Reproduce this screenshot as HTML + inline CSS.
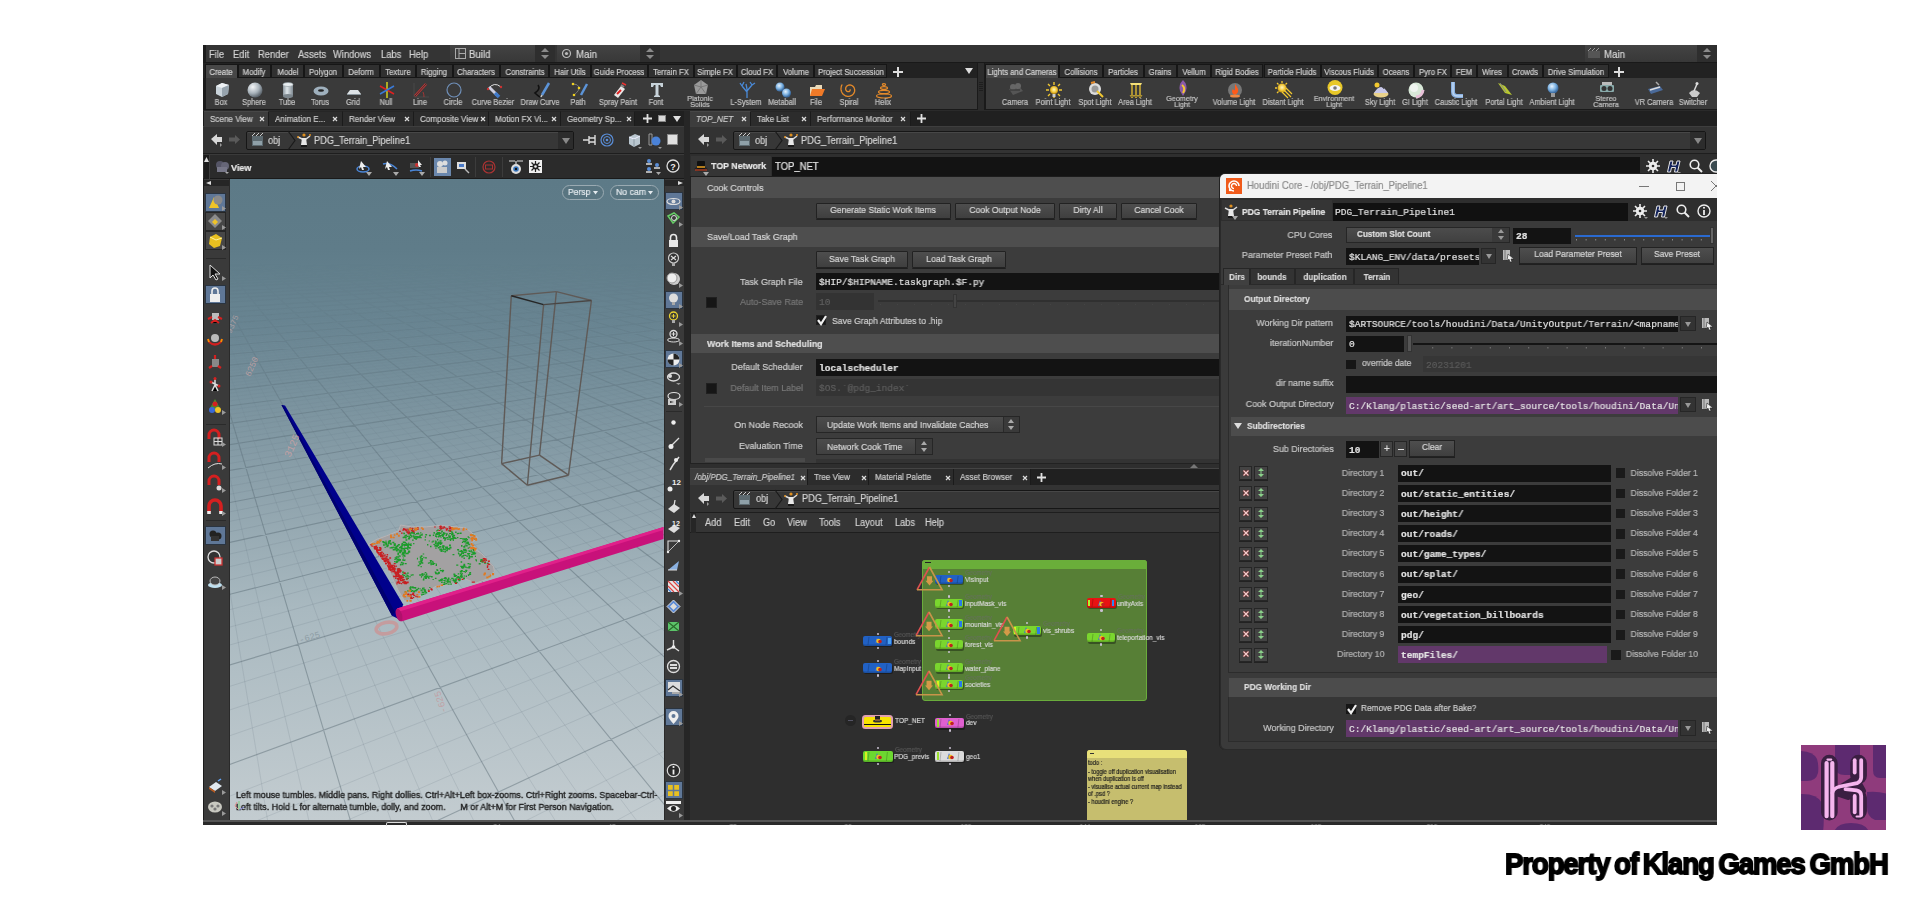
<!DOCTYPE html>
<html><head><meta charset="utf-8">
<style>
*{margin:0;padding:0;box-sizing:border-box}
html,body{width:1920px;height:911px;overflow:hidden;background:#fff;font-family:"Liberation Sans",sans-serif;color:#c8c8c8}
.a{position:absolute}
.t{position:absolute;white-space:nowrap;line-height:1;-webkit-text-stroke:0.2px currentColor;will-change:transform}
.m{font-family:"Liberation Mono",monospace}
svg{position:absolute;overflow:visible}









</style></head><body>
<div class="a" style="left:203px;top:45px;width:1514px;height:780px;background:#2a2a2a"></div><div class="a" style="left:203px;top:45px;width:1514px;height:18px;background:#343434;border-bottom:1px solid #191919;border-left:3px solid #1c1c1c"></div><div class="t" style="left:209px;transform-origin:0 50%;transform:scaleX(0.92);top:49.9px;font-size:10.2px;color:#d2d2d2;">File</div><div class="t" style="left:233px;transform-origin:0 50%;transform:scaleX(0.92);top:49.9px;font-size:10.2px;color:#d2d2d2;">Edit</div><div class="t" style="left:258px;transform-origin:0 50%;transform:scaleX(0.92);top:49.9px;font-size:10.2px;color:#d2d2d2;">Render</div><div class="t" style="left:297.5px;transform-origin:0 50%;transform:scaleX(0.92);top:49.9px;font-size:10.2px;color:#d2d2d2;">Assets</div><div class="t" style="left:333px;transform-origin:0 50%;transform:scaleX(0.92);top:49.9px;font-size:10.2px;color:#d2d2d2;">Windows</div><div class="t" style="left:381px;transform-origin:0 50%;transform:scaleX(0.92);top:49.9px;font-size:10.2px;color:#d2d2d2;">Labs</div><div class="t" style="left:409px;transform-origin:0 50%;transform:scaleX(0.92);top:49.9px;font-size:10.2px;color:#d2d2d2;">Help</div><div class="a" style="left:450px;top:45px;width:105px;height:17px;background:linear-gradient(#434343,#383838);border-right:1px solid #252525"></div><div class="a" style="left:535px;top:45px;width:20px;height:17px;background:#2e2e2e"></div><div class="t" style="left:469px;transform-origin:0 50%;transform:scaleX(0.92);top:48.75px;font-size:10.5px;color:#d8d8d8;">Build</div><svg style="left:541px;top:48px;" width="8" height="11" viewBox="0 0 8 11"><path d="M4 0L8 4H0Z M4 11L8 7H0Z" fill="#8a8a8a"/></svg><svg style="left:455px;top:48px;" width="11" height="11" viewBox="0 0 11 11"><rect x="0.5" y="0.5" width="10" height="10" fill="none" stroke="#aaa"/><path d="M4 1V10 M4 5.5H10" stroke="#aaa"/></svg><div class="a" style="left:557px;top:45px;width:103px;height:17px;background:linear-gradient(#434343,#383838);border-right:1px solid #252525"></div><div class="a" style="left:640px;top:45px;width:20px;height:17px;background:#2e2e2e"></div><div class="t" style="left:576px;transform-origin:0 50%;transform:scaleX(0.92);top:48.75px;font-size:10.5px;color:#d8d8d8;">Main</div><svg style="left:646px;top:48px;" width="8" height="11" viewBox="0 0 8 11"><path d="M4 0L8 4H0Z M4 11L8 7H0Z" fill="#8a8a8a"/></svg><svg style="left:561px;top:48px;" width="11" height="11" viewBox="0 0 11 11"><circle cx="5.5" cy="5.5" r="4" fill="none" stroke="#bbb" stroke-width="1.2"/><circle cx="5.5" cy="5.5" r="1.6" fill="#bbb"/></svg><div class="a" style="left:1585px;top:45px;width:132px;height:17px;background:linear-gradient(#434343,#383838);border-right:1px solid #252525"></div><div class="a" style="left:1697px;top:45px;width:20px;height:17px;background:#2e2e2e"></div><div class="t" style="left:1604px;transform-origin:0 50%;transform:scaleX(0.92);top:48.75px;font-size:10.5px;color:#d8d8d8;">Main</div><svg style="left:1703px;top:48px;" width="8" height="11" viewBox="0 0 8 11"><path d="M4 0L8 4H0Z M4 11L8 7H0Z" fill="#8a8a8a"/></svg><svg style="left:1588px;top:48px;" width="12" height="10" viewBox="0 0 12 10"><rect x="0" y="3" width="12" height="7" fill="#555"/><path d="M0 3L3 0M4 3L7 0M8 3L11 0" stroke="#999"/></svg><div class="a" style="left:203px;top:63px;width:1514px;height:15px;background:#222"></div><div class="a" style="left:205px;top:64px;width:32.5px;height:15px;background:#474747;border:1px solid #161616;border-bottom:none"></div><div class="t" style="left:221.25px;transform:translateX(-50%) scaleX(0.9);top:67.9px;font-size:8.6px;color:#d5d5d5;">Create</div><div class="a" style="left:237.5px;top:64px;width:33.5px;height:14px;background:#303030;border:1px solid #161616;border-bottom:1px solid #161616"></div><div class="t" style="left:254.25px;transform:translateX(-50%) scaleX(0.9);top:67.9px;font-size:8.6px;color:#cfcfcf;">Modify</div><div class="a" style="left:271px;top:64px;width:33px;height:14px;background:#303030;border:1px solid #161616;border-bottom:1px solid #161616"></div><div class="t" style="left:287.5px;transform:translateX(-50%) scaleX(0.9);top:67.9px;font-size:8.6px;color:#cfcfcf;">Model</div><div class="a" style="left:304px;top:64px;width:38.5px;height:14px;background:#303030;border:1px solid #161616;border-bottom:1px solid #161616"></div><div class="t" style="left:323.25px;transform:translateX(-50%) scaleX(0.9);top:67.9px;font-size:8.6px;color:#cfcfcf;">Polygon</div><div class="a" style="left:342.5px;top:64px;width:37.5px;height:14px;background:#303030;border:1px solid #161616;border-bottom:1px solid #161616"></div><div class="t" style="left:361.25px;transform:translateX(-50%) scaleX(0.9);top:67.9px;font-size:8.6px;color:#cfcfcf;">Deform</div><div class="a" style="left:380px;top:64px;width:36px;height:14px;background:#303030;border:1px solid #161616;border-bottom:1px solid #161616"></div><div class="t" style="left:398.0px;transform:translateX(-50%) scaleX(0.9);top:67.9px;font-size:8.6px;color:#cfcfcf;">Texture</div><div class="a" style="left:416px;top:64px;width:36.5px;height:14px;background:#303030;border:1px solid #161616;border-bottom:1px solid #161616"></div><div class="t" style="left:434.25px;transform:translateX(-50%) scaleX(0.9);top:67.9px;font-size:8.6px;color:#cfcfcf;">Rigging</div><div class="a" style="left:452.5px;top:64px;width:47.5px;height:14px;background:#303030;border:1px solid #161616;border-bottom:1px solid #161616"></div><div class="t" style="left:476.25px;transform:translateX(-50%) scaleX(0.9);top:67.9px;font-size:8.6px;color:#cfcfcf;">Characters</div><div class="a" style="left:500px;top:64px;width:49px;height:14px;background:#303030;border:1px solid #161616;border-bottom:1px solid #161616"></div><div class="t" style="left:524.5px;transform:translateX(-50%) scaleX(0.9);top:67.9px;font-size:8.6px;color:#cfcfcf;">Constraints</div><div class="a" style="left:549px;top:64px;width:42px;height:14px;background:#303030;border:1px solid #161616;border-bottom:1px solid #161616"></div><div class="t" style="left:570.0px;transform:translateX(-50%) scaleX(0.9);top:67.9px;font-size:8.6px;color:#cfcfcf;">Hair Utils</div><div class="a" style="left:591px;top:64px;width:56.5px;height:14px;background:#303030;border:1px solid #161616;border-bottom:1px solid #161616"></div><div class="t" style="left:619.25px;transform:translateX(-50%) scaleX(0.9);top:67.9px;font-size:8.6px;color:#cfcfcf;">Guide Process</div><div class="a" style="left:647.5px;top:64px;width:46.0px;height:14px;background:#303030;border:1px solid #161616;border-bottom:1px solid #161616"></div><div class="t" style="left:670.5px;transform:translateX(-50%) scaleX(0.9);top:67.9px;font-size:8.6px;color:#cfcfcf;">Terrain FX</div><div class="a" style="left:693.5px;top:64px;width:43.5px;height:14px;background:#303030;border:1px solid #161616;border-bottom:1px solid #161616"></div><div class="t" style="left:715.25px;transform:translateX(-50%) scaleX(0.9);top:67.9px;font-size:8.6px;color:#cfcfcf;">Simple FX</div><div class="a" style="left:737px;top:64px;width:40px;height:14px;background:#303030;border:1px solid #161616;border-bottom:1px solid #161616"></div><div class="t" style="left:757.0px;transform:translateX(-50%) scaleX(0.9);top:67.9px;font-size:8.6px;color:#cfcfcf;">Cloud FX</div><div class="a" style="left:777px;top:64px;width:37px;height:14px;background:#303030;border:1px solid #161616;border-bottom:1px solid #161616"></div><div class="t" style="left:795.5px;transform:translateX(-50%) scaleX(0.9);top:67.9px;font-size:8.6px;color:#cfcfcf;">Volume</div><div class="a" style="left:814px;top:64px;width:73px;height:14px;background:#303030;border:1px solid #161616;border-bottom:1px solid #161616"></div><div class="t" style="left:850.5px;transform:translateX(-50%) scaleX(0.9);top:67.9px;font-size:8.6px;color:#cfcfcf;">Project Succession</div><svg style="left:893px;top:67px;" width="10" height="10" viewBox="0 0 10 10"><path d="M5 0V10M0 5H10" stroke="#ddd" stroke-width="2"/></svg><svg style="left:965px;top:68px;" width="8" height="6" viewBox="0 0 8 6"><path d="M0 0H8L4 6Z" fill="#ddd"/></svg><div class="a" style="left:985px;top:64px;width:74px;height:15px;background:#474747;border:1px solid #161616;border-bottom:none"></div><div class="t" style="left:1022.0px;transform:translateX(-50%) scaleX(0.9);top:67.9px;font-size:8.6px;color:#d5d5d5;">Lights and Cameras</div><div class="a" style="left:1059px;top:64px;width:44px;height:14px;background:#303030;border:1px solid #161616;border-bottom:1px solid #161616"></div><div class="t" style="left:1081.0px;transform:translateX(-50%) scaleX(0.9);top:67.9px;font-size:8.6px;color:#cfcfcf;">Collisions</div><div class="a" style="left:1103px;top:64px;width:40.5px;height:14px;background:#303030;border:1px solid #161616;border-bottom:1px solid #161616"></div><div class="t" style="left:1123.25px;transform:translateX(-50%) scaleX(0.9);top:67.9px;font-size:8.6px;color:#cfcfcf;">Particles</div><div class="a" style="left:1143.5px;top:64px;width:33.0px;height:14px;background:#303030;border:1px solid #161616;border-bottom:1px solid #161616"></div><div class="t" style="left:1160.0px;transform:translateX(-50%) scaleX(0.9);top:67.9px;font-size:8.6px;color:#cfcfcf;">Grains</div><div class="a" style="left:1176.5px;top:64px;width:34.200000000000045px;height:14px;background:#303030;border:1px solid #161616;border-bottom:1px solid #161616"></div><div class="t" style="left:1193.6px;transform:translateX(-50%) scaleX(0.9);top:67.9px;font-size:8.6px;color:#cfcfcf;">Vellum</div><div class="a" style="left:1210.7px;top:64px;width:52.799999999999955px;height:14px;background:#303030;border:1px solid #161616;border-bottom:1px solid #161616"></div><div class="t" style="left:1237.1px;transform:translateX(-50%) scaleX(0.9);top:67.9px;font-size:8.6px;color:#cfcfcf;">Rigid Bodies</div><div class="a" style="left:1263.5px;top:64px;width:57.09999999999991px;height:14px;background:#303030;border:1px solid #161616;border-bottom:1px solid #161616"></div><div class="t" style="left:1292.05px;transform:translateX(-50%) scaleX(0.9);top:67.9px;font-size:8.6px;color:#cfcfcf;">Particle Fluids</div><div class="a" style="left:1320.6px;top:64px;width:57.0px;height:14px;background:#303030;border:1px solid #161616;border-bottom:1px solid #161616"></div><div class="t" style="left:1349.1px;transform:translateX(-50%) scaleX(0.9);top:67.9px;font-size:8.6px;color:#cfcfcf;">Viscous Fluids</div><div class="a" style="left:1377.6px;top:64px;width:36.40000000000009px;height:14px;background:#303030;border:1px solid #161616;border-bottom:1px solid #161616"></div><div class="t" style="left:1395.8px;transform:translateX(-50%) scaleX(0.9);top:67.9px;font-size:8.6px;color:#cfcfcf;">Oceans</div><div class="a" style="left:1414px;top:64px;width:37px;height:14px;background:#303030;border:1px solid #161616;border-bottom:1px solid #161616"></div><div class="t" style="left:1432.5px;transform:translateX(-50%) scaleX(0.9);top:67.9px;font-size:8.6px;color:#cfcfcf;">Pyro FX</div><div class="a" style="left:1451px;top:64px;width:26px;height:14px;background:#303030;border:1px solid #161616;border-bottom:1px solid #161616"></div><div class="t" style="left:1464.0px;transform:translateX(-50%) scaleX(0.9);top:67.9px;font-size:8.6px;color:#cfcfcf;">FEM</div><div class="a" style="left:1477px;top:64px;width:30.5px;height:14px;background:#303030;border:1px solid #161616;border-bottom:1px solid #161616"></div><div class="t" style="left:1492.25px;transform:translateX(-50%) scaleX(0.9);top:67.9px;font-size:8.6px;color:#cfcfcf;">Wires</div><div class="a" style="left:1507.5px;top:64px;width:35.5px;height:14px;background:#303030;border:1px solid #161616;border-bottom:1px solid #161616"></div><div class="t" style="left:1525.25px;transform:translateX(-50%) scaleX(0.9);top:67.9px;font-size:8.6px;color:#cfcfcf;">Crowds</div><div class="a" style="left:1543px;top:64px;width:66px;height:14px;background:#303030;border:1px solid #161616;border-bottom:1px solid #161616"></div><div class="t" style="left:1576.0px;transform:translateX(-50%) scaleX(0.9);top:67.9px;font-size:8.6px;color:#cfcfcf;">Drive Simulation</div><svg style="left:1614px;top:67px;" width="10" height="10" viewBox="0 0 10 10"><path d="M5 0V10M0 5H10" stroke="#ddd" stroke-width="2"/></svg><div class="a" style="left:203px;top:78px;width:774px;height:32px;background:#3a3a3a;border-left:3px solid #1c1c1c;border-bottom:1px solid #1a1a1a"></div><div class="a" style="left:977px;top:63px;width:8px;height:47px;background:#2c2c2c;border-left:1px solid #1a1a1a;border-right:1px solid #1a1a1a"></div><svg style="left:980px;top:82px;" width="3" height="10" viewBox="0 0 3 10"><path d="M0 0V10M2 0V10" stroke="#111" stroke-dasharray="1 1"/></svg><div class="a" style="left:985px;top:78px;width:732px;height:32px;background:#3a3a3a;border-bottom:1px solid #1a1a1a;border-left:1px solid #1a1a1a"></div>
<svg width="0" height="0" style="position:absolute"><defs>
<radialGradient id="gsph" cx="35%" cy="30%" r="70%"><stop offset="0" stop-color="#f4f6f8"/><stop offset="0.6" stop-color="#a9b3bb"/><stop offset="1" stop-color="#5d666e"/></radialGradient>
<linearGradient id="gcyl" x1="0" x2="1"><stop offset="0" stop-color="#8c979f"/><stop offset="0.4" stop-color="#dfe6ea"/><stop offset="1" stop-color="#7f8a92"/></linearGradient>
<radialGradient id="gyel" cx="50%" cy="45%" r="55%"><stop offset="0" stop-color="#fff7c0"/><stop offset="0.6" stop-color="#f3c83a"/><stop offset="1" stop-color="#b88a10"/></radialGradient>
<radialGradient id="gorg" cx="50%" cy="50%" r="55%"><stop offset="0" stop-color="#ffdd66"/><stop offset="0.7" stop-color="#ee5522"/><stop offset="1" stop-color="#aa2200"/></radialGradient>
<radialGradient id="gblu" cx="40%" cy="35%" r="60%"><stop offset="0" stop-color="#e8f4ff"/><stop offset="0.6" stop-color="#7ab0e0"/><stop offset="1" stop-color="#3a6aa0"/></radialGradient>
</defs></svg><svg style="left:213.0px;top:81.0px;" width="16" height="16" viewBox="0 0 16 16"><path d="M3 5L9 2L16 4L15 13L9 16L3 13Z" fill="#c9d3da"/><path d="M3 5L9 7L16 4L9 2Z" fill="#eef2f5"/><path d="M9 7L16 4L15 13L9 16Z" fill="#96a3ad"/></svg><div class="t" style="left:221px;transform:translateX(-50%) scaleX(0.9);top:99.2px;font-size:8.2px;color:#c4c4c4;">Box</div><svg style="left:246.0px;top:81.0px;" width="16" height="16" viewBox="0 0 16 16"><circle cx="9" cy="9" r="7.5" fill="url(#gsph)"/></svg><div class="t" style="left:254px;transform:translateX(-50%) scaleX(0.9);top:99.2px;font-size:8.2px;color:#c4c4c4;">Sphere</div><svg style="left:279.0px;top:81.0px;" width="16" height="16" viewBox="0 0 16 16"><rect x="4" y="3" width="10" height="12" rx="1" fill="url(#gcyl)"/><ellipse cx="9" cy="3.5" rx="5" ry="2" fill="#e9eef1" stroke="#8a959c" stroke-width=".6"/><ellipse cx="9" cy="15" rx="5" ry="2" fill="#7d878e"/></svg><div class="t" style="left:287px;transform:translateX(-50%) scaleX(0.9);top:99.2px;font-size:8.2px;color:#c4c4c4;">Tube</div><svg style="left:312.0px;top:81.0px;" width="16" height="16" viewBox="0 0 16 16"><ellipse cx="9" cy="10" rx="7.5" ry="4.5" fill="#9fb0bd"/><ellipse cx="9" cy="9.5" rx="3" ry="1.3" fill="#222"/></svg><div class="t" style="left:320px;transform:translateX(-50%) scaleX(0.9);top:99.2px;font-size:8.2px;color:#c4c4c4;">Torus</div><svg style="left:345.0px;top:81.0px;" width="16" height="16" viewBox="0 0 16 16"><path d="M2 13L5 9H13L16 13Z" fill="#dde3e7"/><path d="M2 13H16V14H2Z" fill="#8a959c"/></svg><div class="t" style="left:353px;transform:translateX(-50%) scaleX(0.9);top:99.2px;font-size:8.2px;color:#c4c4c4;">Grid</div><svg style="left:378.0px;top:81.0px;" width="16" height="16" viewBox="0 0 16 16"><path d="M9 1V17" stroke="#d6d11e" stroke-width="1.5"/><path d="M2 5L16 13" stroke="#e02020" stroke-width="1.5"/><path d="M2 13L16 5" stroke="#3a7ad8" stroke-width="1.5"/></svg><div class="t" style="left:386px;transform:translateX(-50%) scaleX(0.9);top:99.2px;font-size:8.2px;color:#c4c4c4;">Null</div><svg style="left:411.5px;top:81.0px;" width="16" height="16" viewBox="0 0 16 16"><path d="M2 16V2M2 16H17" stroke="#555" stroke-width=".6"/><path d="M3 15L14 3" stroke="#cc3333" stroke-width="2.5"/><path d="M3 15L14 3" stroke="#333" stroke-width="1"/><path d="M11 11Q12 13 12 16" stroke="#c33" fill="none" stroke-width=".7"/></svg><div class="t" style="left:419.5px;transform:translateX(-50%) scaleX(0.9);top:99.2px;font-size:8.2px;color:#c4c4c4;">Line</div><svg style="left:444.5px;top:81.0px;" width="16" height="16" viewBox="0 0 16 16"><circle cx="9" cy="9" r="7" fill="none" stroke="#6f8fb8" stroke-width="1.2"/></svg><div class="t" style="left:452.5px;transform:translateX(-50%) scaleX(0.9);top:99.2px;font-size:8.2px;color:#c4c4c4;">Circle</div><svg style="left:485.0px;top:81.0px;" width="16" height="16" viewBox="0 0 16 16"><path d="M3 8Q9 0 16 6" stroke="#ddd" fill="none" stroke-width="1"/><path d="M4 6L12 14" stroke="#ccd" stroke-width="3"/><path d="M10 12L14 16" stroke="#3f79c8" stroke-width="3.5"/><circle cx="3" cy="8" r="1.2" fill="#c33"/><circle cx="16" cy="6" r="1.2" fill="#c33"/></svg><div class="t" style="left:493px;transform:translateX(-50%) scaleX(0.9);top:99.2px;font-size:8.2px;color:#c4c4c4;">Curve Bezier</div><svg style="left:531.5px;top:81.0px;" width="16" height="16" viewBox="0 0 16 16"><path d="M6 4Q9 8 3 12Q6 15 8 16" stroke="#111" fill="none" stroke-width="1.6"/><path d="M17 2L10 14" stroke="#5c94d8" stroke-width="2.5"/><path d="M10 14L9 16" stroke="#ccc" stroke-width="1.5"/></svg><div class="t" style="left:539.5px;transform:translateX(-50%) scaleX(0.9);top:99.2px;font-size:8.2px;color:#c4c4c4;">Draw Curve</div><svg style="left:570.0px;top:81.0px;" width="16" height="16" viewBox="0 0 16 16"><path d="M3 3Q8 3 9 6T4 14" stroke="#888" fill="none" stroke-width=".8"/><circle cx="3" cy="3" r="1.3" fill="#f0d020"/><circle cx="9" cy="7" r="1.3" fill="#f0d020"/><circle cx="4" cy="14" r="1.3" fill="#f0d020"/><path d="M17 3L11 14" stroke="#5c94d8" stroke-width="2.5"/></svg><div class="t" style="left:578px;transform:translateX(-50%) scaleX(0.9);top:99.2px;font-size:8.2px;color:#c4c4c4;">Path</div><svg style="left:609.5px;top:81.0px;" width="16" height="16" viewBox="0 0 16 16"><path d="M4 14L11 5L15 8L8 17Z" fill="#e8e8e8"/><path d="M7 13L11 9" stroke="#d22" stroke-width="2"/><path d="M12 2L16 4" stroke="#e33" stroke-width="1.5"/><path d="M11 4L14 6" stroke="#888" stroke-width="2"/></svg><div class="t" style="left:617.5px;transform:translateX(-50%) scaleX(0.9);top:99.2px;font-size:8.2px;color:#c4c4c4;">Spray Paint</div><svg style="left:647.5px;top:81.0px;" width="16" height="16" viewBox="0 0 16 16"><path d="M3 2H15V6H13L12 4H10.5V14L12 15V16H6V15L7.5 14V4H6L5 6H3Z" fill="#c7d2d9"/></svg><div class="t" style="left:655.5px;transform:translateX(-50%) scaleX(0.9);top:99.2px;font-size:8.2px;color:#c4c4c4;">Font</div><svg style="left:692.0px;top:79.0px;" width="16" height="16" viewBox="0 0 16 16"><path d="M9 1L16 6L14 15L4 15L2 6Z" fill="#9a9a9a"/><path d="M9 1L9 8L16 6M9 8L4 15M9 8L14 15M9 8L2 6" stroke="#6a6a6a" stroke-width=".7" fill="none"/></svg><div class="t" style="left:700px;transform:translateX(-50%) scaleX(0.9);top:94.5px;font-size:8px;color:#c4c4c4;">Platonic</div><div class="t" style="left:700px;transform:translateX(-50%) scaleX(0.9);top:101.0px;font-size:8px;color:#c4c4c4;">Solids</div><svg style="left:737.5px;top:81.0px;" width="16" height="16" viewBox="0 0 16 16"><path d="M9 17V8M9 11L4 5M9 10L14 4M4 5L2 2M4 5L6 1M14 4L12 1M14 4L17 2M9 8L8 3" stroke="#4a8ad8" stroke-width="1.3" fill="none"/></svg><div class="t" style="left:745.5px;transform:translateX(-50%) scaleX(0.9);top:99.2px;font-size:8.2px;color:#c4c4c4;">L-System</div><svg style="left:774.0px;top:81.0px;" width="16" height="16" viewBox="0 0 16 16"><circle cx="6" cy="6" r="4.5" fill="url(#gblu)"/><circle cx="12.5" cy="12" r="4.5" fill="url(#gblu)"/></svg><div class="t" style="left:782px;transform:translateX(-50%) scaleX(0.9);top:99.2px;font-size:8.2px;color:#c4c4c4;">Metaball</div><svg style="left:808.0px;top:81.0px;" width="16" height="16" viewBox="0 0 16 16"><path d="M2 6H7L8 4H14V15H2Z" fill="#e9d9b8"/><path d="M4 8H17L14 15H2Z" fill="#f07a28"/></svg><div class="t" style="left:816px;transform:translateX(-50%) scaleX(0.9);top:99.2px;font-size:8.2px;color:#c4c4c4;">File</div><svg style="left:841.0px;top:81.0px;" width="16" height="16" viewBox="0 0 16 16"><path d="M8.9 8.5 L9.0 8.6 L9.0 8.7 L9.1 8.8 L9.1 8.9 L9.1 9.0 L9.1 9.1 L9.1 9.2 L9.1 9.4 L9.1 9.5 L9.0 9.6 L9.0 9.8 L8.9 9.9 L8.8 10.0 L8.7 10.2 L8.6 10.3 L8.4 10.4 L8.3 10.5 L8.1 10.5 L7.9 10.6 L7.7 10.7 L7.5 10.7 L7.3 10.7 L7.1 10.7 L6.9 10.7 L6.7 10.6 L6.5 10.6 L6.3 10.5 L6.1 10.4 L5.9 10.2 L5.7 10.1 L5.5 9.9 L5.3 9.7 L5.2 9.5 L5.1 9.3 L4.9 9.1 L4.8 8.8 L4.8 8.6 L4.7 8.3 L4.7 8.0 L4.7 7.7 L4.7 7.4 L4.7 7.1 L4.8 6.8 L4.9 6.5 L5.0 6.2 L5.2 5.9 L5.4 5.6 L5.6 5.4 L5.8 5.1 L6.1 4.9 L6.4 4.7 L6.7 4.5 L7.0 4.4 L7.4 4.2 L7.7 4.1 L8.1 4.1 L8.5 4.0 L8.9 4.0 L9.2 4.0 L9.6 4.1 L10.0 4.2 L10.4 4.3 L10.8 4.5 L11.2 4.7 L11.5 4.9 L11.9 5.2 L12.2 5.5 L12.5 5.8 L12.7 6.2 L13.0 6.6 L13.2 7.0 L13.4 7.4 L13.5 7.9 L13.6 8.3 L13.6 8.8 L13.7 9.3 L13.6 9.8 L13.6 10.3 L13.5 10.7 L13.3 11.2 L13.1 11.7 L12.9 12.2 L12.6 12.6 L12.3 13.0 L11.9 13.4 L11.5 13.8 L11.1 14.1 L10.6 14.4 L10.2 14.7 L9.6 14.9 L9.1 15.1 L8.6 15.2 L8.0 15.3 L7.4 15.3 L6.8 15.3 L6.2 15.3 L5.6 15.1 L5.1 15.0 L4.5 14.8 L4.0 14.5 L3.4 14.2 L2.9 13.8 L2.4 13.4 L2.0 13.0 L1.6 12.5 L1.2 11.9 L0.9 11.4 L0.6 10.8 L0.4 10.2 L0.2 9.5 L0.1 8.9 L0.0 8.2 L-0.0 7.5 L0.0 6.8 L0.2 6.2 L0.3 5.5 L0.5 4.8 L0.8 4.2 L1.2 3.5" stroke="#e58a2a" stroke-width="1.3" fill="none"/></svg><div class="t" style="left:849px;transform:translateX(-50%) scaleX(0.9);top:99.2px;font-size:8.2px;color:#c4c4c4;">Spiral</div><svg style="left:875.0px;top:81.0px;" width="16" height="16" viewBox="0 0 16 16"><ellipse cx="9" cy="15" rx="7.5" ry="2" stroke="#e58a2a" stroke-width="1.2" fill="none"/><ellipse cx="9" cy="11" rx="5.5" ry="1.7" stroke="#e58a2a" stroke-width="1.2" fill="none"/><ellipse cx="9" cy="7" rx="3.5" ry="1.4" stroke="#e58a2a" stroke-width="1.2" fill="none"/><ellipse cx="9" cy="3.5" rx="1.6" ry="1" stroke="#e58a2a" stroke-width="1.2" fill="none"/></svg><div class="t" style="left:883px;transform:translateX(-50%) scaleX(0.9);top:99.2px;font-size:8.2px;color:#c4c4c4;">Helix</div><svg style="left:1006.7px;top:81.0px;" width="16" height="16" viewBox="0 0 16 16"><path d="M2 8L12 5L16 10L6 14Z" fill="#555"/><circle cx="6" cy="6" r="3" fill="#666"/><circle cx="11" cy="5" r="3" fill="#666"/><path d="M3 9H13" stroke="#333"/></svg><div class="t" style="left:1014.7px;transform:translateX(-50%) scaleX(0.9);top:99.2px;font-size:8.2px;color:#c4c4c4;">Camera</div><svg style="left:1045.0px;top:81.0px;" width="16" height="16" viewBox="0 0 16 16"><circle cx="9" cy="9" r="4" fill="url(#gyel)"/><path d="M9 1V4M9 14V17M1 9H4M14 9H17M3 3L5 5M13 13L15 15M3 15L5 13M13 5L15 3" stroke="#f2c830" stroke-width="1.4"/><rect x="7.5" y="13" width="3" height="3" fill="#ccc"/></svg><div class="t" style="left:1053px;transform:translateX(-50%) scaleX(0.9);top:99.2px;font-size:8.2px;color:#c4c4c4;">Point Light</div><svg style="left:1087.0px;top:81.0px;" width="16" height="16" viewBox="0 0 16 16"><circle cx="8" cy="8" r="6" fill="#ddd"/><circle cx="8" cy="8" r="3.5" fill="#999"/><path d="M10 10L16 16" stroke="#f2c830" stroke-width="2"/><path d="M4 2L8 1" stroke="#e58a2a" stroke-width="2"/></svg><div class="t" style="left:1095px;transform:translateX(-50%) scaleX(0.9);top:99.2px;font-size:8.2px;color:#c4c4c4;">Spot Light</div><svg style="left:1127.0px;top:81.0px;" width="16" height="16" viewBox="0 0 16 16"><path d="M3 2H15L14 4H4Z" fill="#f4e07a"/><path d="M5 4V15M9 4V15M13 4V15" stroke="#e8c030" stroke-width="1.3"/><path d="M3 14L5 17L7 14M7 14L9 17L11 14M11 14L13 17L15 14" fill="none" stroke="#e8c030" stroke-width=".8"/></svg><div class="t" style="left:1135px;transform:translateX(-50%) scaleX(0.9);top:99.2px;font-size:8.2px;color:#c4c4c4;">Area Light</div><svg style="left:1174.0px;top:79.0px;" width="16" height="16" viewBox="0 0 16 16"><path d="M9 1Q14 6 12 12L9 17L6 12Q4 6 9 1Z" fill="#8a5aa8"/><path d="M8 6Q12 9 9 14" stroke="#f2c830" stroke-width="2" fill="none"/></svg><div class="t" style="left:1182px;transform:translateX(-50%) scaleX(0.9);top:94.5px;font-size:8px;color:#c4c4c4;">Geometry</div><div class="t" style="left:1182px;transform:translateX(-50%) scaleX(0.9);top:101.0px;font-size:8px;color:#c4c4c4;">Light</div><svg style="left:1226.0px;top:81.0px;" width="16" height="16" viewBox="0 0 16 16"><circle cx="9" cy="9" r="7" fill="#777"/><path d="M9 3Q13 8 12 11Q10 15 7 13Q5 10 7 8Q8 10 9 9Q9 6 9 3Z" fill="#ff5a1a"/><ellipse cx="9" cy="15" rx="5" ry="1.5" fill="#e84"/></svg><div class="t" style="left:1234px;transform:translateX(-50%) scaleX(0.9);top:99.2px;font-size:8.2px;color:#c4c4c4;">Volume Light</div><svg style="left:1275.0px;top:81.0px;" width="16" height="16" viewBox="0 0 16 16"><circle cx="7" cy="7" r="4.5" fill="url(#gyel)"/><path d="M7 0V2M0 7H2M2 2L3.5 3.5M12 2L10.5 3.5M2 12L3.5 10.5" stroke="#f2c830" stroke-width="1.3"/><path d="M9 9L16 16M11 7L17 13M7 11L13 17" stroke="#f2c830" stroke-width="1.2"/></svg><div class="t" style="left:1283px;transform:translateX(-50%) scaleX(0.9);top:99.2px;font-size:8.2px;color:#c4c4c4;">Distant Light</div><svg style="left:1326.0px;top:79.0px;" width="16" height="16" viewBox="0 0 16 16"><circle cx="9" cy="8.5" r="7.5" fill="#e8c828"/><ellipse cx="9" cy="9" rx="5.5" ry="3" fill="#f4f4f4"/><circle cx="9" cy="9" r="1.8" fill="#777"/></svg><div class="t" style="left:1334px;transform:translateX(-50%) scaleX(0.9);top:94.5px;font-size:8px;color:#c4c4c4;">Environment</div><div class="t" style="left:1334px;transform:translateX(-50%) scaleX(0.9);top:101.0px;font-size:8px;color:#c4c4c4;">Light</div><svg style="left:1371.6px;top:81.0px;" width="16" height="16" viewBox="0 0 16 16"><ellipse cx="9" cy="13" rx="7.5" ry="3.5" fill="#e9d28a"/><path d="M2 12Q9 0 16 12Z" fill="#c8c8e8"/><circle cx="5" cy="4" r="2.5" fill="#f2c830"/><path d="M9 4L12 8" stroke="#333" stroke-width=".8"/></svg><div class="t" style="left:1379.6px;transform:translateX(-50%) scaleX(0.9);top:99.2px;font-size:8.2px;color:#c4c4c4;">Sky Light</div><svg style="left:1406.8px;top:81.0px;" width="16" height="16" viewBox="0 0 16 16"><circle cx="9" cy="9" r="7.5" fill="#d8e8d8"/><circle cx="7" cy="7" r="4" fill="#f0f4f0"/><path d="M9 16A7.5 7.5 0 0 0 16 9" stroke="#e8c0d8" stroke-width="3" fill="none"/></svg><div class="t" style="left:1414.8px;transform:translateX(-50%) scaleX(0.9);top:99.2px;font-size:8.2px;color:#c4c4c4;">GI Light</div><svg style="left:1447.9px;top:81.0px;" width="16" height="16" viewBox="0 0 16 16"><path d="M5 1V11Q5 15 10 15H15" stroke="#8ab0e0" stroke-width="4" fill="none"/><path d="M5 1V11Q5 15 10 15H15" stroke="#bcd4f0" stroke-width="1.5" fill="none"/></svg><div class="t" style="left:1455.9px;transform:translateX(-50%) scaleX(0.9);top:99.2px;font-size:8.2px;color:#c4c4c4;">Caustic Light</div><svg style="left:1495.6px;top:81.0px;" width="16" height="16" viewBox="0 0 16 16"><path d="M2 2L9 5L16 14L9 12Z" fill="#b8c830"/><path d="M4 2L10 11" stroke="#888" stroke-width="1"/></svg><div class="t" style="left:1503.6px;transform:translateX(-50%) scaleX(0.9);top:99.2px;font-size:8.2px;color:#c4c4c4;">Portal Light</div><svg style="left:1544.4px;top:81.0px;" width="16" height="16" viewBox="0 0 16 16"><circle cx="9" cy="7" r="5.5" fill="url(#gblu)"/><rect x="7" y="12" width="4" height="4" fill="#999"/></svg><div class="t" style="left:1552.4px;transform:translateX(-50%) scaleX(0.9);top:99.2px;font-size:8.2px;color:#c4c4c4;">Ambient Light</div><svg style="left:1598.0px;top:79.0px;" width="16" height="16" viewBox="0 0 16 16"><rect x="2" y="6" width="14" height="7" rx="1" fill="#8aa"/><circle cx="6" cy="9.5" r="2.5" fill="#333"/><circle cx="12" cy="9.5" r="2.5" fill="#333"/><rect x="4" y="3" width="10" height="3" fill="#bbb"/></svg><div class="t" style="left:1606px;transform:translateX(-50%) scaleX(0.9);top:94.5px;font-size:8px;color:#c4c4c4;">Stereo</div><div class="t" style="left:1606px;transform:translateX(-50%) scaleX(0.9);top:101.0px;font-size:8px;color:#c4c4c4;">Camera</div><svg style="left:1646.0px;top:81.0px;" width="16" height="16" viewBox="0 0 16 16"><path d="M2 8L14 5L17 9L5 13Z" fill="#4a6a9a"/><path d="M4 9L14 6" stroke="#ddd" stroke-width="1.5"/><path d="M10 1L13 4" stroke="#aaa" stroke-width="1.5"/></svg><div class="t" style="left:1654px;transform:translateX(-50%) scaleX(0.9);top:99.2px;font-size:8.2px;color:#c4c4c4;">VR Camera</div><svg style="left:1685.0px;top:81.0px;" width="16" height="16" viewBox="0 0 16 16"><path d="M4 12Q9 6 15 12L12 16H7Z" fill="#ccc"/><path d="M9 10L12 3" stroke="#ddd" stroke-width="1.5"/><circle cx="12" cy="2.5" r="1.5" fill="#ddd"/></svg><div class="t" style="left:1693px;transform:translateX(-50%) scaleX(0.9);top:99.2px;font-size:8.2px;color:#c4c4c4;">Switcher</div>
<div class="a" style="left:684px;top:111px;width:6px;height:714px;background:#262626"></div><div class="a" style="left:203px;top:111px;width:481px;height:15px;background:#202020;border-left:3px solid #1c1c1c"></div><div class="a" style="left:690px;top:111px;width:1027px;height:15px;background:#202020"></div><div class="a" style="left:204px;top:111px;width:65px;height:15px;background:#3d3d3d;border-right:1px solid #1b1b1b;border-top:1px solid #474747"></div><div class="t" style="left:210px;transform-origin:0 50%;transform:scaleX(0.92);top:114.7px;font-size:8.8px;color:#cdcdcd;">Scene View</div><svg style="left:260px;top:117.0px;" width="4" height="4" viewBox="0 0 4 4"><path d="M0 0L4 4M4 0L0 4" stroke="#ddd" stroke-width="1.2"/></svg><div class="a" style="left:269px;top:111px;width:73.5px;height:15px;background:#2c2c2c;border-right:1px solid #1b1b1b;border-top:1px solid #262626"></div><div class="t" style="left:275px;transform-origin:0 50%;transform:scaleX(0.92);top:114.7px;font-size:8.8px;color:#cdcdcd;">Animation E...</div><svg style="left:333px;top:117.0px;" width="4" height="4" viewBox="0 0 4 4"><path d="M0 0L4 4M4 0L0 4" stroke="#ddd" stroke-width="1.2"/></svg><div class="a" style="left:342.5px;top:111px;width:71.5px;height:15px;background:#2c2c2c;border-right:1px solid #1b1b1b;border-top:1px solid #262626"></div><div class="t" style="left:348.5px;transform-origin:0 50%;transform:scaleX(0.92);top:114.7px;font-size:8.8px;color:#cdcdcd;">Render View</div><svg style="left:405px;top:117.0px;" width="4" height="4" viewBox="0 0 4 4"><path d="M0 0L4 4M4 0L0 4" stroke="#ddd" stroke-width="1.2"/></svg><div class="a" style="left:414px;top:111px;width:75px;height:15px;background:#2c2c2c;border-right:1px solid #1b1b1b;border-top:1px solid #262626"></div><div class="t" style="left:420px;transform-origin:0 50%;transform:scaleX(0.92);top:114.7px;font-size:8.8px;color:#cdcdcd;">Composite View</div><svg style="left:480.5px;top:117.0px;" width="4" height="4" viewBox="0 0 4 4"><path d="M0 0L4 4M4 0L0 4" stroke="#ddd" stroke-width="1.2"/></svg><div class="a" style="left:489px;top:111px;width:72px;height:15px;background:#2c2c2c;border-right:1px solid #1b1b1b;border-top:1px solid #262626"></div><div class="t" style="left:495px;transform-origin:0 50%;transform:scaleX(0.92);top:114.7px;font-size:8.8px;color:#cdcdcd;">Motion FX Vi...</div><svg style="left:552px;top:117.0px;" width="4" height="4" viewBox="0 0 4 4"><path d="M0 0L4 4M4 0L0 4" stroke="#ddd" stroke-width="1.2"/></svg><div class="a" style="left:561px;top:111px;width:74px;height:15px;background:#2c2c2c;border-right:1px solid #1b1b1b;border-top:1px solid #262626"></div><div class="t" style="left:567px;transform-origin:0 50%;transform:scaleX(0.92);top:114.7px;font-size:8.8px;color:#cdcdcd;">Geometry Sp...</div><svg style="left:627px;top:117.0px;" width="4" height="4" viewBox="0 0 4 4"><path d="M0 0L4 4M4 0L0 4" stroke="#ddd" stroke-width="1.2"/></svg><svg style="left:643px;top:114px;" width="9" height="9" viewBox="0 0 9 9"><path d="M4.5 0V9M0 4.5H9" stroke="#e0e0e0" stroke-width="1.8"/></svg><div class="a" style="left:658px;top:115px;width:8px;height:7px;background:#d8d8d8;border:1px solid #888"></div><svg style="left:673px;top:116px;" width="8" height="6" viewBox="0 0 8 6"><path d="M0 0H8L4 6Z" fill="#e0e0e0"/></svg><div class="a" style="left:690px;top:111px;width:61px;height:15px;background:#3d3d3d;border-right:1px solid #1b1b1b;border-top:1px solid #474747"></div><div class="t" style="left:696px;transform-origin:0 50%;transform:scaleX(0.92);top:114.7px;font-size:8.8px;color:#cdcdcd;font-style:italic">TOP_NET</div><svg style="left:741.7px;top:117.0px;" width="4" height="4" viewBox="0 0 4 4"><path d="M0 0L4 4M4 0L0 4" stroke="#ddd" stroke-width="1.2"/></svg><div class="a" style="left:751px;top:111px;width:60px;height:15px;background:#2c2c2c;border-right:1px solid #1b1b1b;border-top:1px solid #262626"></div><div class="t" style="left:757px;transform-origin:0 50%;transform:scaleX(0.92);top:114.7px;font-size:8.8px;color:#cdcdcd;">Take List</div><svg style="left:802px;top:117.0px;" width="4" height="4" viewBox="0 0 4 4"><path d="M0 0L4 4M4 0L0 4" stroke="#ddd" stroke-width="1.2"/></svg><div class="a" style="left:811px;top:111px;width:100px;height:15px;background:#2c2c2c;border-right:1px solid #1b1b1b;border-top:1px solid #262626"></div><div class="t" style="left:817px;transform-origin:0 50%;transform:scaleX(0.92);top:114.7px;font-size:8.8px;color:#cdcdcd;">Performance Monitor</div><svg style="left:901px;top:117.0px;" width="4" height="4" viewBox="0 0 4 4"><path d="M0 0L4 4M4 0L0 4" stroke="#ddd" stroke-width="1.2"/></svg><svg style="left:917px;top:114px;" width="9" height="9" viewBox="0 0 9 9"><path d="M4.5 0V9M0 4.5H9" stroke="#e0e0e0" stroke-width="1.8"/></svg><div class="a" style="left:203px;top:126px;width:481px;height:28px;background:#333;border-top:1px solid #3e3e3e;border-bottom:1px solid #1e1e1e"></div><svg style="left:211px;top:134px;" width="12" height="11" viewBox="0 0 12 11"><path d="M0 5L6 0V3H11V8H6V11Z" fill="#d8d8d8"/><path d="M9 9L11 11L9 13" fill="#999"/></svg><svg style="left:229px;top:135px;" width="11" height="9" viewBox="0 0 11 9"><path d="M11 4.5L6 0V2.5H0V6.5H6V9Z" fill="#5a5a5a"/></svg><div class="a" style="left:246px;top:131px;width:328px;height:19px;background:#373737;border:1px solid #161616;border-radius:2px;box-shadow:inset 0 1px 0 #474747"></div><svg style="left:251px;top:133px;" width="13" height="14" viewBox="0 0 13 14"><rect x="1" y="3" width="11" height="10" fill="#5d6a70"/><rect x="2" y="8" width="9" height="4" fill="#8fa0a8"/><path d="M1 3L4 0M5 3L8 0M9 3L12 0" stroke="#ccc" stroke-width="1"/></svg><div class="t" style="left:268px;transform-origin:0 50%;transform:scaleX(0.92);top:135.8px;font-size:10px;color:#d5d5d5;">obj</div><svg style="left:288px;top:131px;" width="8" height="19" viewBox="0 0 8 19"><path d="M0 0L7 9.5L0 19" stroke="#1a1a1a" fill="none" stroke-width="1.2"/></svg><svg style="left:297px;top:132px;" width="14" height="15" viewBox="0 0 14 15"><circle cx="7" cy="3" r="1.6" fill="#e09020"/><path d="M1 5L5 7H9L13 4" stroke="#ddd" stroke-width="1.5" fill="none"/><path d="M5 6H9L10 13H4Z" fill="#e8e8e8"/><path d="M4 14H10" stroke="#111" stroke-width="1.5"/><circle cx="1" cy="5" r="1" fill="#e09020"/><circle cx="13" cy="3" r="1" fill="#e09020"/></svg><div class="t" style="left:314px;transform-origin:0 50%;transform:scaleX(0.92);top:135.8px;font-size:10px;color:#d5d5d5;">PDG_Terrain_Pipeline1</div><div class="a" style="left:558px;top:132px;width:15px;height:17px;background:#2c2c2c"></div><svg style="left:562px;top:138px;" width="8" height="6" viewBox="0 0 8 6"><path d="M0 0H8L4 6Z" fill="#888"/></svg><div class="a" style="left:690px;top:126px;width:1027px;height:28px;background:#333;border-top:1px solid #3e3e3e;border-bottom:1px solid #1e1e1e"></div><svg style="left:698px;top:134px;" width="12" height="11" viewBox="0 0 12 11"><path d="M0 5L6 0V3H11V8H6V11Z" fill="#d8d8d8"/><path d="M9 9L11 11L9 13" fill="#999"/></svg><svg style="left:716px;top:135px;" width="11" height="9" viewBox="0 0 11 9"><path d="M11 4.5L6 0V2.5H0V6.5H6V9Z" fill="#5a5a5a"/></svg><div class="a" style="left:733px;top:131px;width:973px;height:19px;background:#373737;border:1px solid #161616;border-radius:2px;box-shadow:inset 0 1px 0 #474747"></div><svg style="left:738px;top:133px;" width="13" height="14" viewBox="0 0 13 14"><rect x="1" y="3" width="11" height="10" fill="#5d6a70"/><rect x="2" y="8" width="9" height="4" fill="#8fa0a8"/><path d="M1 3L4 0M5 3L8 0M9 3L12 0" stroke="#ccc" stroke-width="1"/></svg><div class="t" style="left:755px;transform-origin:0 50%;transform:scaleX(0.92);top:135.8px;font-size:10px;color:#d5d5d5;">obj</div><svg style="left:775px;top:131px;" width="8" height="19" viewBox="0 0 8 19"><path d="M0 0L7 9.5L0 19" stroke="#1a1a1a" fill="none" stroke-width="1.2"/></svg><svg style="left:784px;top:132px;" width="14" height="15" viewBox="0 0 14 15"><circle cx="7" cy="3" r="1.6" fill="#e09020"/><path d="M1 5L5 7H9L13 4" stroke="#ddd" stroke-width="1.5" fill="none"/><path d="M5 6H9L10 13H4Z" fill="#e8e8e8"/><path d="M4 14H10" stroke="#111" stroke-width="1.5"/><circle cx="1" cy="5" r="1" fill="#e09020"/><circle cx="13" cy="3" r="1" fill="#e09020"/></svg><div class="t" style="left:801px;transform-origin:0 50%;transform:scaleX(0.92);top:135.8px;font-size:10px;color:#d5d5d5;">PDG_Terrain_Pipeline1</div><div class="a" style="left:1690px;top:132px;width:15px;height:17px;background:#2c2c2c"></div><svg style="left:1694px;top:138px;" width="8" height="6" viewBox="0 0 8 6"><path d="M0 0H8L4 6Z" fill="#888"/></svg><svg style="left:583px;top:135px;" width="14" height="10" viewBox="0 0 14 10"><path d="M0 5H6M6 1V9M6 3H12V7H6M12 0V10" stroke="#ddd" stroke-width="1.4" fill="none"/></svg><svg style="left:600px;top:133px;" width="14" height="14" viewBox="0 0 14 14"><circle cx="7" cy="7" r="6" fill="none" stroke="#5a8ed8" stroke-width="1.2"/><circle cx="7" cy="7" r="3.5" fill="none" stroke="#5a8ed8" stroke-width="1"/><circle cx="7" cy="7" r="1.3" fill="#5a8ed8"/></svg><svg style="left:627px;top:133px;" width="15" height="15" viewBox="0 0 15 15"><path d="M2 4L8 1L13 3V11L7 14L2 11Z" fill="#b9c6cf"/><path d="M2 4L7 6L13 3" stroke="#eef" fill="none"/><path d="M7 6V14" stroke="#8a98a2"/><path d="M11 14H15L13 16Z" fill="#999"/></svg><svg style="left:647px;top:133px;" width="15" height="15" viewBox="0 0 15 15"><path d="M2 1H5V12H2Z" fill="none" stroke="#999"/><circle cx="9" cy="8" r="4.5" fill="#4a82d8"/><path d="M11 14H15L13 16Z" fill="#999"/></svg><div class="a" style="left:667px;top:134px;width:11px;height:11px;background:#e0e0e0;border:1px solid #888"></div><div class="a" style="left:203px;top:154px;width:481px;height:25px;background:#2b2b2b;border-top:1px solid #3a3a3a;border-bottom:1px solid #1a1a1a"></div><div class="a" style="left:204px;top:155px;width:5px;height:24px;background:#1c1c1c"></div><svg style="left:204px;top:157px;" width="5" height="5" viewBox="0 0 5 5"><path d="M2.5 0L5 5H0Z" fill="#ddd"/></svg><div class="a" style="left:209px;top:155px;width:1px;height:24px;background:#3d3d3d"></div><svg style="left:214px;top:160px;" width="17" height="15" viewBox="0 0 17 15"><circle cx="6" cy="5" r="4" fill="#556"/><circle cx="11" cy="6" r="4" fill="#667"/><rect x="3" y="7" width="10" height="5" fill="#778"/><path d="M11 12H15L13 14Z" fill="#aaa"/></svg><div class="t" style="left:231px;transform-origin:0 50%;transform:scaleX(0.95);top:162.65px;font-size:9.5px;color:#e8e8e8;font-weight:bold">View</div><svg style="left:354.8px;top:159px;" width="16" height="16" viewBox="0 0 16 16"><ellipse cx="8" cy="10" rx="6" ry="3" fill="none" stroke="#4a86d8" stroke-width="1.5"/><path d="M6 2L11 8H8L9 11L7 11L6 8L4 10Z" fill="#eee"/></svg><svg style="left:365.8px;top:172px;" width="6" height="4" viewBox="0 0 6 4"><path d="M0 0H6L3 4Z" fill="#aaa"/></svg><svg style="left:382.0px;top:159px;" width="16" height="16" viewBox="0 0 16 16"><path d="M1 5Q8 3 15 10" stroke="#4a86d8" stroke-width="1.5" fill="none"/><path d="M5 2L10 8H7L8 11L6 11L5 8L3 10Z" fill="#eee"/></svg><svg style="left:393px;top:172px;" width="6" height="4" viewBox="0 0 6 4"><path d="M0 0H6L3 4Z" fill="#aaa"/></svg><svg style="left:408.0px;top:159px;" width="16" height="16" viewBox="0 0 16 16"><rect x="2" y="4" width="9" height="5" fill="#555"/><circle cx="9" cy="6" r="2" fill="#c33"/><path d="M2 12Q8 10 14 12" stroke="#4a86d8" stroke-width="1.5" fill="none"/><path d="M10 1L14 6H12L13 8H11L10 6Z" fill="#eee"/></svg><svg style="left:419px;top:172px;" width="6" height="4" viewBox="0 0 6 4"><path d="M0 0H6L3 4Z" fill="#aaa"/></svg><div class="a" style="left:430px;top:157px;width:1px;height:20px;background:#3c3c3c"></div><div class="a" style="left:434px;top:158px;width:17px;height:18px;background:#6a87ad"></div><svg style="left:435px;top:159px;" width="15" height="16" viewBox="0 0 15 16"><circle cx="5" cy="5" r="3" fill="#ddd"/><circle cx="10" cy="4" r="2.5" fill="#ddd"/><rect x="2" y="8" width="10" height="6" fill="#ccc"/></svg><svg style="left:456px;top:160px;" width="14" height="14" viewBox="0 0 14 14"><rect x="1" y="2" width="9" height="7" fill="#ddd"/><rect x="3" y="4" width="5" height="3" fill="#4a7ac8"/><path d="M9 9L13 13" stroke="#bbb" stroke-width="1.4"/></svg><div class="a" style="left:475px;top:157px;width:1px;height:20px;background:#3c3c3c"></div><svg style="left:482px;top:160px;" width="14" height="14" viewBox="0 0 14 14"><circle cx="7" cy="7" r="6" fill="none" stroke="#a33" stroke-width="1.2"/><rect x="3.5" y="5" width="7" height="4" fill="none" stroke="#a33"/></svg><div class="a" style="left:502px;top:157px;width:1px;height:20px;background:#3c3c3c"></div><svg style="left:508px;top:159px;" width="16" height="16" viewBox="0 0 16 16"><path d="M1 2H7M9 2H15M8 2V5" stroke="#ddd" stroke-width="1.2"/><circle cx="8" cy="10" r="5" fill="#ddd"/><circle cx="8" cy="10" r="2.8" fill="#3a78c0"/><circle cx="8" cy="10" r="1.2" fill="#111"/></svg><div class="a" style="left:529px;top:160px;width:13px;height:13px;background:#f0f0f0"></div><svg style="left:530px;top:161px;" width="11" height="11" viewBox="0 0 11 11"><circle cx="5.5" cy="5.5" r="3" fill="#222"/><path d="M5.5 0V11M0 5.5H11M1.5 1.5L9.5 9.5M9.5 1.5L1.5 9.5" stroke="#222" stroke-width="1.2"/><circle cx="5.5" cy="5.5" r="1.3" fill="#f0f0f0"/></svg><svg style="left:646px;top:158px;" width="16" height="17" viewBox="0 0 16 17"><circle cx="3" cy="3" r="2" fill="#5a8ed8"/><circle cx="11" cy="7" r="2" fill="#5a8ed8"/><circle cx="3" cy="11" r="2" fill="#5a8ed8"/><path d="M0 6H6M8 10H14M0 14H6" stroke="#ddd" stroke-width="1.3"/><path d="M10 14H15L12.5 17Z" fill="#aaa"/></svg><svg style="left:666px;top:159px;" width="14" height="14" viewBox="0 0 14 14"><circle cx="7" cy="7" r="6" fill="#222" stroke="#ddd" stroke-width="1.3"/><text x="7" y="10.5" font-size="9" font-weight="bold" text-anchor="middle" fill="#eee" font-family="Liberation Sans">?</text></svg><div class="a" style="left:690px;top:154px;width:1027px;height:23px;background:#2e2e2e;border-bottom:1px solid #1c1c1c"></div><div class="a" style="left:691px;top:156px;width:80px;height:20px;background:#353535"></div><svg style="left:694px;top:159px;" width="14" height="13" viewBox="0 0 14 13"><ellipse cx="7" cy="10" rx="6.5" ry="2.5" fill="#222"/><rect x="3" y="2" width="8" height="8" rx="1" fill="#111"/><path d="M3 8H11" stroke="#e8a020" stroke-width="1.5"/><path d="M1 11H13" stroke="#d42" stroke-width="1"/></svg><svg style="left:703px;top:172px;" width="6" height="4" viewBox="0 0 6 4"><path d="M0 0H6L3 4Z" fill="#aaa"/></svg><div class="t" style="left:711px;transform-origin:0 50%;transform:scaleX(0.93);top:161.25px;font-size:9.5px;color:#e8e8e8;font-weight:bold">TOP Network</div><div class="a" style="left:771.5px;top:157px;width:868px;height:19px;background:#131313"></div><div class="t" style="left:775px;transform-origin:0 50%;transform:scaleX(0.95);top:161.5px;font-size:10px;color:#e6e6e6;">TOP_NET</div><svg style="left:1646px;top:159px;" width="15" height="15" viewBox="0 0 15 15"><circle cx="7" cy="7" r="3.2" fill="none" stroke="#eee" stroke-width="2"/><path d="M7 0V14M0 7H14M2 2L12 12M12 2L2 12" stroke="#eee" stroke-width="1.6"/><circle cx="7" cy="7" r="1.3" fill="#2e2e2e"/></svg><svg style="left:1667px;top:159.5px;" width="14" height="13" viewBox="0 0 14 13"><path d="M3 1H6L5 5H9L10 1H13L10.5 12H7.5L8.5 7.5H4.5L3.5 12H0.5Z" fill="#12225a" stroke="#e8e8e8" stroke-width="1"/><path d="M10 12H14L12 14Z" fill="#999"/></svg><svg style="left:1689px;top:159px;" width="14" height="14" viewBox="0 0 14 14"><circle cx="5.5" cy="5.5" r="4.3" fill="none" stroke="#eee" stroke-width="1.6"/><path d="M8.5 8.5L13 13" stroke="#eee" stroke-width="2"/></svg><div class="a" style="left:1700px;top:155px;width:17px;height:22px;overflow:hidden"><svg style="left:9px;top:4px;" width="14" height="14" viewBox="0 0 14 14"><circle cx="7" cy="7" r="6" fill="#3a4a50" stroke="#eee" stroke-width="1.4"/></svg></div>
<div class="a" style="left:230px;top:179px;width:433.5px;height:641px;background:linear-gradient(#5d7a87 0px,#5f7c89 70px,#6a8693 150px,#8ba0aa 300px,#a9b9c0 430px,#c3ccd0 641px)"></div><svg style="left:230px;top:179px;overflow:hidden" width="433.5" height="641" viewBox="0 0 433.5 641"><defs><linearGradient id="fogg" x1="0" y1="0" x2="0" y2="641" gradientUnits="userSpaceOnUse"><stop offset="0.13" stop-color="#000"/><stop offset="0.19" stop-color="#2a2a2a"/><stop offset="0.27" stop-color="#7a7a7a"/><stop offset="0.4" stop-color="#c8c8c8"/><stop offset="0.6" stop-color="#fff"/></linearGradient><mask id="fogm" maskUnits="userSpaceOnUse" x="0" y="0" width="434" height="641"><rect width="434" height="641" fill="url(#fogg)"/></mask><linearGradient id="fogg2" x1="0" y1="0" x2="0" y2="641" gradientUnits="userSpaceOnUse"><stop offset="0.2" stop-color="#000"/><stop offset="0.33" stop-color="#555"/><stop offset="0.5" stop-color="#ddd"/><stop offset="0.62" stop-color="#fff"/></linearGradient><mask id="fogm2" maskUnits="userSpaceOnUse" x="0" y="0" width="434" height="641"><rect width="434" height="641" fill="url(#fogg2)"/></mask></defs><g mask="url(#fogm2)"><path d="M-821 166L-5524 1116M-805 165L-5496 1127M-790 164L-5467 1138M-759 162L-5251 1128M-744 161L-5219 1139M-729 161L-5039 1117M-701 159L-4973 1140M-686 158L-4798 1118M-672 157L-4763 1129M-645 156L-4558 1119M-632 155L-4521 1130M-618 154L-4483 1141M-592 153L-4280 1130M-579 152L-4240 1141M-567 151L-4200 1153M-542 150L-3998 1142M-530 149L-3955 1153M-518 149L-3801 1131M-494 147L-3712 1154M-482 147L-3562 1132M-471 146L-3516 1143M-448 145L-3422 1166M-437 144L-3277 1144M-426 143L-3228 1155M-404 142L-3039 1144M-394 141L-2988 1156M-383 141L-2936 1167M-362 140L-2749 1156M-352 139L-2695 1168M-342 139L-2565 1145M-322 137L-2454 1168M-313 137L-2397 1180M-303 136L-2273 1157M-284 135L-2156 1180M-275 135L-2037 1158M-266 134L-1976 1169M-247 133L-1801 1158M-238 133L-1739 1170M-229 132L-1676 1181M-212 131L-1503 1170M-203 131L-1437 1182M-195 130L-1333 1159M-178 129L-1200 1182M-170 129L-1131 1194M-162 128L-1033 1171M-146 127L-893 1195M-138 127L-799 1172M-130 126L-728 1183M-114 126L-567 1172M-107 125L-494 1184M-99 125L-419 1196M-84 124L-260 1184M-77 123L-184 1196M-69 123L-106 1208M-55 122L51 1197M-48 122L131 1208M-41 121L204 1185M-27 121L366 1209M-20 120L435 1186M-13 120L517 1197M0 119L664 1186M7 119L749 1198M13 118L834 1210M26 118L979 1198M33 117L1067 1210M39 117L1156 1222M52 116L1298 1211M58 116L1390 1223M64 115L1438 1199M76 115L1622 1223M82 114L1665 1200M88 114L1759 1212M100 113L1892 1200M105 113L1987 1212M111 113L2084 1224M122 112L2215 1212M128 112L2314 1224M134 111L2414 1236M144 111L2542 1225M150 110L2645 1237M155 110L2668 1213M166 110L2874 1237M171 109L2893 1214M176 109L2997 1226M187 108L2863 1119M192 108L2805 1072M197 108L2752 1029M207 107L2657 954M212 107L2615 920M217 107L2576 888M226 106L2505 832M231 106L2474 806M236 106L2444 783M245 105L2389 739M250 105L2364 719M254 105L2341 700M264 104L2297 665M268 104L2277 649M272 104L2258 634M281 103L2223 605M286 103L2206 592M290 103L2190 579M299 102L2161 556M303 102L2147 545M307 102L2134 534M-12722 854L1231 49M-13955 936L1234 49M-12004 831L1236 49M-14481 1001L1240 49M-12352 883L1243 49M-13581 970L1245 49M-12744 940L1249 50M-10950 836L1252 50M-11964 913L1254 50M-11236 888L1259 50M-12341 974L1261 50M-10554 864L1263 50M-12769 1043L1268 50M-10824 918L1271 50M-11917 1010L1273 50M-11126 979L1278 50M-9498 869L1280 50M-10390 949L1282 50M-9704 922L1287 51M-10674 1014L1290 51M-9062 897L1292 51M-8460 873L1297 51M-9247 954L1300 51M-10196 1051L1302 51M-9455 1018L1307 51M-8003 902L1310 51M-8766 987L1312 51M-8124 958L1317 51M-8949 1055L1320 52M-7525 931L1322 52M-6963 906L1327 52M-7620 991L1330 52M-8415 1094L1333 52M-7727 1059L1338 52M-6464 936L1341 52M-7089 1026L1343 52M-6495 995L1348 52M-7165 1098L1351 52M-5941 967L1354 52M-5422 940L1359 53M-5940 1030L1362 53M-4936 915L1365 53M-5940 1101L1370 53M-4878 971L1373 53M-5356 1066L1376 53M-4813 1034L1381 53M-5317 1142L1384 53M-4307 1003L1387 53M-3835 975L1392 54M-4205 1070L1395 54M-3392 949L1398 54M-4090 1145L1404 54M-3244 1007L1407 54M-3565 1108L1410 54M-3077 1073L1415 54M-2403 953L1418 54M-2623 1041L1421 54M-2199 1011L1427 54M-2412 1111L1430 55M-1803 983L1433 55M-1431 957L1439 55M-1558 1045L1442 55M-1712 1151L1445 55M-1283 1114L1451 55M-813 987L1454 55M-885 1080L1457 55M-513 1048L1464 55M-559 1154L1467 56M-166 1019L1470 56M159 991L1476 56M181 1083L1479 56M206 1195L1483 56M571 1156L1489 56M824 1022L1492 56M910 1120L1495 56M1226 1087L1502 57M1359 1198L1505 57M1521 1055L1508 57M1796 1026L1515 57M1975 1123L1518 57M2055 998L1522 57M2489 1200L1529 57M2510 1059L1532 57M2764 1162L1535 57" stroke="#4a5c66" stroke-opacity="0.17" stroke-width="0.8" fill="none"/></g><g mask="url(#fogm)"><path d="M-34962 566L-39715 642M-29746 490L-40003 655M-25836 433L-40301 668M-22795 388L-40607 682M-20363 353L-38166 651M-18373 324L-38429 664M-16716 300L-38700 678M-15313 279L-38979 692M-14111 261L-39267 706M-13069 246L-36885 673M-12158 233L-37130 687M-11353 221L-37383 701M-10639 211L-37643 715M-9999 201L-37912 730M-9423 193L-35589 695M-8903 185L-35817 709M-8429 178L-36051 724M-7997 172L-36292 739M-7601 166L-34077 704M-7236 161L-34280 718M-6900 156L-34489 732M-6588 151L-34704 747M-6299 147L-34926 763M-6030 143L-32771 726M-5779 140L-32956 741M-5544 136L-33146 756M-5323 133L-33342 771M-5116 130L-31291 735M-4921 127L-31452 749M-4737 124L-31618 764M-4564 122L-31788 779M-4400 119L-31965 795M-4244 117L-29975 757M-4097 115L-30118 772M-3957 113L-30264 788M-3823 111L-30416 803M-3696 109L-30571 819M-3575 107L-28646 780M-3460 106L-28769 795M-3349 104L-28896 811M-3244 103L-29027 827M-3143 101L-27201 788M-3046 100L-27302 803M-2953 98L-27406 819M-2863 97L-27513 835M-2778 96L-27623 852M-2695 95L-25862 811M-2616 93L-25944 827M-2540 92L-26028 843M-2466 91L-26114 859M-2395 90L-26203 876M-2327 89L-24508 834M-2260 88L-24570 850M-2197 87L-24634 867M-2135 86L-24699 884M-2075 85L-23100 842M-2017 85L-23140 858M-1961 84L-23182 874M-1907 83L-23225 891M-1855 82L-23269 909M-1804 82L-21737 865M-1754 81L-21757 881M-1706 80L-21778 898M-1660 79L-21799 916M-1614 79L-21822 934M-1570 78L-20359 888M-1528 77L-20359 905M-1486 77L-20358 923M-1445 76L-20358 940M-1406 76L-18986 895M-1368 75L-18966 912M-1330 75L-18945 929M-1294 74L-18923 947M-1259 74L-18901 966M-1224 73L-17599 919M-1190 73L-17558 936M-1157 72L-17515 954M-1125 72L-17472 972M-1094 71L-16257 925M-1063 71L-16197 942M-1033 70L-16134 960M-1004 70L-16070 978M-976 69L-16004 997M-948 69L-14861 949M-920 69L-14779 966M-894 68L-14695 985M-868 68L-14609 1003M-842 67L-14519 1023M-817 67L-13449 973M-793 67L-13346 991M-769 66L-13240 1009M-745 66L-13131 1029M-722 66L-12144 979M-700 65L-12023 997M-677 65L-11898 1015M-656 65L-11769 1035M-635 64L-11636 1054M-614 64L-10724 1003M-593 64L-10580 1021M-573 64L-10433 1040M-554 63L-10281 1060M-534 63L-10124 1080M-516 63L-9288 1027M-497 62L-9122 1046M-479 62L-8952 1065M-461 62L-8776 1086M-443 62L-8019 1032M-426 61L-7836 1051M-409 61L-7648 1071M-392 61L-7454 1091M-376 61L-7254 1111M-360 60L-6574 1057M-344 60L-6369 1076M-328 60L-6158 1096M-313 60L-5940 1117M-298 60L-5715 1138M-283 59L-5114 1081M-269 59L-4886 1101M-254 59L-4651 1121M-240 59L-4408 1143M-226 58L-3882 1086M-213 58L-3637 1106M-199 58L-3386 1126M-186 58L-3127 1147M-173 58L-2859 1169M-160 57L-2412 1111M-148 57L-2145 1131M-135 57L-1870 1152M-123 57L-1586 1173M-111 57L-1210 1116M-99 57L-927 1136M-87 56L-636 1156M-76 56L-336 1178M-64 56L-27 1200M-53 56L268 1140M-42 56L574 1161M-31 56L889 1182M-20 55L1214 1204M-10 55L1549 1226M1 55L1761 1165M11 55L2091 1186M21 55L2431 1208M31 55L2782 1230M41 55L2927 1170M51 54L2703 990M61 54L2540 859M70 54L2416 760M80 54L2318 682M89 54L2240 619M98 54L2175 567M107 54L2121 524M116 53L2075 487M125 53L2036 456M134 53L2001 428M142 53L1971 404M151 53L1944 382M159 53L1920 363M167 53L1899 346M176 53L1880 331M184 52L1862 317M192 52L1847 304M199 52L1832 293M207 52L1819 282M215 52L1806 272M223 52L1795 263M230 52L1785 255M237 52L1775 247M245 52L1766 239M252 51L1757 233M259 51L1749 226M266 51L1742 220M273 51L1735 215M280 51L1728 209M287 51L1722 204M294 51L1716 200M301 51L1711 195M307 51L1705 191M314 51L1700 187M320 50L1695 183M327 50L1691 180M333 50L1687 176M339 50L1683 173M346 50L1679 170M352 50L1675 167M358 50L1671 164M364 50L1668 161M370 50L1664 158M376 50L1661 156M382 50L1658 153M387 49L1655 151M393 49L1653 149M399 49L1650 147M404 49L1647 144M410 49L1645 142M415 49L1642 141M421 49L1640 139M426 49L1638 137M432 49L1636 135M437 49L1633 133M442 49L1631 132M447 49L1629 130M452 49L1627 129M457 48L1626 127M462 48L1624 126M467 48L1622 124M472 48L1620 123M477 48L1619 122M482 48L1617 120M487 48L1616 119M492 48L1614 118M496 48L1613 117M501 48L1611 116M506 48L1610 115M510 48L1608 113M515 48L1607 112M519 48L1606 111M524 47L1605 110M528 47L1603 109M532 47L1602 108M537 47L1601 107M541 47L1600 107M545 47L1599 106M550 47L1598 105M554 47L1597 104M558 47L1596 103M562 47L1595 102M566 47L1594 102M570 47L1593 101M574 47L1592 100M578 47L1591 99M582 47L1590 99M586 47L1589 98M590 47L1588 97M594 46L1587 97M598 46L1587 96M601 46L1586 95M605 46L1585 95M609 46L1584 94M612 46L1583 93M616 46L1583 93M620 46L1582 92M623 46L1581 92M627 46L1581 91M630 46L1580 91M634 46L1579 90M637 46L1579 89M641 46L1578 89M644 46L1577 88M648 46L1577 88M651 46L1576 87M654 46L1575 87M658 46L1575 86M661 45L1574 86M664 45L1574 86M668 45L1573 85M671 45L1573 85M674 45L1572 84M677 45L1571 84M680 45L1571 83M683 45L1570 83M687 45L1570 83M690 45L1569 82M693 45L1569 82M696 45L1568 81M699 45L1568 81M702 45L1568 81M705 45L1567 80M708 45L1567 80M711 45L1566 80M713 45L1566 79M716 45L1565 79M719 45L1565 78M722 45L1564 78M725 45L1564 78M728 45L1564 77M730 44L1563 77M733 44L1563 77M736 44L1562 77M739 44L1562 76M741 44L1562 76M744 44L1561 76M747 44L1561 75M749 44L1561 75M752 44L1560 75M755 44L1560 74M757 44L1559 74M760 44L1559 74M762 44L1559 74M765 44L1558 73M767 44L1558 73M770 44L1558 73M772 44L1557 73M775 44L1557 72M777 44L1557 72M780 44L1557 72M782 44L1556 72M784 44L1556 71M787 44L1556 71M789 44L1555 71M792 44L1555 71M794 44L1555 70M796 44L1554 70M799 43L1554 70M801 43L1554 70M803 43L1554 69M805 43L1553 69M808 43L1553 69M810 43L1553 69M812 43L1553 69M814 43L1552 68M817 43L1552 68M819 43L1552 68M821 43L1552 68M823 43L1551 68M825 43L1551 67M827 43L1551 67M829 43L1551 67M832 43L1550 67M834 43L1550 67M836 43L1550 66M838 43L1550 66M840 43L1549 66M842 43L1549 66M844 43L1549 66M846 43L1549 66M848 43L1549 65M850 43L1548 65M852 43L1548 65M854 43L1548 65M856 43L1548 65M858 43L1547 65M860 43L1547 64M862 43L1547 64M863 43L1547 64M865 42L1547 64M867 42L1546 64M869 42L1546 64M871 42L1546 63M873 42L1546 63M875 42L1546 63M877 42L1546 63M878 42L1545 63M880 42L1545 63M882 42L1545 63M884 42L1545 62M886 42L1545 62M887 42L1544 62M889 42L1544 62M891 42L1544 62M893 42L1544 62M894 42L1544 62M896 42L1544 61M898 42L1543 61M899 42L1543 61M901 42L1543 61M903 42L1543 61M904 42L1543 61M906 42L1543 61M908 42L1542 61M909 42L1542 60M911 42L1542 60M913 42L1542 60M914 42L1542 60M916 42L1542 60M917 42L1542 60M919 42L1541 60M921 42L1541 60M922 42L1541 59M924 42L1541 59M925 42L1541 59M927 42L1541 59M928 42L1541 59M930 42L1540 59M932 42L1540 59M933 42L1540 59M935 41L1540 59M936 41L1540 58M938 41L1540 58M939 41L1540 58M941 41L1539 58M942 41L1539 58M943 41L1539 58M945 41L1539 58M946 41L1539 58M948 41L1539 58M949 41L1539 58M-34962 566L949 41M-40448 664L955 41M-36900 627L960 42M-33818 596L966 42M-39204 700L972 42M-35688 660L977 42M-32639 626L983 42M-29972 596L989 42M-34435 694L995 43M-31425 657L1001 43M-28795 624L1007 43M-33140 729L1013 43M-30172 689L1020 43M-27584 654L1026 43M-31801 766L1032 44M-28879 722L1039 44M-26337 684L1045 44M-30416 803L1052 44M-27544 756L1059 44M-25052 716L1065 44M-28981 842L1072 45M-26165 792L1079 45M-23728 748L1086 45M-21598 710L1093 45M-24741 828L1100 45M-22363 781L1108 46M-20289 740L1115 46M-23268 866L1123 46M-20954 816L1130 46M-18941 772L1138 46M-21744 905L1146 47M-19501 851L1153 47M-17553 805L1161 47M-20166 945L1169 47M-17999 888L1178 48M-16122 838L1186 48M-14480 794L1194 48M-16448 926L1203 48M-14647 873L1211 49M-13075 826L1220 49M-14845 965L1229 49M-13126 908L1238 49M-11629 859L1247 50M-13186 1005L1256 50M-11556 945L1266 50M-10139 892L1275 50M-11469 1047L1285 51M-9935 983L1295 51M-8604 927L1305 51M-7440 878L1315 51M-8260 1022L1325 52M-7022 963L1335 52M-5941 911L1346 52M-6530 1063L1357 53M-5391 999L1367 53M-4398 944L1378 53M-4740 1104L1390 53M-3708 1037L1401 54M-2810 979L1412 54M-2888 1148L1424 54M-1970 1077L1436 55M-1173 1015L1448 55M-971 1193L1461 55M-176 1117L1473 56M513 1052L1486 56M1115 995L1499 56M1679 1159L1512 57M2252 1090L1525 57M2752 1029L1539 58" stroke="#4a5c66" stroke-opacity="0.4" stroke-width="1.1" fill="none"/></g><line x1="271.6" y1="284.6" x2="309.5" y2="276.1" stroke="#5f5a57" stroke-width="1.4"/><line x1="309.5" y1="276.1" x2="338.5" y2="296.2" stroke="#5f5a57" stroke-width="1.4"/><line x1="338.5" y1="296.2" x2="297.4" y2="306.3" stroke="#5f5a57" stroke-width="1.4"/><line x1="297.4" y1="306.3" x2="271.6" y2="284.6" stroke="#5f5a57" stroke-width="1.4"/><line x1="281.3" y1="116.69999999999999" x2="271.6" y2="284.6" stroke="#5f5a57" stroke-width="1.4"/><line x1="326.4" y1="112.60000000000002" x2="309.5" y2="276.1" stroke="#5f5a57" stroke-width="1.4"/><line x1="361.4" y1="121.5" x2="338.5" y2="296.2" stroke="#5f5a57" stroke-width="1.4"/><line x1="313.6" y1="125.60000000000002" x2="297.4" y2="306.3" stroke="#5f5a57" stroke-width="1.4"/><line x1="281.3" y1="116.69999999999999" x2="326.4" y2="112.60000000000002" stroke="#5f5a57" stroke-width="1.4"/><line x1="326.4" y1="112.60000000000002" x2="361.4" y2="121.5" stroke="#5f5a57" stroke-width="1.4"/><line x1="281.3" y1="116.69999999999999" x2="313.6" y2="125.60000000000002" stroke="#262626" stroke-width="1.5"/><line x1="313.6" y1="125.60000000000002" x2="361.4" y2="121.5" stroke="#4a4644" stroke-width="1.4"/><polygon points="51.5,226.0 55.0,226.5 173.0,425.3 170.5,441.0 162.0,436.7" fill="#00008c"/><polygon points="51.5,226.0 53.0,226.2 165.0,433.0 162.0,436.7" fill="#000070"/><polygon points="138.0,365.7 146.9,360.3 156.7,356.8 168.6,351.9 170.6,346.0 181.4,347.9 196.3,347.9 210.1,346.4 235.8,348.9 247.6,358.8 241.7,363.7 245.7,370.6 251.6,374.6 263.5,387.4 264.4,392.4 256.5,400.3 245.7,404.2 233.8,399.3 222.0,405.2 206.1,407.2 196.3,413.1 184.4,420.0 174.5,422.0 167.6,410.2 156.7,386.5 142.9,367.7" fill="#a3a1a2" stroke="#b8b4b6" stroke-width="1"/><path d="M176.3 356.7h2.1v1.4h-2.1zM175.8 355.6h1.2v1.4h-1.2zM176.3 352.6h1.1v1.2h-1.1zM190.1 358.3h1.8v1.0h-1.8zM195.3 355.1h1.8v1.5h-1.8zM182.9 356.2h1.6v1.0h-1.6zM183.8 357.5h1.0v1.4h-1.0zM173.5 357.6h1.6v1.5h-1.6zM175.0 355.8h1.5v1.2h-1.5zM198.9 355.7h2.0v1.5h-2.0zM181.0 357.5h1.3v1.1h-1.3zM182.9 353.3h2.0v1.3h-2.0zM191.8 354.5h1.0v1.2h-1.0zM187.2 354.3h2.2v1.3h-2.2zM188.7 357.4h1.9v1.2h-1.9zM186.2 357.0h2.2v1.6h-2.2zM185.2 357.1h1.1v1.0h-1.1zM183.3 354.3h1.7v1.3h-1.7zM185.4 359.6h1.2v1.5h-1.2zM186.3 357.5h1.3v1.2h-1.3zM191.3 355.0h1.4v1.7h-1.4zM183.6 358.2h2.0v1.5h-2.0zM194.6 360.2h1.3v1.2h-1.3zM183.0 353.6h1.4v1.1h-1.4zM188.0 357.6h1.3v1.5h-1.3zM178.6 357.8h2.2v1.4h-2.2zM173.4 353.5h1.2v1.1h-1.2zM190.1 353.3h1.3v1.1h-1.3zM181.6 349.9h1.2v1.7h-1.2zM187.4 353.5h1.5v1.1h-1.5zM194.8 357.3h1.3v1.5h-1.3zM182.0 360.5h1.7v1.2h-1.7zM186.0 359.4h1.1v1.2h-1.1zM173.3 354.0h1.7v1.2h-1.7zM185.3 355.0h1.0v1.2h-1.0zM180.7 356.1h1.2v1.3h-1.2zM180.0 355.2h1.4v1.7h-1.4zM189.7 355.4h1.8v1.4h-1.8zM183.2 356.3h1.0v1.7h-1.0zM178.5 349.7h1.0v1.5h-1.0zM174.4 356.3h1.4v1.8h-1.4zM188.0 357.2h1.9v1.7h-1.9zM181.8 351.9h2.0v1.7h-2.0zM177.9 358.8h2.1v1.7h-2.1zM174.7 358.0h2.0v1.4h-2.0zM178.9 354.1h1.7v1.5h-1.7zM188.7 357.5h2.2v1.7h-2.2zM181.7 353.3h1.9v1.4h-1.9zM173.5 357.5h1.1v1.6h-1.1zM189.1 356.4h1.6v1.2h-1.6zM180.5 353.0h1.7v1.7h-1.7zM182.4 356.2h1.4v1.5h-1.4zM183.3 357.3h2.1v1.5h-2.1zM172.6 357.7h1.4v1.5h-1.4zM184.1 358.3h2.0v1.7h-2.0zM186.0 354.1h1.7v1.2h-1.7zM186.2 358.0h2.0v1.6h-2.0zM179.4 349.9h1.3v1.1h-1.3zM178.6 356.4h1.3v1.3h-1.3zM178.3 353.7h1.4v1.6h-1.4zM179.8 365.3h1.1v1.0h-1.1zM177.1 365.1h1.9v1.4h-1.9zM174.6 370.7h1.0v1.1h-1.0zM175.9 365.9h2.0v1.2h-2.0zM177.1 366.4h1.8v1.3h-1.8zM173.5 362.5h2.0v1.7h-2.0zM175.7 363.9h1.6v1.1h-1.6zM179.9 365.9h1.9v1.1h-1.9zM176.1 368.4h1.8v1.4h-1.8zM172.7 362.4h1.5v1.6h-1.5zM177.6 365.0h2.1v1.5h-2.1zM178.8 368.1h1.8v1.7h-1.8zM173.7 368.4h2.1v1.6h-2.1zM179.6 364.6h1.8v1.2h-1.8zM175.5 360.2h1.8v1.5h-1.8zM178.0 372.0h2.2v1.7h-2.2zM171.3 364.5h1.4v1.7h-1.4zM178.2 363.5h1.1v1.3h-1.1zM171.6 364.1h1.6v1.0h-1.6zM176.9 364.7h2.0v1.1h-2.0zM173.8 370.2h1.2v1.1h-1.2zM171.7 365.2h2.0v1.5h-2.0zM179.8 364.5h2.1v1.1h-2.1zM177.2 369.3h1.3v1.6h-1.3zM174.2 362.9h2.0v1.4h-2.0zM175.4 368.4h2.0v1.7h-2.0zM178.0 371.4h2.2v1.4h-2.2zM174.7 364.8h1.6v1.4h-1.6zM175.9 365.3h2.2v1.4h-2.2zM172.1 368.9h1.7v1.4h-1.7zM176.1 364.7h1.6v1.3h-1.6zM183.1 363.9h1.3v1.4h-1.3zM178.7 368.0h2.0v1.7h-2.0zM173.9 366.1h1.2v1.5h-1.2zM177.9 365.0h1.9v1.0h-1.9zM177.2 367.7h1.8v1.2h-1.8zM173.9 369.0h1.1v1.6h-1.1zM179.1 368.2h1.3v1.2h-1.3zM173.3 365.1h1.5v1.3h-1.5zM174.8 365.4h1.2v1.5h-1.2zM170.1 370.8h2.0v1.5h-2.0zM173.9 371.9h1.9v1.6h-1.9zM174.6 372.1h1.4v1.7h-1.4zM174.6 384.1h2.1v1.1h-2.1zM172.8 378.4h1.3v1.1h-1.3zM174.0 370.9h1.9v1.1h-1.9zM168.8 376.2h1.0v1.2h-1.0zM169.8 367.6h2.2v1.1h-2.2zM167.4 373.4h1.6v1.5h-1.6zM172.9 374.7h1.1v1.0h-1.1zM169.1 372.4h1.7v1.1h-1.7zM173.3 375.5h2.0v1.8h-2.0zM173.7 373.0h1.1v1.7h-1.1zM167.5 374.8h1.4v1.4h-1.4zM169.3 373.3h1.7v1.0h-1.7zM170.7 368.1h1.2v1.3h-1.2zM172.3 370.5h1.2v1.1h-1.2zM172.0 373.6h2.1v1.6h-2.1zM170.8 367.9h1.8v1.3h-1.8zM169.6 371.5h2.2v1.6h-2.2zM172.2 380.2h1.9v1.6h-1.9zM173.7 370.8h2.1v1.7h-2.1zM170.8 368.8h1.9v1.3h-1.9zM172.3 372.5h1.4v1.4h-1.4zM175.3 373.8h1.8v1.5h-1.8zM173.3 380.8h1.8v1.3h-1.8zM170.4 370.3h1.6v1.3h-1.6zM176.8 373.6h1.8v1.6h-1.8zM173.1 373.5h1.7v1.6h-1.7zM172.4 376.6h1.1v1.1h-1.1zM171.5 374.6h1.3v1.7h-1.3zM169.1 372.5h2.2v1.4h-2.2zM176.8 373.5h2.0v1.1h-2.0zM168.4 370.7h1.1v1.7h-1.1zM174.3 376.5h1.2v1.4h-1.2zM166.9 379.8h2.1v1.3h-2.1zM164.3 379.8h1.4v1.2h-1.4zM165.8 377.3h1.3v1.5h-1.3zM167.5 381.0h1.3v1.0h-1.3zM169.9 384.7h1.5v1.7h-1.5zM167.6 379.5h2.2v1.7h-2.2zM172.5 383.4h1.5v1.4h-1.5zM169.4 380.1h1.6v1.7h-1.6zM167.1 377.2h2.2v1.6h-2.2zM166.6 379.6h1.7v1.3h-1.7zM167.8 381.4h1.6v1.1h-1.6zM164.1 382.1h1.5v1.2h-1.5zM165.3 379.0h1.9v1.4h-1.9zM173.8 380.4h1.9v1.2h-1.9zM171.6 384.7h1.9v1.5h-1.9zM166.3 382.3h1.8v1.4h-1.8zM164.6 378.2h1.9v1.1h-1.9zM167.6 388.9h2.1v1.7h-2.1zM168.5 380.8h1.3v1.3h-1.3zM166.8 379.5h1.6v1.1h-1.6zM170.8 382.8h1.7v1.5h-1.7zM165.6 382.9h1.3v1.3h-1.3zM167.4 374.8h1.1v1.1h-1.1zM168.9 376.6h1.9v1.2h-1.9zM165.9 381.6h2.0v1.3h-2.0zM159.5 363.8h1.4v1.4h-1.4zM164.4 364.2h1.5v1.3h-1.5zM169.6 371.0h1.1v1.1h-1.1zM161.4 367.8h1.8v1.2h-1.8zM164.8 367.9h1.3v1.5h-1.3zM166.8 369.5h1.9v1.5h-1.9zM164.3 369.8h1.4v1.6h-1.4zM163.6 369.4h1.9v1.4h-1.9zM170.8 366.4h2.1v1.3h-2.1zM165.4 367.1h1.4v1.3h-1.4zM170.4 367.0h1.3v1.3h-1.3zM162.7 370.1h1.5v1.3h-1.5zM165.9 371.1h2.0v1.4h-2.0zM166.6 366.5h1.2v1.6h-1.2zM166.4 367.6h1.0v1.4h-1.0zM160.9 368.0h2.2v1.5h-2.2zM165.0 368.0h1.7v1.6h-1.7zM165.7 369.1h1.9v1.7h-1.9zM168.3 370.1h1.2v1.6h-1.2zM163.3 367.5h1.3v1.6h-1.3zM159.5 368.2h1.5v1.3h-1.5zM169.0 368.1h1.6v1.4h-1.6zM163.7 365.6h2.1v1.3h-2.1zM166.6 366.1h2.0v1.6h-2.0zM167.8 365.1h2.1v1.5h-2.1zM152.0 362.2h2.0v1.3h-2.0zM155.2 363.2h1.9v1.8h-1.9zM155.4 363.6h1.2v1.3h-1.2zM154.6 367.8h1.1v1.2h-1.1zM160.0 364.6h1.9v1.1h-1.9zM159.8 363.5h1.7v1.7h-1.7zM158.1 362.9h1.2v1.2h-1.2zM157.1 365.9h1.7v1.2h-1.7zM157.7 364.2h1.2v1.6h-1.2zM155.3 365.0h2.0v1.4h-2.0zM156.3 366.9h2.1v1.3h-2.1zM149.5 361.2h1.6v1.2h-1.6zM163.6 364.2h2.0v1.3h-2.0zM153.1 362.3h1.3v1.8h-1.3zM155.5 361.5h1.0v1.4h-1.0zM153.0 365.3h1.9v1.5h-1.9zM157.7 363.7h1.4v1.2h-1.4zM159.2 360.9h1.8v1.8h-1.8zM156.3 365.2h1.2v1.6h-1.2zM162.3 362.7h2.0v1.6h-2.0zM158.8 363.5h1.9v1.1h-1.9zM153.4 363.0h2.1v1.4h-2.1zM158.3 361.4h1.9v1.3h-1.9zM157.8 362.3h2.0v1.2h-2.0zM153.2 362.0h1.2v1.6h-1.2zM207.7 356.8h1.1v1.2h-1.1zM202.8 355.6h1.4v1.5h-1.4zM212.2 356.3h1.6v1.7h-1.6zM211.8 351.6h1.0v1.3h-1.0zM208.3 353.0h1.7v1.3h-1.7zM221.3 355.3h2.0v1.2h-2.0zM206.5 353.4h1.5v1.4h-1.5zM207.9 357.0h1.5v1.5h-1.5zM208.9 356.5h1.9v1.3h-1.9zM213.8 353.7h1.9v1.3h-1.9zM209.8 353.8h1.2v1.1h-1.2zM206.2 351.3h1.2v1.3h-1.2zM211.8 351.9h1.1v1.2h-1.1zM210.1 355.9h1.5v1.1h-1.5zM212.7 353.5h1.6v1.5h-1.6zM209.8 350.2h1.5v1.3h-1.5zM208.4 355.0h1.5v1.5h-1.5zM216.0 354.3h1.8v1.5h-1.8zM212.6 355.1h1.4v1.5h-1.4zM212.1 356.3h1.6v1.6h-1.6zM211.5 351.7h1.2v1.6h-1.2zM213.1 353.0h1.4v1.4h-1.4zM213.0 357.9h2.2v1.4h-2.2zM207.4 350.2h1.2v1.7h-1.2zM207.1 353.6h1.1v1.2h-1.1zM203.5 353.0h1.4v1.7h-1.4zM206.1 356.9h1.1v1.7h-1.1zM214.7 358.9h1.7v1.4h-1.7zM206.1 354.1h2.1v1.8h-2.1zM211.2 351.7h1.1v1.6h-1.1zM207.0 360.0h1.3v1.4h-1.3zM210.2 353.4h1.7v1.1h-1.7zM211.5 355.1h2.2v1.7h-2.2zM207.1 353.0h1.8v1.6h-1.8zM205.1 357.1h2.0v1.0h-2.0zM210.4 357.5h1.2v1.3h-1.2zM206.8 354.1h1.6v1.2h-1.6zM205.7 353.9h1.8v1.0h-1.8zM207.9 353.6h2.2v1.5h-2.2zM205.0 355.3h1.7v1.5h-1.7zM221.3 352.6h1.6v1.8h-1.6zM225.1 352.6h1.5v1.3h-1.5zM213.1 354.6h1.6v1.4h-1.6zM213.1 359.0h1.4v1.0h-1.4zM219.7 351.5h1.9v1.5h-1.9zM221.0 354.7h1.7v1.1h-1.7zM224.1 358.7h1.6v1.3h-1.6zM226.8 358.0h1.6v1.2h-1.6zM219.6 359.2h1.3v1.1h-1.3zM229.8 353.4h1.8v1.7h-1.8zM214.6 358.9h1.3v1.6h-1.3zM213.1 354.6h1.1v1.6h-1.1zM224.5 359.0h2.1v1.0h-2.1zM221.1 358.9h1.4v1.0h-1.4zM226.8 354.0h1.5v1.3h-1.5zM219.9 356.4h1.0v1.7h-1.0zM219.3 359.5h2.1v1.7h-2.1zM218.3 357.1h1.4v1.7h-1.4zM223.1 355.8h2.0v1.3h-2.0zM218.6 357.1h2.1v1.8h-2.1zM222.7 360.2h1.2v1.7h-1.2zM222.8 357.2h1.9v1.2h-1.9zM227.5 353.8h1.9v1.1h-1.9zM217.9 351.2h1.5v1.1h-1.5zM221.6 358.9h1.9v1.1h-1.9zM222.2 358.5h1.8v1.6h-1.8zM216.9 359.4h2.1v1.4h-2.1zM221.4 358.9h2.1v1.5h-2.1zM220.0 360.3h1.1v1.7h-1.1zM216.4 357.9h1.6v1.0h-1.6zM218.3 355.6h1.3v1.6h-1.3zM223.8 357.9h1.9v1.2h-1.9zM220.1 359.9h1.2v1.7h-1.2zM222.0 356.7h1.6v1.6h-1.6zM214.1 360.6h1.6v1.1h-1.6zM215.6 355.6h1.4v1.5h-1.4zM222.0 353.8h1.6v1.6h-1.6zM219.1 354.0h2.1v1.1h-2.1zM221.4 355.3h1.7v1.2h-1.7zM214.6 358.4h1.9v1.6h-1.9zM206.4 366.6h1.3v1.4h-1.3zM204.9 363.7h1.7v1.5h-1.7zM198.7 361.5h1.2v1.1h-1.2zM210.7 364.0h1.5v1.3h-1.5zM205.4 368.2h1.1v1.7h-1.1zM201.5 362.4h1.9v1.2h-1.9zM208.1 365.4h1.1v1.2h-1.1zM202.5 361.6h1.3v1.4h-1.3zM212.3 366.1h1.2v1.2h-1.2zM209.3 366.9h2.0v1.6h-2.0zM209.8 364.7h1.4v1.2h-1.4zM207.2 363.6h1.6v1.6h-1.6zM208.2 363.6h1.5v1.6h-1.5zM208.9 364.2h2.1v1.1h-2.1zM203.4 365.0h1.5v1.1h-1.5zM219.0 365.5h1.9v1.6h-1.9zM206.4 365.6h1.7v1.2h-1.7zM197.0 365.1h1.4v1.3h-1.4zM211.5 363.3h1.0v1.3h-1.0zM205.2 363.0h1.4v1.5h-1.4zM209.5 361.2h2.1v1.4h-2.1zM200.0 366.7h1.5v1.6h-1.5zM206.8 366.0h1.2v1.4h-1.2zM207.4 365.1h1.3v1.4h-1.3zM204.4 366.2h2.2v1.5h-2.2zM207.8 362.4h1.5v1.1h-1.5zM204.6 361.5h1.3v1.0h-1.3zM207.3 365.5h1.5v1.7h-1.5zM205.3 361.8h1.4v1.1h-1.4zM209.5 362.8h1.9v1.5h-1.9zM206.7 363.4h1.4v1.3h-1.4zM213.2 366.3h1.4v1.6h-1.4zM204.7 363.6h1.5v1.2h-1.5zM208.2 364.1h1.7v1.0h-1.7zM204.4 366.1h1.7v1.1h-1.7zM212.2 367.2h1.9v1.5h-1.9zM214.6 369.8h1.3v1.5h-1.3zM209.7 369.8h2.0v1.2h-2.0zM212.0 370.5h1.3v1.0h-1.3zM218.6 369.1h1.7v1.6h-1.7zM216.3 368.4h1.8v1.7h-1.8zM214.3 371.7h1.8v1.7h-1.8zM215.0 367.6h1.8v1.1h-1.8zM209.4 369.6h1.1v1.3h-1.1zM210.8 370.8h1.3v1.1h-1.3zM209.3 370.0h1.2v1.5h-1.2zM213.1 369.6h1.4v1.3h-1.4zM216.1 370.8h1.8v1.4h-1.8zM212.7 368.3h1.5v1.3h-1.5zM216.8 369.5h1.1v1.4h-1.1zM209.1 367.5h1.4v1.2h-1.4zM216.7 369.0h2.1v1.4h-2.1zM212.6 371.7h1.2v1.4h-1.2zM205.5 365.4h1.4v1.4h-1.4zM219.4 367.5h1.8v1.5h-1.8zM209.5 369.8h1.3v1.6h-1.3zM215.9 367.4h2.1v1.0h-2.1zM216.1 370.5h1.4v1.3h-1.4zM215.3 368.5h1.2v1.2h-1.2zM211.8 367.4h1.0v1.4h-1.0zM210.7 369.6h1.6v1.5h-1.6zM207.7 367.9h1.7v1.6h-1.7zM216.5 368.3h1.4v1.7h-1.4zM210.5 371.6h1.8v1.5h-1.8zM220.3 367.9h1.2v1.5h-1.2zM231.9 362.9h1.4v1.2h-1.4zM235.8 359.0h1.3v1.2h-1.3zM234.9 364.4h1.6v1.1h-1.6zM236.8 363.1h1.1v1.5h-1.1zM238.3 364.8h1.9v1.4h-1.9zM238.9 367.8h2.0v1.0h-2.0zM235.7 366.3h2.0v1.3h-2.0zM235.3 360.5h1.9v1.2h-1.9zM233.3 367.1h2.0v1.6h-2.0zM232.9 361.4h1.8v1.5h-1.8zM238.4 358.0h1.2v1.3h-1.2zM234.7 360.8h1.2v1.0h-1.2zM229.7 359.0h2.2v1.1h-2.2zM234.6 359.8h1.8v1.3h-1.8zM244.0 359.0h1.1v1.5h-1.1zM236.4 363.3h1.3v1.6h-1.3zM237.3 362.6h1.4v1.0h-1.4zM232.5 361.8h1.4v1.2h-1.4zM237.6 357.3h1.3v1.3h-1.3zM232.0 359.3h2.2v1.3h-2.2zM234.5 359.2h2.0v1.1h-2.0zM236.4 364.0h2.1v1.2h-2.1zM234.3 362.8h1.4v1.0h-1.4zM234.3 362.0h1.8v1.2h-1.8zM236.3 366.1h1.4v1.2h-1.4zM236.8 363.0h2.1v1.2h-2.1zM237.5 363.6h1.6v1.8h-1.6zM237.6 368.5h1.6v1.3h-1.6zM236.9 359.9h1.1v1.4h-1.1zM233.5 359.2h1.3v1.7h-1.3zM242.2 355.5h1.5v1.6h-1.5zM235.5 360.9h1.0v1.1h-1.0zM236.7 363.5h1.4v1.6h-1.4zM234.5 366.1h1.0v1.2h-1.0zM236.2 362.6h1.6v1.6h-1.6zM233.1 369.7h1.5v1.6h-1.5zM234.2 369.8h2.2v1.1h-2.2zM234.7 372.8h1.8v1.2h-1.8zM232.4 373.3h1.7v1.2h-1.7zM229.6 375.1h1.8v1.6h-1.8zM229.0 376.3h1.4v1.2h-1.4zM234.0 372.4h1.1v1.3h-1.1zM231.7 371.9h1.9v1.4h-1.9zM231.0 372.2h1.1v1.1h-1.1zM229.9 375.7h1.0v1.4h-1.0zM229.6 374.9h1.6v1.7h-1.6zM233.5 378.5h1.4v1.6h-1.4zM238.7 378.3h1.5v1.7h-1.5zM232.4 376.1h1.8v1.1h-1.8zM231.1 377.3h2.1v1.2h-2.1zM232.9 375.7h2.2v1.1h-2.2zM229.9 371.8h1.8v1.2h-1.8zM227.1 370.1h2.0v1.5h-2.0zM227.9 373.5h1.1v1.6h-1.1zM230.6 371.0h1.8v1.3h-1.8zM230.2 374.8h1.7v1.4h-1.7zM231.0 373.5h1.8v1.3h-1.8zM228.4 371.7h2.1v1.1h-2.1zM222.5 375.1h1.9v1.2h-1.9zM231.0 366.1h1.5v1.7h-1.5zM238.2 379.0h1.6v1.2h-1.6zM234.1 370.5h2.1v1.6h-2.1zM232.9 370.7h2.2v1.0h-2.2zM235.0 370.7h1.3v1.6h-1.3zM228.2 374.5h2.0v1.1h-2.0zM238.9 377.1h1.1v1.4h-1.1zM240.5 370.8h1.3v1.6h-1.3zM242.9 370.2h1.7v1.7h-1.7zM240.2 372.2h1.4v1.1h-1.4zM242.4 374.1h2.0v1.6h-2.0zM241.1 374.7h1.5v1.6h-1.5zM234.9 370.0h1.1v1.8h-1.1zM240.8 377.0h2.1v1.6h-2.1zM241.2 377.1h1.5v1.0h-1.5zM238.3 375.4h1.8v1.2h-1.8zM236.0 371.3h1.2v1.1h-1.2zM238.5 371.0h1.2v1.1h-1.2zM243.5 372.4h1.4v1.1h-1.4zM244.3 373.5h1.9v1.3h-1.9zM238.6 376.0h1.2v1.5h-1.2zM234.8 375.7h1.5v1.3h-1.5zM232.6 373.4h1.4v1.5h-1.4zM240.1 376.9h1.3v1.7h-1.3zM238.4 378.4h1.8v1.3h-1.8zM242.4 372.6h1.9v1.5h-1.9zM238.7 373.9h1.5v1.2h-1.5zM232.8 375.9h1.4v1.5h-1.4zM238.6 371.9h1.5v1.1h-1.5zM241.5 372.4h1.5v1.3h-1.5zM242.2 369.2h1.7v1.4h-1.7zM244.9 376.7h1.1v1.3h-1.1zM236.3 376.4h1.8v1.3h-1.8zM243.9 374.1h1.6v1.3h-1.6zM237.1 374.1h1.8v1.5h-1.8zM194.7 378.2h2.2v1.3h-2.2zM190.7 376.3h1.8v1.8h-1.8zM191.3 380.6h1.5v1.5h-1.5zM190.5 386.9h1.3v1.3h-1.3zM190.5 381.5h1.9v1.1h-1.9zM190.7 382.6h1.7v1.6h-1.7zM189.2 384.1h1.9v1.6h-1.9zM190.9 381.4h1.0v1.7h-1.0zM193.3 377.7h1.0v1.3h-1.0zM186.9 378.8h1.1v1.6h-1.1zM188.5 382.3h1.1v1.4h-1.1zM189.9 380.3h1.6v1.2h-1.6zM189.6 377.6h1.5v1.0h-1.5zM189.7 382.2h1.7v1.3h-1.7zM189.9 378.6h2.0v1.1h-2.0zM191.7 378.9h1.5v1.5h-1.5zM192.7 374.6h1.5v1.0h-1.5zM191.4 383.3h1.9v1.5h-1.9zM190.7 382.1h1.0v1.1h-1.0zM187.7 385.7h1.8v1.6h-1.8zM204.2 383.9h1.1v1.2h-1.1zM205.6 385.7h1.4v1.4h-1.4zM199.8 380.9h2.1v1.4h-2.1zM197.9 383.5h1.5v1.2h-1.5zM202.1 382.3h1.4v1.3h-1.4zM200.3 383.7h1.5v1.3h-1.5zM205.8 384.4h1.1v1.4h-1.1zM200.3 383.1h1.3v1.1h-1.3zM201.0 384.4h1.6v1.2h-1.6zM202.2 381.8h1.0v1.3h-1.0zM202.4 383.5h1.7v1.7h-1.7zM200.4 385.0h1.4v1.2h-1.4zM200.1 382.2h1.4v1.4h-1.4zM198.9 383.2h1.1v1.1h-1.1zM202.2 384.7h2.0v1.3h-2.0zM252.2 380.3h1.3v1.5h-1.3zM256.8 383.7h2.0v1.2h-2.0zM248.7 384.0h1.9v1.5h-1.9zM254.6 382.4h1.1v1.5h-1.1zM245.2 380.4h1.8v1.0h-1.8zM254.4 380.5h1.7v1.0h-1.7zM250.4 379.9h1.8v1.7h-1.8zM251.5 381.2h1.9v1.3h-1.9zM250.6 380.0h1.5v1.3h-1.5zM252.2 382.4h1.9v1.1h-1.9zM254.1 383.4h1.8v1.4h-1.8zM251.6 382.0h1.4v1.7h-1.4zM245.3 380.2h1.3v1.3h-1.3zM245.9 380.9h1.1v1.7h-1.1zM250.0 381.6h1.5v1.3h-1.5zM230.6 382.3h1.6v1.5h-1.6zM229.8 391.8h1.1v1.6h-1.1zM235.8 391.8h1.2v1.3h-1.2zM235.2 390.8h1.7v1.4h-1.7zM230.8 390.9h2.0v1.3h-2.0zM230.8 386.7h2.2v1.2h-2.2zM233.1 386.3h1.3v1.6h-1.3zM231.7 387.4h1.1v1.6h-1.1zM230.4 391.7h1.5v1.5h-1.5zM226.2 385.4h2.1v1.3h-2.1zM231.6 388.6h1.9v1.1h-1.9zM231.8 393.9h1.0v1.5h-1.0zM230.3 386.8h1.4v1.1h-1.4zM238.7 386.8h2.0v1.1h-2.0zM234.2 386.3h1.2v1.4h-1.2zM232.6 387.4h1.9v1.4h-1.9zM239.3 384.4h1.8v1.3h-1.8zM238.4 387.0h1.3v1.7h-1.3zM233.5 386.1h1.3v1.0h-1.3zM231.6 387.9h1.4v1.2h-1.4zM236.1 390.9h1.3v1.2h-1.3zM233.2 391.9h2.0v1.1h-2.0zM237.5 383.9h1.7v1.4h-1.7zM233.4 384.7h1.8v1.7h-1.8zM234.2 386.1h1.1v1.7h-1.1zM230.4 392.4h1.3v1.3h-1.3zM230.5 391.9h2.1v1.4h-2.1zM231.3 387.3h1.3v1.7h-1.3zM239.3 393.0h1.8v1.1h-1.8zM234.9 387.6h1.7v1.1h-1.7zM236.4 388.2h2.0v1.0h-2.0zM233.2 387.4h1.0v1.4h-1.0zM238.3 387.9h2.0v1.6h-2.0zM232.6 388.2h1.6v1.1h-1.6zM231.0 387.9h1.6v1.2h-1.6zM227.7 394.3h1.6v1.1h-1.6zM223.8 396.5h2.2v1.4h-2.2zM231.1 397.6h1.4v1.5h-1.4zM239.0 394.3h2.1v1.7h-2.1zM234.8 392.7h1.0v1.4h-1.0zM223.8 394.7h1.7v1.5h-1.7zM230.5 396.0h1.6v1.7h-1.6zM230.8 396.5h2.0v1.7h-2.0zM229.9 396.4h2.0v1.5h-2.0zM223.7 396.0h1.9v1.6h-1.9zM230.4 396.3h2.0v1.7h-2.0zM230.9 394.5h1.4v1.3h-1.4zM235.7 396.6h1.3v1.4h-1.3zM225.3 396.0h1.8v1.3h-1.8zM229.7 400.4h1.2v1.1h-1.2zM228.8 398.6h1.9v1.3h-1.9zM229.3 399.2h1.3v1.4h-1.3zM228.6 400.4h1.2v1.2h-1.2zM227.8 398.0h1.9v1.5h-1.9zM230.1 393.9h1.1v1.6h-1.1zM229.0 397.7h1.5v1.8h-1.5zM226.3 397.7h2.1v1.8h-2.1zM227.3 397.0h1.9v1.6h-1.9zM225.2 399.3h1.5v1.2h-1.5zM223.4 394.5h1.6v1.6h-1.6zM233.6 396.5h1.5v1.0h-1.5zM230.8 395.7h1.2v1.7h-1.2zM237.9 395.2h1.4v1.7h-1.4zM232.9 398.8h2.1v1.1h-2.1zM232.9 398.6h2.1v1.6h-2.1zM218.2 399.6h1.4v1.1h-1.4zM212.6 405.0h1.1v1.1h-1.1zM213.3 400.8h1.4v1.1h-1.4zM217.5 402.0h1.6v1.4h-1.6zM214.4 397.9h2.1v1.1h-2.1zM214.3 401.1h1.4v1.6h-1.4zM218.2 399.2h1.2v1.3h-1.2zM211.0 399.6h2.0v1.7h-2.0zM208.7 401.0h2.0v1.4h-2.0zM217.5 404.8h2.2v1.0h-2.2zM214.3 398.3h1.1v1.1h-1.1zM217.0 403.2h1.3v1.0h-1.3zM215.4 403.8h1.6v1.5h-1.6zM211.5 400.6h1.0v1.2h-1.0zM217.0 400.7h1.7v1.3h-1.7zM208.5 400.8h1.4v1.3h-1.4zM217.9 398.5h1.5v1.4h-1.5zM210.5 400.7h2.1v1.2h-2.1zM221.2 398.8h2.1v1.1h-2.1zM202.5 400.0h1.3v1.1h-1.3zM213.5 398.9h1.7v1.1h-1.7zM217.1 399.8h1.1v1.5h-1.1zM211.1 402.4h1.6v1.7h-1.6zM210.1 400.1h1.0v1.4h-1.0zM213.4 402.9h1.8v1.4h-1.8zM218.0 401.6h1.6v1.5h-1.6zM217.2 400.0h1.5v1.1h-1.5zM214.9 398.9h2.0v1.6h-2.0zM213.7 404.6h1.6v1.3h-1.6zM204.9 398.7h1.6v1.4h-1.6zM192.8 400.1h1.6v1.3h-1.6zM195.0 398.3h2.0v1.6h-2.0zM200.9 396.9h1.8v1.6h-1.8zM193.0 394.6h2.0v1.1h-2.0zM195.3 396.1h1.3v1.7h-1.3zM197.9 397.6h1.4v1.6h-1.4zM189.2 395.2h2.1v1.5h-2.1zM198.4 398.2h1.1v1.7h-1.1zM196.1 396.4h1.2v1.5h-1.2zM194.7 393.0h1.7v1.1h-1.7zM194.1 396.8h2.0v1.6h-2.0zM195.6 394.3h1.7v1.7h-1.7zM192.1 396.0h1.5v1.3h-1.5zM196.1 397.4h2.0v1.2h-2.0zM191.3 395.2h1.8v1.4h-1.8zM193.3 398.4h1.2v1.5h-1.2zM191.5 394.0h1.4v1.7h-1.4zM196.4 396.6h2.1v1.5h-2.1zM199.3 396.7h1.4v1.2h-1.4zM190.9 397.1h1.0v1.7h-1.0zM173.2 395.8h1.9v1.2h-1.9zM177.7 398.8h1.3v1.2h-1.3zM177.4 396.6h1.4v1.4h-1.4zM180.6 395.4h1.5v1.3h-1.5zM176.8 398.6h2.2v1.1h-2.2zM172.3 397.5h1.9v1.4h-1.9zM172.0 392.6h2.1v1.2h-2.1zM166.5 394.5h1.6v1.1h-1.6zM176.6 395.6h1.2v1.4h-1.2zM175.8 399.5h1.9v1.2h-1.9zM177.0 393.4h1.8v1.3h-1.8zM175.2 396.7h1.6v1.7h-1.6zM177.3 395.9h1.1v1.2h-1.1zM175.4 394.3h1.2v1.3h-1.2zM172.1 394.8h1.5v1.5h-1.5zM174.8 393.8h1.1v1.5h-1.1zM177.2 396.8h1.6v1.0h-1.6zM179.2 397.2h1.6v1.1h-1.6zM182.1 395.2h1.6v1.4h-1.6zM173.1 401.6h1.1v1.2h-1.1zM183.5 412.2h1.6v1.3h-1.6zM177.4 411.1h1.3v1.6h-1.3zM181.5 407.6h1.4v1.3h-1.4zM179.9 409.6h1.7v1.3h-1.7zM180.7 411.6h1.5v1.4h-1.5zM184.8 408.1h1.5v1.7h-1.5zM187.6 408.8h1.5v1.5h-1.5zM182.3 407.9h1.9v1.7h-1.9zM179.9 407.3h1.5v1.5h-1.5zM183.2 411.7h1.6v1.7h-1.6zM179.8 411.2h1.0v1.3h-1.0zM182.6 408.0h1.7v1.2h-1.7zM174.7 412.0h1.2v1.7h-1.2zM186.1 409.9h2.0v1.6h-2.0zM179.3 410.5h1.9v1.6h-1.9zM182.3 407.2h1.3v1.5h-1.3zM178.9 408.5h2.2v1.1h-2.2zM182.9 407.9h1.9v1.7h-1.9zM181.8 411.1h1.6v1.4h-1.6zM184.5 411.0h2.1v1.5h-2.1zM192.8 412.8h1.7v1.3h-1.7zM185.2 410.7h1.7v1.7h-1.7zM191.3 415.5h1.1v1.2h-1.1zM192.7 408.5h2.0v1.3h-2.0zM193.9 414.4h1.6v1.0h-1.6zM191.2 414.7h1.2v1.2h-1.2zM199.2 407.9h1.3v1.1h-1.3zM195.2 412.8h2.0v1.6h-2.0zM194.1 411.5h2.0v1.7h-2.0zM193.4 409.9h2.1v1.2h-2.1zM191.7 412.5h1.5v1.6h-1.5zM190.6 410.6h2.2v1.2h-2.2zM192.5 414.4h1.5v1.6h-1.5zM198.2 410.2h1.2v1.3h-1.2zM193.7 410.4h2.1v1.7h-2.1zM190.5 411.2h1.1v1.0h-1.1zM189.5 409.2h1.1v1.1h-1.1zM192.0 408.8h1.4v1.4h-1.4zM207.2 394.3h1.4v1.3h-1.4zM208.1 393.6h1.3v1.0h-1.3zM206.6 394.3h1.3v1.1h-1.3zM210.0 391.0h1.6v1.2h-1.6zM211.9 390.8h1.7v1.5h-1.7zM206.8 390.7h1.5v1.3h-1.5zM204.7 392.4h1.6v1.4h-1.6zM209.6 389.3h1.3v1.0h-1.3zM207.9 392.8h2.0v1.5h-2.0zM207.7 393.4h2.0v1.6h-2.0zM206.2 390.3h1.9v1.3h-1.9zM205.1 393.5h2.1v1.8h-2.1zM213.0 391.0h1.1v1.2h-1.1zM211.8 392.1h1.6v1.2h-1.6zM210.4 391.0h2.2v1.1h-2.2zM224.5 401.3h1.2v1.3h-1.2zM223.1 400.7h1.7v1.7h-1.7zM219.3 402.3h1.7v1.4h-1.7zM225.6 402.8h2.1v1.5h-2.1zM224.7 402.9h1.7v1.3h-1.7zM220.3 400.3h1.0v1.2h-1.0zM222.8 400.4h1.1v1.6h-1.1zM220.2 404.6h1.7v1.1h-1.7zM222.5 400.4h2.0v1.6h-2.0zM224.1 400.8h1.0v1.6h-1.0zM225.3 402.1h1.0v1.1h-1.0zM216.5 401.9h1.4v1.2h-1.4zM224.9 400.5h1.8v1.5h-1.8zM224.8 401.1h1.7v1.3h-1.7zM225.0 400.3h1.9v1.1h-1.9zM216.1 401.4h1.3v1.2h-1.3zM227.9 400.2h1.1v1.1h-1.1zM224.2 402.5h2.0v1.5h-2.0zM228.4 401.0h1.8v1.3h-1.8zM223.3 399.6h1.1v1.4h-1.1z" fill="#1c9c2c"/><path d="M143.5 367.1h2.2v1.3h-2.2zM144.1 368.9h1.6v1.6h-1.6zM141.5 366.5h1.2v1.6h-1.2zM146.9 368.7h1.0v1.1h-1.0zM140.3 365.0h1.9v1.5h-1.9zM146.9 368.1h1.2v1.1h-1.2zM144.7 368.5h2.1v1.3h-2.1zM144.8 368.7h2.0v1.5h-2.0zM144.7 368.2h1.1v1.2h-1.1zM144.6 369.2h1.2v1.5h-1.2zM144.8 369.4h1.6v1.3h-1.6zM145.9 370.3h1.6v1.3h-1.6zM143.6 368.5h1.7v1.1h-1.7zM144.0 368.6h2.1v1.4h-2.1zM145.3 368.0h1.5v1.5h-1.5zM145.9 369.5h1.3v1.2h-1.3zM145.4 366.6h1.8v1.7h-1.8zM146.2 371.5h2.0v1.6h-2.0zM150.0 373.1h1.9v1.7h-1.9zM149.9 368.8h1.7v1.7h-1.7zM149.6 369.8h1.8v1.7h-1.8zM146.7 371.2h1.7v1.1h-1.7zM145.5 369.2h1.8v1.2h-1.8zM147.4 373.0h2.0v1.8h-2.0zM146.0 370.1h2.0v1.2h-2.0zM146.6 371.2h1.0v1.2h-1.0zM146.0 370.7h1.9v1.2h-1.9zM149.7 367.9h1.5v1.2h-1.5zM147.6 370.6h1.8v1.1h-1.8zM148.9 368.0h1.2v1.5h-1.2zM148.0 373.0h1.5v1.1h-1.5zM147.4 370.3h1.8v1.7h-1.8zM148.7 372.9h1.0v1.3h-1.0zM149.2 370.2h1.7v1.7h-1.7zM147.0 373.2h1.8v1.0h-1.8zM147.8 373.0h1.2v1.0h-1.2zM146.6 372.4h1.7v1.6h-1.7zM148.3 374.8h1.8v1.6h-1.8zM151.0 372.5h1.7v1.7h-1.7zM146.3 369.6h1.3v1.6h-1.3zM147.2 372.5h1.0v1.4h-1.0zM150.0 374.3h1.7v1.5h-1.7zM152.8 373.8h1.3v1.3h-1.3zM150.8 375.4h1.5v1.1h-1.5zM149.5 374.5h1.2v1.3h-1.2zM150.2 375.7h2.1v1.4h-2.1zM150.9 376.1h2.1v1.6h-2.1zM153.1 376.5h1.3v1.3h-1.3zM150.7 376.4h2.1v1.3h-2.1zM153.6 379.3h1.1v1.0h-1.1zM149.8 375.1h2.1v1.6h-2.1zM151.4 377.3h1.7v1.4h-1.7zM152.1 379.3h1.1v1.7h-1.1zM154.2 376.0h1.4v1.6h-1.4zM154.5 375.0h1.0v1.4h-1.0zM153.0 378.5h2.1v1.7h-2.1zM151.3 379.1h1.4v1.1h-1.4zM152.3 375.2h1.4v1.3h-1.4zM151.3 375.5h1.6v1.1h-1.6zM153.5 378.8h2.0v1.4h-2.0zM151.2 376.8h1.4v1.1h-1.4zM155.4 377.8h1.2v1.5h-1.2zM150.0 376.8h1.9v1.5h-1.9zM156.6 374.9h1.5v1.5h-1.5zM155.9 377.0h1.8v1.6h-1.8zM153.6 381.2h1.1v1.6h-1.1zM155.3 378.9h1.5v1.1h-1.5zM155.6 381.6h2.1v1.1h-2.1zM154.2 381.0h1.5v1.2h-1.5zM153.5 379.2h1.8v1.6h-1.8zM154.1 382.0h1.1v1.1h-1.1zM155.6 378.6h1.0v1.3h-1.0zM153.2 380.1h1.0v1.3h-1.0zM156.7 379.3h1.2v1.6h-1.2zM157.2 382.2h1.1v1.1h-1.1zM153.7 381.6h2.2v1.4h-2.2zM159.2 378.3h1.9v1.5h-1.9zM155.4 381.5h1.6v1.3h-1.6zM154.9 380.2h1.9v1.6h-1.9zM157.0 383.0h1.1v1.1h-1.1zM157.8 382.0h1.5v1.4h-1.5zM154.3 381.8h1.9v1.3h-1.9zM158.2 379.7h1.0v1.4h-1.0zM159.8 384.5h1.1v1.2h-1.1zM156.3 380.0h1.8v1.3h-1.8zM154.5 382.2h1.6v1.2h-1.6zM156.7 383.0h1.2v1.2h-1.2zM163.7 383.9h2.0v1.3h-2.0zM159.4 386.6h2.2v1.1h-2.2zM157.3 380.5h2.1v1.2h-2.1zM158.1 384.5h1.3v1.7h-1.3zM159.3 382.7h1.2v1.3h-1.2zM157.3 386.4h1.9v1.6h-1.9zM155.1 384.1h1.5v1.5h-1.5zM157.9 383.6h1.7v1.1h-1.7zM160.4 385.7h1.4v1.0h-1.4zM160.4 386.1h2.1v1.6h-2.1zM160.2 385.5h1.4v1.2h-1.4zM160.3 387.0h2.0v1.3h-2.0zM158.8 386.0h1.0v1.6h-1.0zM158.8 388.1h1.9v1.1h-1.9zM159.1 386.7h1.9v1.6h-1.9zM157.6 387.1h1.4v1.4h-1.4zM158.8 383.9h2.0v1.7h-2.0zM155.0 383.9h2.1v1.1h-2.1zM161.0 386.5h2.0v1.1h-2.0zM158.7 388.4h2.0v1.5h-2.0zM160.9 390.3h2.0v1.4h-2.0zM161.2 387.1h1.4v1.3h-1.4zM162.3 385.7h2.0v1.1h-2.0zM159.6 389.5h1.4v1.2h-1.4zM160.2 386.8h1.5v1.4h-1.5zM159.4 386.9h1.8v1.3h-1.8zM158.6 388.1h1.3v1.0h-1.3zM160.2 389.4h1.1v1.0h-1.1zM160.3 388.0h2.1v1.3h-2.1zM158.2 388.8h1.0v1.1h-1.0zM161.3 385.8h1.6v1.3h-1.6zM160.7 385.9h2.0v1.6h-2.0zM163.5 386.2h1.8v1.4h-1.8zM157.9 387.5h1.6v1.6h-1.6zM161.2 387.5h1.9v1.5h-1.9zM156.8 385.7h1.1v1.4h-1.1zM163.3 391.4h1.2v1.6h-1.2zM158.3 389.6h1.4v1.7h-1.4zM163.4 389.5h1.9v1.7h-1.9zM162.2 388.0h1.1v1.5h-1.1zM161.8 388.8h2.1v1.4h-2.1zM164.3 389.8h1.4v1.1h-1.4zM165.7 386.6h1.1v1.3h-1.1zM161.4 392.1h1.1v1.3h-1.1zM159.8 390.5h1.5v1.5h-1.5zM167.8 389.3h2.1v1.6h-2.1zM163.3 392.1h1.6v1.5h-1.6zM161.5 389.8h2.2v1.2h-2.2zM164.0 390.9h1.3v1.6h-1.3zM163.4 390.4h1.3v1.2h-1.3zM164.1 387.1h1.3v1.1h-1.3zM168.8 389.8h1.9v1.4h-1.9zM163.0 387.7h1.6v1.2h-1.6zM159.9 390.4h1.4v1.5h-1.4zM166.6 394.6h1.3v1.2h-1.3zM169.5 391.1h2.1v1.6h-2.1zM166.6 389.5h1.7v1.1h-1.7zM163.8 388.8h2.0v1.0h-2.0zM167.5 393.3h1.6v1.7h-1.6zM166.6 392.1h1.8v1.5h-1.8zM163.5 390.6h1.8v1.1h-1.8zM167.1 390.5h2.0v1.4h-2.0zM164.9 394.1h1.8v1.4h-1.8zM164.4 392.3h1.5v1.2h-1.5zM164.5 393.5h1.5v1.5h-1.5zM168.2 392.2h1.0v1.7h-1.0zM162.7 391.8h1.7v1.3h-1.7zM165.0 394.2h1.8v1.0h-1.8zM163.4 390.0h1.8v1.5h-1.8zM167.4 389.3h2.0v1.8h-2.0zM165.1 393.7h1.7v1.5h-1.7zM167.4 391.7h1.4v1.0h-1.4zM166.9 391.4h2.2v1.5h-2.2zM167.7 391.1h2.2v1.4h-2.2zM167.2 392.5h1.0v1.2h-1.0zM165.2 395.9h1.8v1.1h-1.8zM165.8 396.7h1.1v1.5h-1.1zM163.1 396.5h1.4v1.7h-1.4zM167.5 397.1h1.3v1.0h-1.3zM165.1 398.6h1.3v1.4h-1.3zM164.9 394.8h1.6v1.0h-1.6zM165.5 396.2h2.0v1.6h-2.0zM165.7 392.7h2.0v1.6h-2.0zM167.7 395.3h1.9v1.6h-1.9zM171.6 396.2h1.2v1.4h-1.2zM165.7 394.7h1.2v1.7h-1.2zM166.0 396.3h2.2v1.3h-2.2zM170.7 397.5h1.3v1.2h-1.3zM166.8 398.7h1.4v1.5h-1.4zM173.4 393.3h2.1v1.7h-2.1zM167.7 399.8h1.1v1.4h-1.1zM168.7 396.8h2.1v1.1h-2.1zM167.2 394.2h1.0v1.6h-1.0zM172.0 397.8h2.0v1.4h-2.0zM168.5 397.9h1.8v1.0h-1.8zM164.0 397.1h1.8v1.1h-1.8zM168.3 395.0h1.4v1.6h-1.4zM167.0 396.9h1.6v1.2h-1.6zM167.9 401.5h1.4v1.6h-1.4zM168.0 398.7h1.0v1.7h-1.0zM169.0 392.7h1.7v1.0h-1.7zM169.3 398.3h1.7v1.5h-1.7zM170.7 397.4h1.3v1.2h-1.3zM169.3 398.1h1.6v1.3h-1.6zM166.5 402.5h1.4v1.6h-1.4zM169.1 399.0h1.0v1.5h-1.0zM170.6 398.8h1.8v1.2h-1.8zM168.5 396.1h1.9v1.2h-1.9zM173.3 403.1h2.1v1.7h-2.1zM169.4 399.1h1.4v1.7h-1.4zM171.8 399.8h1.1v1.7h-1.1zM169.6 399.8h1.4v1.2h-1.4zM167.4 400.2h1.8v1.1h-1.8zM169.4 399.1h1.5v1.6h-1.5zM171.0 403.9h1.3v1.3h-1.3zM171.4 400.5h1.7v1.4h-1.7zM170.1 396.3h1.8v1.2h-1.8zM172.1 402.6h1.3v1.4h-1.3zM174.2 402.1h1.5v1.0h-1.5zM175.1 403.5h2.0v1.7h-2.0zM166.4 403.9h1.2v1.6h-1.2zM172.7 400.2h1.0v1.1h-1.0zM174.8 402.2h1.7v1.4h-1.7zM173.7 402.3h1.2v1.1h-1.2zM169.9 400.6h2.0v1.6h-2.0zM173.7 403.2h1.2v1.4h-1.2zM176.9 402.6h1.8v1.6h-1.8zM167.7 402.3h2.0v1.6h-2.0zM173.0 400.8h1.4v1.0h-1.4zM172.7 400.0h2.2v1.2h-2.2zM168.5 403.5h2.2v1.6h-2.2zM176.2 399.3h1.3v1.5h-1.3zM175.5 403.1h2.1v1.4h-2.1zM174.2 403.9h1.1v1.4h-1.1zM182.6 351.3h2.0v1.6h-2.0zM181.3 349.2h1.5v1.0h-1.5zM179.6 348.6h1.5v1.1h-1.5zM176.3 350.6h1.1v1.1h-1.1zM175.6 350.9h2.0v1.5h-2.0zM182.3 349.1h1.2v1.2h-1.2zM181.5 348.8h1.8v1.5h-1.8zM181.2 350.8h1.5v1.6h-1.5zM184.3 349.8h1.3v1.0h-1.3zM173.2 349.9h2.1v1.2h-2.1zM178.3 350.8h1.0v1.6h-1.0zM180.0 349.9h1.0v1.4h-1.0zM178.2 352.6h2.1v1.6h-2.1zM176.7 352.5h1.3v1.6h-1.3zM177.5 353.5h1.8v1.7h-1.8zM171.0 353.6h1.7v1.2h-1.7zM175.4 349.5h1.1v1.0h-1.1zM175.1 349.8h1.1v1.6h-1.1zM183.3 352.5h1.3v1.3h-1.3zM186.6 349.3h2.0v1.7h-2.0zM173.3 349.1h1.4v1.3h-1.4zM174.6 350.0h1.8v1.7h-1.8zM177.3 349.4h1.0v1.3h-1.0zM169.1 351.7h1.7v1.4h-1.7zM173.0 349.3h1.8v1.4h-1.8zM174.5 350.1h1.1v1.3h-1.1zM187.2 348.1h1.4v1.4h-1.4zM172.5 350.3h1.2v1.6h-1.2zM181.1 351.1h1.3v1.2h-1.3zM214.7 348.5h1.6v1.1h-1.6zM209.8 346.6h1.7v1.4h-1.7zM210.8 347.3h1.6v1.5h-1.6zM215.8 350.1h1.7v1.7h-1.7zM209.3 346.9h1.9v1.2h-1.9zM210.3 349.0h1.9v1.5h-1.9zM218.9 351.0h2.2v1.4h-2.2zM221.0 347.9h1.5v1.1h-1.5zM220.6 348.2h1.9v1.5h-1.9zM209.8 346.8h1.8v1.4h-1.8zM220.3 349.1h1.8v1.3h-1.8zM219.6 347.7h1.2v1.4h-1.2zM212.1 348.6h2.1v1.1h-2.1zM213.3 347.2h1.6v1.8h-1.6zM222.4 349.4h1.0v1.7h-1.0zM218.6 347.2h1.8v1.3h-1.8zM216.4 349.0h1.5v1.7h-1.5zM218.7 349.1h1.6v1.4h-1.6zM208.5 350.9h1.7v1.2h-1.7zM204.4 347.2h1.1v1.5h-1.1zM209.9 348.1h1.2v1.2h-1.2zM209.2 348.5h1.7v1.2h-1.7zM254.5 379.2h2.0v1.6h-2.0zM257.7 389.7h1.7v1.3h-1.7zM256.9 386.2h1.5v1.5h-1.5zM256.8 387.4h1.3v1.7h-1.3zM254.2 382.6h1.7v1.4h-1.7zM253.3 380.4h2.1v1.6h-2.1zM258.0 381.6h2.0v1.2h-2.0zM251.2 381.7h1.0v1.1h-1.0zM258.0 381.6h1.4v1.4h-1.4zM257.2 384.4h1.6v1.1h-1.6zM258.1 384.8h2.0v1.2h-2.0zM255.9 380.8h1.3v1.1h-1.3zM252.4 381.3h1.3v1.5h-1.3zM252.7 378.9h2.2v1.3h-2.2zM241.6 402.5h1.6v1.1h-1.6zM243.4 402.4h1.5v1.4h-1.5zM231.6 399.8h1.9v1.2h-1.9zM224.9 403.6h2.1v1.3h-2.1zM227.6 399.7h1.8v1.2h-1.8zM241.9 402.6h1.6v1.1h-1.6zM182.8 417.9h1.3v1.2h-1.3zM183.2 415.8h1.9v1.1h-1.9zM179.0 415.8h1.3v1.1h-1.3zM186.5 417.2h2.2v1.3h-2.2zM184.9 416.8h1.8v1.0h-1.8zM180.1 415.8h1.3v1.6h-1.3zM180.2 415.0h1.6v1.6h-1.6zM177.1 415.0h1.2v1.1h-1.2zM181.4 418.8h1.7v1.3h-1.7zM177.5 414.6h1.8v1.3h-1.8zM182.0 414.4h2.1v1.7h-2.1zM182.4 413.5h1.8v1.4h-1.8zM180.0 417.4h1.8v1.2h-1.8zM177.1 414.9h1.7v1.3h-1.7zM180.2 418.2h1.8v1.7h-1.8zM198.0 411.3h1.8v1.6h-1.8zM200.4 409.2h1.9v1.7h-1.9zM197.9 411.3h1.8v1.2h-1.8zM201.0 410.1h1.7v1.4h-1.7z" fill="#c81e22"/><path d="M149.1 360.5h2.4v1.7h-2.4zM148.6 362.8h1.6v1.7h-1.6zM146.7 361.8h2.4v2.0h-2.4zM144.0 363.9h1.6v1.7h-1.6zM141.4 364.4h1.7v1.6h-1.7zM146.2 363.1h2.1v1.9h-2.1zM141.5 364.1h2.2v2.1h-2.2zM166.2 354.0h1.7v1.9h-1.7zM163.8 355.3h1.6v1.5h-1.6zM160.1 357.2h1.9v2.0h-1.9zM162.4 357.7h2.3v1.6h-2.3zM160.1 355.6h1.7v1.7h-1.7zM167.9 355.8h1.9v1.9h-1.9zM178.8 349.2h2.5v1.9h-2.5zM186.2 348.7h2.2v1.5h-2.2zM184.4 348.5h2.4v1.9h-2.4zM192.1 349.2h1.8v1.9h-1.8zM179.9 349.3h2.0v1.7h-2.0zM184.8 350.3h1.9v1.6h-1.9zM185.4 349.4h2.0v1.9h-2.0zM190.9 348.2h1.8v1.6h-1.8zM228.4 349.0h1.5v1.8h-1.5zM235.7 349.4h1.6v1.6h-1.6zM224.8 348.5h2.4v1.8h-2.4zM224.2 348.4h1.5v2.0h-1.5zM221.8 349.7h1.6v1.8h-1.6zM226.2 348.4h1.6v2.0h-1.6zM221.2 348.1h2.2v1.8h-2.2zM232.4 349.8h2.0v1.9h-2.0zM233.0 348.7h1.6v1.9h-1.6zM224.9 348.6h2.4v1.8h-2.4zM227.7 349.5h1.5v1.5h-1.5zM222.7 349.0h1.9v1.9h-1.9zM241.3 360.5h1.7v1.8h-1.7zM240.4 358.8h1.6v1.6h-1.6zM243.3 356.0h2.0v2.1h-2.0zM239.9 354.9h2.3v2.1h-2.3zM241.4 359.1h2.3v1.5h-2.3zM241.4 357.9h2.1v1.9h-2.1zM243.3 356.6h2.2v2.0h-2.2zM241.1 355.6h2.1v1.7h-2.1zM244.6 359.0h2.4v1.8h-2.4zM245.2 360.2h2.0v1.6h-2.0zM243.5 359.1h1.7v1.5h-1.7zM240.8 364.1h1.8v2.1h-1.8zM240.7 368.3h2.5v1.9h-2.5zM239.8 367.9h2.3v1.7h-2.3zM244.4 368.7h2.3v1.8h-2.3zM244.0 369.8h1.7v2.0h-1.7zM240.7 364.5h1.6v1.7h-1.6zM242.1 365.8h1.5v1.7h-1.5zM242.3 368.0h2.4v2.0h-2.4zM241.9 365.4h2.3v1.5h-2.3zM259.7 395.4h1.6v2.0h-1.6zM258.3 396.7h2.3v1.9h-2.3zM262.0 394.1h2.1v2.1h-2.1zM256.3 397.5h2.2v2.0h-2.2zM253.4 394.5h1.8v2.0h-1.8zM253.9 393.5h2.1v1.9h-2.1zM208.4 406.6h1.7v1.7h-1.7zM210.7 405.6h2.4v1.5h-2.4zM206.5 406.7h1.6v1.8h-1.6zM172.7 415.9h2.1v1.9h-2.1zM176.4 420.9h1.8v1.9h-1.8zM179.4 420.7h2.3v2.0h-2.3zM186.3 414.9h1.9v1.7h-1.9zM175.7 414.0h1.7v1.6h-1.7zM174.6 412.3h2.5v2.0h-2.5zM173.0 414.8h1.9v1.5h-1.9zM177.3 416.0h2.6v1.7h-2.6zM178.3 411.2h2.6v1.5h-2.6zM188.5 416.9h1.9v1.9h-1.9zM179.3 416.3h1.6v2.0h-1.6zM187.9 412.3h2.1v1.6h-2.1zM178.5 410.8h2.4v1.9h-2.4zM174.7 414.5h1.7v1.5h-1.7zM173.7 416.9h2.5v1.5h-2.5z" fill="#e07a22"/><polygon points="167.0,429.6 290.0,392.4 433.5,348.0 433.5,360.0 290.0,404.6 171.4,442.4" fill="#c8117a"/><polygon points="167.0,429.6 433.5,348.0 433.5,351.0 168.0,433.0" fill="#e0208a"/><ellipse cx="169" cy="436" rx="3" ry="6.5" fill="#b0106c" transform="rotate(-18 169 436)"/><ellipse cx="156.5" cy="449" rx="10.5" ry="5.6" fill="none" stroke="#c49c9e" stroke-width="3.6" transform="rotate(-12 156.5 449)"/><text x="70" y="464" font-family="Liberation Mono" font-size="9" fill="#8f9ea6" transform="rotate(-16 70 464)">-625</text><text x="217" y="533" font-family="Liberation Mono" font-size="9.5" fill="#c0a2a6" transform="rotate(-108 217 533)">-625</text><text x="60" y="279" font-family="Liberation Mono" font-size="10" fill="#c0a0a4" transform="rotate(-66 60 279)">3125</text><text x="20" y="198" font-family="Liberation Mono" font-size="8.5" fill="#b89ea2" transform="rotate(-66 20 198)">6250</text><text x="1" y="155" font-family="Liberation Mono" font-size="8" fill="#a89ea2" transform="rotate(-66 1 155)">9375</text></svg><div class="a" style="left:561.5px;top:184.5px;width:42.5px;height:15px;border:1px solid #9aaab2;border-radius:8px;background:rgba(85,110,122,.45)"></div><div class="t" style="left:568.0px;transform-origin:0 50%;transform:scaleX(0.9);top:187.25px;font-size:9.5px;color:#e4eaee;">Persp</div><svg style="left:593.4px;top:190.8px;" width="5" height="4" viewBox="0 0 5 4"><path d="M0 0H5L2.5 3.5Z" fill="#e4eaee"/></svg><div class="a" style="left:609.5px;top:184.5px;width:49.0px;height:15px;border:1px solid #9aaab2;border-radius:8px;background:rgba(85,110,122,.45)"></div><div class="t" style="left:616.0px;transform-origin:0 50%;transform:scaleX(0.92);top:187.25px;font-size:9.5px;color:#e4eaee;">No cam</div><svg style="left:647.9px;top:190.8px;" width="5" height="4" viewBox="0 0 5 4"><path d="M0 0H5L2.5 3.5Z" fill="#e4eaee"/></svg><div class="t" style="left:236px;transform-origin:0 50%;transform:scaleX(0.97);top:791.1px;font-size:9.2px;color:#1c1c1c;-webkit-text-stroke:0.35px #1c1c1c">Left mouse tumbles. Middle pans. Right dollies. Ctrl+Alt+Left box-zooms. Ctrl+Right zooms. Spacebar-Ctrl-</div><div class="t" style="left:236px;transform-origin:0 50%;transform:scaleX(0.97);top:803.1px;font-size:9.2px;color:#1c1c1c;-webkit-text-stroke:0.35px #1c1c1c">Left tilts. Hold L for alternate tumble, dolly, and zoom. &nbsp;&nbsp;&nbsp;&nbsp; M or Alt+M for First Person Navigation.</div><svg style="left:234px;top:800px;" width="10" height="12" viewBox="0 0 10 12"><path d="M5 10L1 6L3 2" stroke="#d88" fill="none"/><path d="M5 10V1" stroke="#7c7"/><path d="M5 10L10 7" stroke="#88d"/></svg><div class="a" style="left:203px;top:820px;width:1514px;height:5px;background:#2a2a2a;border-top:2px solid #555"></div>
<div class="a" style="left:203px;top:179px;width:27px;height:641px;background:#3a3a3a;border-left:1px solid #1c1c1c;border-right:1px solid #2a2a2a"></div><div class="a" style="left:204px;top:180px;width:25px;height:6px;background:#262626"></div><svg style="left:206px;top:181px;" width="5" height="4" viewBox="0 0 5 4"><path d="M0 2L5 0V4Z" fill="#ddd"/></svg><div class="a" style="left:663.5px;top:179px;width:20.5px;height:641px;background:#3a3a3a;border-left:1px solid #2a2a2a"></div><div class="a" style="left:664px;top:180px;width:20px;height:6px;background:#262626"></div><svg style="left:678px;top:181px;" width="5" height="4" viewBox="0 0 5 4"><path d="M5 2L0 0V4Z" fill="#ddd"/></svg><div class="a" style="left:205px;top:192.5px;width:21px;height:19px;background:#5f7797;border:1px solid #2a3440"></div><svg style="left:207px;top:194px;" width="16" height="16" viewBox="0 0 16 16"><path d="M2 14L7 3L12 14Z" fill="#f0c428"/><circle cx="11" cy="6" r="4.5" fill="#8a8a8a"/></svg><svg style="left:222px;top:206px;" width="4" height="5" viewBox="0 0 4 5"><path d="M0 0L4 2.5L0 5Z" fill="#9a9a9a"/></svg><div class="a" style="left:205px;top:211.5px;width:21px;height:19px;background:#474747;border:1px solid #262626"></div><svg style="left:207px;top:213px;" width="16" height="16" viewBox="0 0 16 16"><path d="M8 1L15 8L8 15L1 8Z" fill="#8c8c8c"/><path d="M8 6L11 9L8 12L5 9Z" fill="#f0c428"/></svg><svg style="left:222px;top:225px;" width="4" height="5" viewBox="0 0 4 5"><path d="M0 0L4 2.5L0 5Z" fill="#9a9a9a"/></svg><div class="a" style="left:205px;top:231.0px;width:21px;height:19px;background:#474747;border:1px solid #262626"></div><svg style="left:207px;top:232.5px;" width="16" height="16" viewBox="0 0 16 16"><path d="M3 4L9 1L15 5L13 13L7 15L2 11Z" fill="#e8c020"/><path d="M3 4L9 7L15 5" stroke="#fff3a0" fill="none"/></svg><svg style="left:222px;top:244.5px;" width="4" height="5" viewBox="0 0 4 5"><path d="M0 0L4 2.5L0 5Z" fill="#9a9a9a"/></svg><svg style="left:207px;top:264px;" width="16" height="16" viewBox="0 0 16 16"><path d="M3 1L3 14L6 11L9 16L11 15L8 10L13 10Z" fill="#111" stroke="#ddd" stroke-width="1"/></svg><svg style="left:222px;top:276px;" width="4" height="5" viewBox="0 0 4 5"><path d="M0 0L4 2.5L0 5Z" fill="#9a9a9a"/></svg><div class="a" style="left:205px;top:285.0px;width:21px;height:19px;background:#5f7797;border:1px solid #2a3440"></div><svg style="left:207px;top:286.5px;" width="16" height="16" viewBox="0 0 16 16"><rect x="3" y="7" width="10" height="8" fill="#eee"/><path d="M5 7V4A3 3 0 0 1 11 4V7" stroke="#eee" stroke-width="1.6" fill="none"/></svg><svg style="left:207px;top:309px;" width="16" height="16" viewBox="0 0 16 16"><rect x="5" y="4" width="7" height="7" fill="#bbb"/><path d="M1 10L5 8M15 10L11 8M4 14L8 11L12 14" stroke="#d42020" stroke-width="2"/></svg><svg style="left:207px;top:331px;" width="16" height="16" viewBox="0 0 16 16"><circle cx="8" cy="7" r="4" fill="#bbb"/><path d="M2 11Q8 16 14 11" stroke="#d42020" stroke-width="2.2" fill="none"/><path d="M2 11L1 8M14 11L15 8" stroke="#f80" stroke-width="2"/></svg><svg style="left:207px;top:353.6px;" width="16" height="16" viewBox="0 0 16 16"><rect x="5" y="5" width="7" height="8" fill="#888"/><path d="M8 1V5M2 14L5 12M14 14L11 12" stroke="#d42020" stroke-width="2.2"/></svg><svg style="left:207px;top:376px;" width="16" height="16" viewBox="0 0 16 16"><path d="M8 2V8M4 6L12 10M5 15L8 9L11 15" stroke="#ddd" stroke-width="1.5"/><circle cx="8" cy="2.5" r="1.5" fill="#d42020"/><circle cx="4" cy="6" r="1.5" fill="#d42020"/><circle cx="12" cy="10" r="1.5" fill="#d42020"/></svg><svg style="left:207px;top:398px;" width="16" height="16" viewBox="0 0 16 16"><path d="M8 1L14 12L2 12Z" fill="#4a8a2a"/><circle cx="5" cy="12" r="3" fill="#3a6ad8"/><circle cx="11" cy="12" r="3" fill="#f0c428"/><circle cx="8" cy="6" r="2.5" fill="#d42020"/></svg><svg style="left:222px;top:410px;" width="4" height="5" viewBox="0 0 4 5"><path d="M0 0L4 2.5L0 5Z" fill="#9a9a9a"/></svg><svg style="left:207px;top:430px;" width="16" height="16" viewBox="0 0 16 16"><path d="M2 9V5A5 5 0 0 1 12 5V9" stroke="#d42020" stroke-width="3" fill="none"/><rect x="7" y="8" width="8" height="7" fill="none" stroke="#ddd" stroke-width="1"/><path d="M11 8V15M7 11.5H15" stroke="#ddd"/></svg><svg style="left:222px;top:442px;" width="4" height="5" viewBox="0 0 4 5"><path d="M0 0L4 2.5L0 5Z" fill="#9a9a9a"/></svg><svg style="left:207px;top:453px;" width="16" height="16" viewBox="0 0 16 16"><path d="M2 9V5A5 5 0 0 1 12 5V9" stroke="#d42020" stroke-width="3" fill="none"/><path d="M1 15Q8 9 15 11" stroke="#ddd" stroke-width="1" fill="none"/></svg><svg style="left:222px;top:465px;" width="4" height="5" viewBox="0 0 4 5"><path d="M0 0L4 2.5L0 5Z" fill="#9a9a9a"/></svg><svg style="left:207px;top:476px;" width="16" height="16" viewBox="0 0 16 16"><path d="M2 9V5A5 5 0 0 1 12 5V9" stroke="#d42020" stroke-width="3" fill="none"/><circle cx="12" cy="12" r="2.5" fill="#ddd"/></svg><svg style="left:222px;top:488px;" width="4" height="5" viewBox="0 0 4 5"><path d="M0 0L4 2.5L0 5Z" fill="#9a9a9a"/></svg><svg style="left:207px;top:499px;" width="16" height="16" viewBox="0 0 16 16"><path d="M2 13V7A6 6 0 0 1 14 7V13" stroke="#d42020" stroke-width="3.6" fill="none"/><path d="M2 12V15M14 12V15" stroke="#eee" stroke-width="3.6"/></svg><svg style="left:222px;top:511px;" width="4" height="5" viewBox="0 0 4 5"><path d="M0 0L4 2.5L0 5Z" fill="#9a9a9a"/></svg><div class="a" style="left:205px;top:526.0px;width:21px;height:19px;background:#5f7797;border:1px solid #2a3440"></div><svg style="left:207px;top:527.5px;" width="16" height="16" viewBox="0 0 16 16"><circle cx="6" cy="6" r="3.5" fill="#222"/><circle cx="11" cy="8" r="3.5" fill="#222"/><rect x="4" y="8" width="8" height="5" fill="#333"/></svg><svg style="left:207px;top:550px;" width="16" height="16" viewBox="0 0 16 16"><circle cx="7" cy="7" r="6" fill="#333" stroke="#ddd" stroke-width="1.3"/><rect x="8" y="8" width="7" height="7" fill="#ccc" stroke="#c33" stroke-width="1.3"/></svg><svg style="left:207px;top:573px;" width="16" height="16" viewBox="0 0 16 16"><ellipse cx="8" cy="12" rx="7" ry="3" fill="#bfe0f0"/><ellipse cx="8" cy="8" rx="5" ry="4" fill="#444" stroke="#bbb"/></svg><svg style="left:222px;top:585px;" width="4" height="5" viewBox="0 0 4 5"><path d="M0 0L4 2.5L0 5Z" fill="#9a9a9a"/></svg><svg style="left:207px;top:778px;" width="16" height="16" viewBox="0 0 16 16"><path d="M2 9L9 4L15 8L8 13Z" fill="#e0e8f0"/><path d="M2 9L8 13V15L2 11Z" fill="#b85a20"/><path d="M11 3L14 1" stroke="#6af" stroke-width="1.5"/></svg><svg style="left:222px;top:790px;" width="4" height="5" viewBox="0 0 4 5"><path d="M0 0L4 2.5L0 5Z" fill="#9a9a9a"/></svg><svg style="left:207px;top:799px;" width="16" height="16" viewBox="0 0 16 16"><ellipse cx="8" cy="8" rx="7" ry="5.5" fill="#c8c8c0"/><circle cx="5" cy="7" r="1.6" fill="#777"/><circle cx="11" cy="7" r="1.6" fill="#777"/><circle cx="8" cy="10" r="1.6" fill="#777"/></svg><svg style="left:222px;top:811px;" width="4" height="5" viewBox="0 0 4 5"><path d="M0 0L4 2.5L0 5Z" fill="#9a9a9a"/></svg><div class="a" style="left:206px;top:257.5px;width:20px;height:1px;background:#2a2a2a"></div><div class="a" style="left:206px;top:424px;width:20px;height:1px;background:#2a2a2a"></div><div class="a" style="left:206px;top:520px;width:20px;height:1px;background:#2a2a2a"></div><div class="a" style="left:665px;top:192px;width:18px;height:18px;background:#5f7797;border:1px solid #2a3440"></div><svg style="left:666px;top:193.5px;" width="15" height="15" viewBox="0 0 15 15"><ellipse cx="7.5" cy="7.5" rx="6.5" ry="3" fill="none" stroke="#ddd" stroke-width="1.2"/><circle cx="7.5" cy="7.5" r="2" fill="#ddd"/></svg><svg style="left:679px;top:205px;" width="4" height="5" viewBox="0 0 4 5"><path d="M0 0L4 2.5L0 5Z" fill="#9a9a9a"/></svg><svg style="left:666px;top:210.5px;" width="15" height="15" viewBox="0 0 15 15"><path d="M2 5L8 2L13 6L7 12Z" fill="none" stroke="#6c6" stroke-width="1.5"/><circle cx="8" cy="7" r="2.5" fill="none" stroke="#ddd"/></svg><svg style="left:679px;top:222px;" width="4" height="5" viewBox="0 0 4 5"><path d="M0 0L4 2.5L0 5Z" fill="#9a9a9a"/></svg><svg style="left:666px;top:232.5px;" width="15" height="15" viewBox="0 0 15 15"><rect x="3" y="7" width="9" height="7" fill="#e8e8e8"/><path d="M4.5 7V4.5A3 3 0 0 1 10.5 4.5V7" stroke="#e8e8e8" stroke-width="1.6" fill="none"/></svg><svg style="left:666px;top:251.5px;" width="15" height="15" viewBox="0 0 15 15"><circle cx="7.5" cy="6" r="5" fill="#333" stroke="#ccc" stroke-width="1.2"/><path d="M5 4L10 8M10 4L5 8" stroke="#ddd" stroke-width="1.2"/><rect x="6" y="11" width="3" height="3" fill="#aaa"/></svg><svg style="left:666px;top:271.0px;" width="15" height="15" viewBox="0 0 15 15"><circle cx="8" cy="8" r="6" fill="#ccc"/><circle cx="6" cy="7" r="5" fill="#eee" stroke="#999"/></svg><svg style="left:679px;top:282.5px;" width="4" height="5" viewBox="0 0 4 5"><path d="M0 0L4 2.5L0 5Z" fill="#9a9a9a"/></svg><div class="a" style="left:665px;top:290.5px;width:18px;height:18px;background:#5f7797;border:1px solid #2a3440"></div><svg style="left:666px;top:292.0px;" width="15" height="15" viewBox="0 0 15 15"><circle cx="7.5" cy="6" r="4.5" fill="#ddd"/><rect x="6" y="10" width="3" height="3" fill="#aaa"/></svg><svg style="left:679px;top:303.5px;" width="4" height="5" viewBox="0 0 4 5"><path d="M0 0L4 2.5L0 5Z" fill="#9a9a9a"/></svg><svg style="left:666px;top:310.0px;" width="15" height="15" viewBox="0 0 15 15"><circle cx="7.5" cy="6" r="4" fill="none" stroke="#e8d030" stroke-width="1.3"/><path d="M7.5 4V8M5.5 6H9.5" stroke="#e8d030"/><rect x="6" y="10" width="3" height="3" fill="#aaa"/></svg><svg style="left:679px;top:321.5px;" width="4" height="5" viewBox="0 0 4 5"><path d="M0 0L4 2.5L0 5Z" fill="#9a9a9a"/></svg><svg style="left:666px;top:329.0px;" width="15" height="15" viewBox="0 0 15 15"><circle cx="7.5" cy="5" r="3.5" fill="none" stroke="#ddd" stroke-width="1.3"/><path d="M7.5 3V7M5.5 5H9.5" stroke="#ddd"/><ellipse cx="7.5" cy="11" rx="6" ry="2" fill="none" stroke="#ddd"/></svg><svg style="left:679px;top:340.5px;" width="4" height="5" viewBox="0 0 4 5"><path d="M0 0L4 2.5L0 5Z" fill="#9a9a9a"/></svg><div class="a" style="left:665px;top:350px;width:18px;height:18px;background:#5f7797;border:1px solid #2a3440"></div><svg style="left:666px;top:351.5px;" width="15" height="15" viewBox="0 0 15 15"><circle cx="7.5" cy="7.5" r="6" fill="#eee"/><path d="M7.5 1.5V7.5H13.5A6 6 0 0 0 7.5 1.5Z M7.5 7.5V13.5A6 6 0 0 1 1.5 7.5Z" fill="#222"/></svg><svg style="left:679px;top:363px;" width="4" height="5" viewBox="0 0 4 5"><path d="M0 0L4 2.5L0 5Z" fill="#9a9a9a"/></svg><svg style="left:666px;top:369.5px;" width="15" height="15" viewBox="0 0 15 15"><ellipse cx="7.5" cy="7" rx="6" ry="4" fill="none" stroke="#ddd" stroke-width="1.3"/><circle cx="4" cy="6" r="2" fill="#ddd"/><path d="M10 13H15L12.5 15Z" fill="#999"/></svg><svg style="left:666px;top:390.5px;" width="15" height="15" viewBox="0 0 15 15"><ellipse cx="8" cy="5" rx="6" ry="3.5" fill="none" stroke="#ddd" stroke-width="1.2"/><rect x="2" y="8" width="8" height="6" fill="#ccc"/><path d="M4 10L8 11L4 12Z" fill="#333"/></svg><svg style="left:679px;top:402px;" width="4" height="5" viewBox="0 0 4 5"><path d="M0 0L4 2.5L0 5Z" fill="#9a9a9a"/></svg><svg style="left:666px;top:415.0px;" width="15" height="15" viewBox="0 0 15 15"><circle cx="7.5" cy="7.5" r="2.2" fill="#eee"/></svg><svg style="left:666px;top:436.0px;" width="15" height="15" viewBox="0 0 15 15"><path d="M13 2L5 10" stroke="#ddd" stroke-width="1.3"/><circle cx="5" cy="10.5" r="2.5" fill="#eee"/></svg><svg style="left:666px;top:455.5px;" width="15" height="15" viewBox="0 0 15 15"><path d="M13 1L7 9L4 14" stroke="#ddd" stroke-width="1.5"/><circle cx="10" cy="4" r="2" fill="#eee"/></svg><svg style="left:666px;top:476.5px;" width="15" height="15" viewBox="0 0 15 15"><circle cx="4" cy="12" r="2.5" fill="#eee"/><text x="6" y="8" font-size="8" font-weight="bold" fill="#eee" font-family="Liberation Sans">12</text></svg><svg style="left:666px;top:498.5px;" width="15" height="15" viewBox="0 0 15 15"><path d="M2 10L8 5L14 9L8 14Z" fill="#ddd"/><path d="M9 1L8 7" stroke="#ddd" stroke-width="1.3"/></svg><svg style="left:666px;top:518.5px;" width="15" height="15" viewBox="0 0 15 15"><path d="M2 10L8 6L14 9L8 14Z" fill="#ddd"/><text x="6" y="7" font-size="7" font-weight="bold" fill="#eee" font-family="Liberation Sans">12</text></svg><svg style="left:666px;top:538.0px;" width="15" height="15" viewBox="0 0 15 15"><path d="M2 14V3H13" stroke="#ddd" stroke-width="1.1" fill="none"/><path d="M2 14L13 3" stroke="#ddd" stroke-width=".8"/><circle cx="2" cy="14" r="1.2" fill="#eee"/><circle cx="13" cy="3" r="1.2" fill="#eee"/></svg><svg style="left:666px;top:558.0px;" width="15" height="15" viewBox="0 0 15 15"><path d="M2 12L13 3L11 12Z" fill="#8ab0e0"/><path d="M2 12L11 12" stroke="#ddd"/></svg><svg style="left:666px;top:579.0px;" width="15" height="15" viewBox="0 0 15 15"><rect x="2" y="2" width="11" height="11" fill="#e8e8e8"/><path d="M2 2L13 13M2 7L8 13M7 2L13 8" stroke="#d44" stroke-width="1.2"/><path d="M2 10L5 13M10 2L13 5" stroke="#48d" stroke-width="1.2"/></svg><svg style="left:679px;top:590.5px;" width="4" height="5" viewBox="0 0 4 5"><path d="M0 0L4 2.5L0 5Z" fill="#9a9a9a"/></svg><svg style="left:666px;top:599.0px;" width="15" height="15" viewBox="0 0 15 15"><path d="M7.5 1L14 7.5L7.5 14L1 7.5Z" fill="#5a8ad8" stroke="#ddd"/><path d="M7.5 4L11 7.5L7.5 11L4 7.5Z" fill="#ddd"/></svg><svg style="left:666px;top:618.5px;" width="15" height="15" viewBox="0 0 15 15"><rect x="2" y="3" width="11" height="9" fill="#5cc46a"/><path d="M2 3L7.5 7.5L13 3M2 12L7.5 7.5L13 12" stroke="#2a6a2a" stroke-width="1.2" fill="none"/></svg><svg style="left:666px;top:638.5px;" width="15" height="15" viewBox="0 0 15 15"><path d="M7.5 8L7.5 1M7.5 8L13 12M7.5 8L1 11" stroke="#ddd" stroke-width="1.4"/><circle cx="7.5" cy="8" r="1.8" fill="#eee"/></svg><svg style="left:666px;top:658.5px;" width="15" height="15" viewBox="0 0 15 15"><circle cx="7.5" cy="7.5" r="6" fill="#444" stroke="#ddd" stroke-width="1.3"/><rect x="4" y="5" width="7" height="5" fill="#ddd"/><path d="M4 7.5H11" stroke="#444"/></svg><div class="a" style="left:665px;top:678.5px;width:18px;height:18px;background:#5f7797;border:1px solid #2a3440"></div><svg style="left:666px;top:680.0px;" width="15" height="15" viewBox="0 0 15 15"><rect x="2" y="2" width="12" height="10" fill="#ddd"/><path d="M2 10L7 6L14 11" stroke="#333" stroke-width="1.2" fill="none"/><rect x="6" y="12" width="8" height="2" fill="#aaa"/></svg><svg style="left:679px;top:691.5px;" width="4" height="5" viewBox="0 0 4 5"><path d="M0 0L4 2.5L0 5Z" fill="#9a9a9a"/></svg><div class="a" style="left:665px;top:708px;width:18px;height:18px;background:#5f7797;border:1px solid #2a3440"></div><svg style="left:666px;top:709.5px;" width="15" height="15" viewBox="0 0 15 15"><path d="M7.5 14Q2 8 2.5 6A5 5 0 0 1 12.5 6Q13 8 7.5 14Z" fill="#eee"/><circle cx="7.5" cy="6" r="2" fill="#5f7797"/></svg><svg style="left:679px;top:721px;" width="4" height="5" viewBox="0 0 4 5"><path d="M0 0L4 2.5L0 5Z" fill="#9a9a9a"/></svg><svg style="left:666px;top:763.0px;" width="15" height="15" viewBox="0 0 15 15"><circle cx="7.5" cy="7.5" r="6.2" fill="#2a2a2a" stroke="#ddd" stroke-width="1.2"/><path d="M7.5 6.5V11.5" stroke="#eee" stroke-width="1.8"/><circle cx="7.5" cy="4" r="1.1" fill="#eee"/></svg><div class="a" style="left:665px;top:781px;width:18px;height:18px;background:#5f7797;border:1px solid #2a3440"></div><svg style="left:666px;top:782.5px;" width="15" height="15" viewBox="0 0 15 15"><rect x="2" y="2" width="11" height="11" fill="#e8c020"/><path d="M7.5 2V13M2 7.5H13" stroke="#5f7797" stroke-width="1.5"/></svg><svg style="left:666px;top:801.0px;" width="15" height="15" viewBox="0 0 15 15"><path d="M1 7.5Q7.5 1 14 7.5Q7.5 14 1 7.5Z" fill="#eee"/><circle cx="7.5" cy="7.5" r="2.5" fill="#222"/><rect x="0" y="0" width="15" height="3" fill="#eee"/></svg><svg style="left:679px;top:812.5px;" width="4" height="5" viewBox="0 0 4 5"><path d="M0 0L4 2.5L0 5Z" fill="#9a9a9a"/></svg><div class="a" style="left:666px;top:411px;width:16px;height:1px;background:#2a2a2a"></div>
<div class="a" style="left:690px;top:177px;width:1027px;height:287px;background:#3c3c3c;border-left:1px solid #222"></div><div class="a" style="left:691px;top:177.4px;width:1026px;height:20.69999999999999px;background:#4e4e4e"></div><div class="t" style="left:707.4px;transform-origin:0 50%;transform:scaleX(0.93);top:183.25px;font-size:9.6px;color:#d6d6d6;">Cook Controls</div><div class="a" style="left:815.7px;top:203px;width:135.29999999999995px;height:16px;background:linear-gradient(#4e4e4e,#3f3f3f);border:1px solid #222;border-radius:1px;box-shadow:0 1px 0 #1f1f1f"></div><div class="t" style="left:883.35px;transform:translateX(-50%) scaleX(0.92);top:205.1px;font-size:9.4px;color:#d8d8d8;">Generate Static Work Items</div><div class="a" style="left:955px;top:203px;width:100px;height:16px;background:linear-gradient(#4e4e4e,#3f3f3f);border:1px solid #222;border-radius:1px;box-shadow:0 1px 0 #1f1f1f"></div><div class="t" style="left:1005.0px;transform:translateX(-50%) scaleX(0.92);top:205.1px;font-size:9.4px;color:#d8d8d8;">Cook Output Node</div><div class="a" style="left:1059.3px;top:203px;width:58.0px;height:16px;background:linear-gradient(#4e4e4e,#3f3f3f);border:1px solid #222;border-radius:1px;box-shadow:0 1px 0 #1f1f1f"></div><div class="t" style="left:1088.3px;transform:translateX(-50%) scaleX(0.92);top:205.1px;font-size:9.4px;color:#d8d8d8;">Dirty All</div><div class="a" style="left:1120.8px;top:203px;width:76.20000000000005px;height:16px;background:linear-gradient(#4e4e4e,#3f3f3f);border:1px solid #222;border-radius:1px;box-shadow:0 1px 0 #1f1f1f"></div><div class="t" style="left:1158.9px;transform:translateX(-50%) scaleX(0.92);top:205.1px;font-size:9.4px;color:#d8d8d8;">Cancel Cook</div><div class="a" style="left:691px;top:226.6px;width:1026px;height:20.099999999999994px;background:#4e4e4e"></div><div class="t" style="left:707.4px;transform-origin:0 50%;transform:scaleX(0.93);top:232.15px;font-size:9.6px;color:#d6d6d6;">Save/Load Task Graph</div><div class="a" style="left:815.8px;top:251.4px;width:92.60000000000002px;height:16.599999999999994px;background:linear-gradient(#4e4e4e,#3f3f3f);border:1px solid #222;border-radius:1px;box-shadow:0 1px 0 #1f1f1f"></div><div class="t" style="left:862.0999999999999px;transform:translateX(-50%) scaleX(0.92);top:253.8px;font-size:9.4px;color:#d8d8d8;">Save Task Graph</div><div class="a" style="left:911.9px;top:251.4px;width:94.10000000000002px;height:16.599999999999994px;background:linear-gradient(#4e4e4e,#3f3f3f);border:1px solid #222;border-radius:1px;box-shadow:0 1px 0 #1f1f1f"></div><div class="t" style="left:958.95px;transform:translateX(-50%) scaleX(0.92);top:253.8px;font-size:9.4px;color:#d8d8d8;">Load Task Graph</div><div class="t" style="right:1117px;transform-origin:100% 50%;transform:scaleX(0.955);top:276.6px;font-size:9.4px;color:#cfcfcf;">Task Graph File</div><div class="a" style="left:815.8px;top:273.4px;width:404.20000000000005px;height:16.600000000000023px;background:#131313"></div><div class="t m" style="left:818.8px;transform-origin:0 50%;transform:scaleX(0.99);top:277.97px;font-size:9.6px;color:#e4e4e4;">$HIP/$HIPNAME.taskgraph.$F.py</div><div class="a" style="left:705.6px;top:296.5px;width:11px;height:11px;background:#161616;border:1px solid #202020"></div><div class="t" style="right:1117px;transform-origin:100% 50%;transform:scaleX(0.955);top:296.8px;font-size:9.4px;color:#777;">Auto-Save Rate</div><div class="a" style="left:815.8px;top:292.7px;width:58.200000000000045px;height:17.5px;background:#333"></div><div class="t m" style="left:818.8px;transform-origin:0 50%;transform:scaleX(0.99);top:297.72px;font-size:9.6px;color:#5e5e5e;">10</div><div class="a" style="left:878px;top:300px;width:342px;height:2px;background:#303030"></div><svg style="left:880px;top:304px;" width="340" height="2" viewBox="0 0 340 2"><rect x="0" y="0" width="1" height="1" fill="#444"/><rect x="17" y="0" width="1" height="1" fill="#444"/><rect x="34" y="0" width="1" height="1" fill="#444"/><rect x="51" y="0" width="1" height="1" fill="#444"/><rect x="68" y="0" width="1" height="1" fill="#444"/><rect x="85" y="0" width="1" height="1" fill="#444"/><rect x="102" y="0" width="1" height="1" fill="#444"/><rect x="119" y="0" width="1" height="1" fill="#444"/><rect x="136" y="0" width="1" height="1" fill="#444"/><rect x="153" y="0" width="1" height="1" fill="#444"/><rect x="170" y="0" width="1" height="1" fill="#444"/><rect x="187" y="0" width="1" height="1" fill="#444"/><rect x="204" y="0" width="1" height="1" fill="#444"/><rect x="221" y="0" width="1" height="1" fill="#444"/><rect x="238" y="0" width="1" height="1" fill="#444"/><rect x="255" y="0" width="1" height="1" fill="#444"/><rect x="272" y="0" width="1" height="1" fill="#444"/><rect x="289" y="0" width="1" height="1" fill="#444"/><rect x="306" y="0" width="1" height="1" fill="#444"/><rect x="323" y="0" width="1" height="1" fill="#444"/></svg><div class="a" style="left:953px;top:294px;width:4px;height:14px;background:#444;border:1px solid #333"></div><div class="a" style="left:815.8px;top:314.6px;width:10.5px;height:10.5px;background:#161616;border:1px solid #202020"></div><svg style="left:816.8px;top:315.1px;" width="10" height="10" viewBox="0 0 10 10"><path d="M1 5L4 9L9 1" stroke="#f0f0f0" stroke-width="2.2" fill="none"/></svg><div class="t" style="left:831.6px;transform-origin:0 50%;transform:scaleX(0.92);top:315.7px;font-size:9.4px;color:#d0d0d0;">Save Graph Attributes to .hip</div><div class="a" style="left:691px;top:334px;width:1026px;height:19.30000000000001px;background:#4e4e4e"></div><div class="t" style="left:707.4px;transform-origin:0 50%;transform:scaleX(0.92);top:339.15px;font-size:9.6px;color:#e0e0e0;font-weight:bold">Work Items and Scheduling</div><div class="t" style="right:1117px;transform-origin:100% 50%;transform:scaleX(0.955);top:362.1px;font-size:9.4px;color:#cfcfcf;">Default Scheduler</div><div class="a" style="left:815.8px;top:359.4px;width:404.20000000000005px;height:16.600000000000023px;background:#131313"></div><div class="t m" style="left:818.8px;transform-origin:0 50%;transform:scaleX(0.99);top:363.97px;font-size:9.6px;color:#e4e4e4;font-weight:bold;">localscheduler</div><div class="a" style="left:705.6px;top:382.6px;width:11px;height:11px;background:#161616;border:1px solid #202020"></div><div class="t" style="right:1117px;transform-origin:100% 50%;transform:scaleX(0.955);top:382.8px;font-size:9.4px;color:#777;">Default Item Label</div><div class="a" style="left:815.8px;top:378.7px;width:404.20000000000005px;height:17.600000000000023px;background:#343434"></div><div class="t m" style="left:818.8px;transform-origin:0 50%;transform:scaleX(0.99);top:383.77px;font-size:9.6px;color:#5e5e5e;">$OS.`@pdg_index`</div><div class="a" style="left:704px;top:406px;width:516px;height:1px;background:#474747"></div><div class="t" style="right:1117px;transform-origin:100% 50%;transform:scaleX(0.955);top:420.3px;font-size:9.4px;color:#cfcfcf;">On Node Recook</div><div class="a" style="left:815.7px;top:416px;width:204.29999999999995px;height:16.80000000000001px;background:linear-gradient(#4c4c4c,#404040);border:1px solid #262626"></div><div class="a" style="left:1002.5px;top:417px;width:16.5px;height:14.800000000000011px;background:#3a3a3a;border-left:1px solid #2a2a2a"></div><div class="t" style="left:826.7px;transform-origin:0 50%;transform:scaleX(0.92);top:420.0px;font-size:9.4px;color:#d8d8d8;">Update Work Items and Invalidate Caches</div><svg style="left:1008.25px;top:418.9px;" width="6" height="11" viewBox="0 0 6 11"><path d="M3 0L6 4H0Z M3 11L6 7H0Z" fill="#aaa"/></svg><div class="t" style="right:1117px;transform-origin:100% 50%;transform:scaleX(0.955);top:441.3px;font-size:9.4px;color:#cfcfcf;">Evaluation Time</div><div class="a" style="left:815.7px;top:437.5px;width:117.19999999999993px;height:17.100000000000023px;background:linear-gradient(#4c4c4c,#404040);border:1px solid #262626"></div><div class="a" style="left:914.6px;top:438.5px;width:17.299999999999955px;height:15.100000000000023px;background:#3a3a3a;border-left:1px solid #2a2a2a"></div><div class="t" style="left:826.7px;transform-origin:0 50%;transform:scaleX(0.92);top:441.65px;font-size:9.4px;color:#d8d8d8;">Network Cook Time</div><svg style="left:920.75px;top:440.55px;" width="6" height="11" viewBox="0 0 6 11"><path d="M3 0L6 4H0Z M3 11L6 7H0Z" fill="#aaa"/></svg><div class="a" style="left:705px;top:458px;width:100px;height:4px;background:#4a4a4a"></div><div class="a" style="left:815.7px;top:459px;width:404px;height:5px;background:#333"></div><div class="a" style="left:690px;top:463px;width:1027px;height:6px;background:#2e2e2e;border-top:1px solid #222;border-bottom:1px solid #444"></div><svg style="left:1190px;top:464px;" width="8" height="4" viewBox="0 0 8 4"><path d="M4 0L8 4H0Z" fill="#777"/></svg>
<div class="a" style="left:690px;top:469px;width:1027px;height:16px;background:#202020"></div><div class="a" style="left:690px;top:469px;width:118px;height:16px;background:#3d3d3d;border-right:1px solid #1b1b1b"></div><div class="t" style="left:695px;transform-origin:0 50%;transform:scaleX(0.92);top:473.2px;font-size:8.8px;color:#cdcdcd;font-style:italic">/obj/PDG_Terrain_Pipeline1</div><svg style="left:800.5px;top:475.5px;" width="4" height="4" viewBox="0 0 4 4"><path d="M0 0L4 4M4 0L0 4" stroke="#ddd" stroke-width="1.2"/></svg><div class="a" style="left:808px;top:469px;width:61px;height:16px;background:#2c2c2c;border-right:1px solid #1b1b1b"></div><div class="t" style="left:814px;transform-origin:0 50%;transform:scaleX(0.92);top:473.2px;font-size:8.8px;color:#cdcdcd;">Tree View</div><svg style="left:862px;top:475.5px;" width="4" height="4" viewBox="0 0 4 4"><path d="M0 0L4 4M4 0L0 4" stroke="#ddd" stroke-width="1.2"/></svg><div class="a" style="left:869px;top:469px;width:85px;height:16px;background:#2c2c2c;border-right:1px solid #1b1b1b"></div><div class="t" style="left:875px;transform-origin:0 50%;transform:scaleX(0.92);top:473.2px;font-size:8.8px;color:#cdcdcd;">Material Palette</div><svg style="left:945.5px;top:475.5px;" width="4" height="4" viewBox="0 0 4 4"><path d="M0 0L4 4M4 0L0 4" stroke="#ddd" stroke-width="1.2"/></svg><div class="a" style="left:954px;top:469px;width:77px;height:16px;background:#2c2c2c;border-right:1px solid #1b1b1b"></div><div class="t" style="left:960px;transform-origin:0 50%;transform:scaleX(0.92);top:473.2px;font-size:8.8px;color:#cdcdcd;">Asset Browser</div><svg style="left:1022.5px;top:475.5px;" width="4" height="4" viewBox="0 0 4 4"><path d="M0 0L4 4M4 0L0 4" stroke="#ddd" stroke-width="1.2"/></svg><svg style="left:1037px;top:472.5px;" width="9" height="9" viewBox="0 0 9 9"><path d="M4.5 0V9M0 4.5H9" stroke="#e0e0e0" stroke-width="1.8"/></svg><div class="a" style="left:690px;top:485px;width:1027px;height:28px;background:#333;border-bottom:1px solid #1e1e1e"></div><svg style="left:698px;top:493px;" width="12" height="11" viewBox="0 0 12 11"><path d="M0 5L6 0V3H11V8H6V11Z" fill="#d8d8d8"/><path d="M9 9L11 11L9 13" fill="#999"/></svg><svg style="left:716px;top:494px;" width="11" height="9" viewBox="0 0 11 9"><path d="M11 4.5L6 0V2.5H0V6.5H6V9Z" fill="#5a5a5a"/></svg><div class="a" style="left:733px;top:490px;width:984px;height:19px;background:#373737;border:1px solid #161616;border-radius:2px;box-shadow:inset 0 1px 0 #474747"></div><svg style="left:738px;top:492px;" width="13" height="14" viewBox="0 0 13 14"><rect x="1" y="3" width="11" height="10" fill="#5d6a70"/><rect x="2" y="8" width="9" height="4" fill="#8fa0a8"/><path d="M1 3L4 0M5 3L8 0M9 3L12 0" stroke="#ccc" stroke-width="1"/></svg><div class="t" style="left:756px;transform-origin:0 50%;transform:scaleX(0.92);top:494.3px;font-size:10px;color:#d5d5d5;">obj</div><svg style="left:775px;top:490px;" width="8" height="19" viewBox="0 0 8 19"><path d="M0 0L7 9.5L0 19" stroke="#1a1a1a" fill="none" stroke-width="1.2"/></svg><svg style="left:784px;top:491px;" width="14" height="15" viewBox="0 0 14 15"><circle cx="7" cy="3" r="1.6" fill="#e09020"/><path d="M1 5L5 7H9L13 4" stroke="#ddd" stroke-width="1.5" fill="none"/><path d="M5 6H9L10 13H4Z" fill="#e8e8e8"/><path d="M4 14H10" stroke="#111" stroke-width="1.5"/><circle cx="1" cy="5" r="1" fill="#e09020"/><circle cx="13" cy="3" r="1" fill="#e09020"/></svg><div class="t" style="left:802px;transform-origin:0 50%;transform:scaleX(0.92);top:494.3px;font-size:10px;color:#d5d5d5;">PDG_Terrain_Pipeline1</div><div class="a" style="left:690px;top:513px;width:1027px;height:20px;background:#353535;border-bottom:1px solid #1e1e1e"></div><div class="a" style="left:691px;top:513px;width:5px;height:20px;background:#262626"></div><svg style="left:691.5px;top:514px;" width="4" height="4" viewBox="0 0 4 4"><path d="M2 0L4 4H0Z" fill="#ddd"/></svg><div class="t" style="left:705px;transform-origin:0 50%;transform:scaleX(0.92);top:518.0px;font-size:10px;color:#d2d2d2;">Add</div><div class="t" style="left:734px;transform-origin:0 50%;transform:scaleX(0.92);top:518.0px;font-size:10px;color:#d2d2d2;">Edit</div><div class="t" style="left:763px;transform-origin:0 50%;transform:scaleX(0.92);top:518.0px;font-size:10px;color:#d2d2d2;">Go</div><div class="t" style="left:787px;transform-origin:0 50%;transform:scaleX(0.92);top:518.0px;font-size:10px;color:#d2d2d2;">View</div><div class="t" style="left:819px;transform-origin:0 50%;transform:scaleX(0.92);top:518.0px;font-size:10px;color:#d2d2d2;">Tools</div><div class="t" style="left:855px;transform-origin:0 50%;transform:scaleX(0.92);top:518.0px;font-size:10px;color:#d2d2d2;">Layout</div><div class="t" style="left:895px;transform-origin:0 50%;transform:scaleX(0.92);top:518.0px;font-size:10px;color:#d2d2d2;">Labs</div><div class="t" style="left:925px;transform-origin:0 50%;transform:scaleX(0.92);top:518.0px;font-size:10px;color:#d2d2d2;">Help</div><div class="a" style="left:690px;top:533px;width:1027px;height:287px;background:#2e2e2e"></div><div class="a" style="left:922.4px;top:559.7px;width:224.2px;height:141px;background:#577f36;border-radius:3px;border:1px solid #6aac3c"></div><div class="a" style="left:922.4px;top:559.7px;width:224.2px;height:9px;background:#6aae3a;border-radius:3px 3px 0 0"></div><div class="a" style="left:925px;top:561.5px;width:6px;height:1.5px;background:#222"></div><div class="a" style="left:936.2px;top:576.1px;width:28.199999999999932px;height:9.100000000000023px;background:rgba(0,0,0,.35);border-radius:2px"></div><div class="a" style="left:935.2px;top:574.6px;width:28.199999999999932px;height:9.100000000000023px;background:#2161c4;border-radius:2px;box-shadow:inset 0 -1.5px 0 rgba(0,0,0,.18)"></div><svg style="left:938.2px;top:575.6px;" width="22.199999999999932" height="7.100000000000023" viewBox="0 0 22.199999999999932 7.100000000000023"><path d="M2 7.100000000000023L3 0M19.199999999999932 7.100000000000023L20.199999999999932 0" stroke="rgba(0,0,0,.25)" stroke-width=".8"/></svg><svg style="left:945.3px;top:575.6500000000001px;" width="8" height="7" viewBox="0 0 8 7"><path d="M1 6L3 0L5 5Z" fill="#3a6ad8"/><circle cx="4.5" cy="4" r="2.3" fill="#f0c020"/><circle cx="6" cy="4.5" r="1.8" fill="#c02020"/></svg><div class="a" style="left:948.0999999999999px;top:571.1px;width:2.4px;height:2.4px;background:#c8c0d0;border-radius:50%"></div><div class="a" style="left:948.0999999999999px;top:584.9000000000001px;width:2.4px;height:2.4px;background:#c8c0d0;border-radius:50%"></div><div class="t" style="left:965.4px;transform-origin:0 50%;transform:scaleX(0.9);top:569.95px;font-size:6.8px;color:rgba(110,110,110,.55);">Geometry</div><div class="t" style="left:964.9px;transform-origin:0 50%;transform:scaleX(0.88);top:575.75px;font-size:7.4px;color:#d8d8d8;">VisInput</div><div class="a" style="left:936.2px;top:600.4px;width:28.199999999999932px;height:9.100000000000023px;background:rgba(0,0,0,.35);border-radius:2px"></div><div class="a" style="left:935.2px;top:598.9px;width:28.199999999999932px;height:9.100000000000023px;background:#7ad62e;border-radius:2px;box-shadow:inset 0 -1.5px 0 rgba(0,0,0,.18)"></div><svg style="left:938.2px;top:599.9px;" width="22.199999999999932" height="7.100000000000023" viewBox="0 0 22.199999999999932 7.100000000000023"><path d="M2 7.100000000000023L3 0M19.199999999999932 7.100000000000023L20.199999999999932 0" stroke="rgba(0,0,0,.25)" stroke-width=".8"/></svg><div class="a" style="left:959.4px;top:600.4px;width:2.5px;height:6.100000000000023px;background:#2a7ae8"></div><svg style="left:945.3px;top:599.95px;" width="8" height="7" viewBox="0 0 8 7"><path d="M1 6L3 0L5 5Z" fill="#3a6ad8"/><circle cx="4.5" cy="4" r="2.3" fill="#f0c020"/><circle cx="6" cy="4.5" r="1.8" fill="#c02020"/></svg><div class="a" style="left:948.0999999999999px;top:595.4px;width:2.4px;height:2.4px;background:#c8c0d0;border-radius:50%"></div><div class="a" style="left:948.0999999999999px;top:609.2px;width:2.4px;height:2.4px;background:#c8c0d0;border-radius:50%"></div><div class="t" style="left:965.4px;transform-origin:0 50%;transform:scaleX(0.9);top:594.25px;font-size:6.8px;color:rgba(110,110,110,.55);">Geometry</div><div class="t" style="left:964.9px;transform-origin:0 50%;transform:scaleX(0.88);top:600.05px;font-size:7.4px;color:#d8d8d8;">inputMask_vis</div><div class="a" style="left:936.2px;top:620.9px;width:28.199999999999932px;height:9.200000000000045px;background:rgba(0,0,0,.35);border-radius:2px"></div><div class="a" style="left:935.2px;top:619.4px;width:28.199999999999932px;height:9.200000000000045px;background:#7ad62e;border-radius:2px;box-shadow:inset 0 -1.5px 0 rgba(0,0,0,.18)"></div><svg style="left:938.2px;top:620.4px;" width="22.199999999999932" height="7.2000000000000455" viewBox="0 0 22.199999999999932 7.2000000000000455"><path d="M2 7.2000000000000455L3 0M19.199999999999932 7.2000000000000455L20.199999999999932 0" stroke="rgba(0,0,0,.25)" stroke-width=".8"/></svg><div class="a" style="left:959.4px;top:620.9px;width:2.5px;height:6.2000000000000455px;background:#2a7ae8"></div><svg style="left:945.3px;top:620.5px;" width="8" height="7" viewBox="0 0 8 7"><path d="M1 6L3 0L5 5Z" fill="#3a6ad8"/><circle cx="4.5" cy="4" r="2.3" fill="#f0c020"/><circle cx="6" cy="4.5" r="1.8" fill="#c02020"/></svg><div class="a" style="left:948.0999999999999px;top:615.9px;width:2.4px;height:2.4px;background:#c8c0d0;border-radius:50%"></div><div class="a" style="left:948.0999999999999px;top:629.8000000000001px;width:2.4px;height:2.4px;background:#c8c0d0;border-radius:50%"></div><div class="t" style="left:965.4px;transform-origin:0 50%;transform:scaleX(0.9);top:614.8px;font-size:6.8px;color:rgba(110,110,110,.55);">Geometry</div><div class="t" style="left:964.9px;transform-origin:0 50%;transform:scaleX(0.88);top:620.6px;font-size:7.4px;color:#d8d8d8;">mountain_vis</div><div class="a" style="left:936.2px;top:641.5px;width:28.199999999999932px;height:9.299999999999955px;background:rgba(0,0,0,.35);border-radius:2px"></div><div class="a" style="left:935.2px;top:640px;width:28.199999999999932px;height:9.299999999999955px;background:#7ad62e;border-radius:2px;box-shadow:inset 0 -1.5px 0 rgba(0,0,0,.18)"></div><svg style="left:938.2px;top:641px;" width="22.199999999999932" height="7.2999999999999545" viewBox="0 0 22.199999999999932 7.2999999999999545"><path d="M2 7.2999999999999545L3 0M19.199999999999932 7.2999999999999545L20.199999999999932 0" stroke="rgba(0,0,0,.25)" stroke-width=".8"/></svg><svg style="left:945.3px;top:641.15px;" width="8" height="7" viewBox="0 0 8 7"><path d="M1 6L3 0L5 5Z" fill="#3a6ad8"/><circle cx="4.5" cy="4" r="2.3" fill="#f0c020"/><circle cx="6" cy="4.5" r="1.8" fill="#c02020"/></svg><div class="a" style="left:948.0999999999999px;top:636.5px;width:2.4px;height:2.4px;background:#c8c0d0;border-radius:50%"></div><div class="a" style="left:948.0999999999999px;top:650.5px;width:2.4px;height:2.4px;background:#c8c0d0;border-radius:50%"></div><div class="t" style="left:965.4px;transform-origin:0 50%;transform:scaleX(0.9);top:635.45px;font-size:6.8px;color:rgba(110,110,110,.55);">Geometry</div><div class="t" style="left:964.9px;transform-origin:0 50%;transform:scaleX(0.88);top:641.25px;font-size:7.4px;color:#d8d8d8;">forest_vis</div><div class="a" style="left:936.2px;top:664.9px;width:28.199999999999932px;height:9.100000000000023px;background:rgba(0,0,0,.35);border-radius:2px"></div><div class="a" style="left:935.2px;top:663.4px;width:28.199999999999932px;height:9.100000000000023px;background:#7ad62e;border-radius:2px;box-shadow:inset 0 -1.5px 0 rgba(0,0,0,.18)"></div><svg style="left:938.2px;top:664.4px;" width="22.199999999999932" height="7.100000000000023" viewBox="0 0 22.199999999999932 7.100000000000023"><path d="M2 7.100000000000023L3 0M19.199999999999932 7.100000000000023L20.199999999999932 0" stroke="rgba(0,0,0,.25)" stroke-width=".8"/></svg><svg style="left:945.3px;top:664.45px;" width="8" height="7" viewBox="0 0 8 7"><path d="M1 6L3 0L5 5Z" fill="#3a6ad8"/><circle cx="4.5" cy="4" r="2.3" fill="#f0c020"/><circle cx="6" cy="4.5" r="1.8" fill="#c02020"/></svg><div class="a" style="left:948.0999999999999px;top:659.9px;width:2.4px;height:2.4px;background:#c8c0d0;border-radius:50%"></div><div class="a" style="left:948.0999999999999px;top:673.7px;width:2.4px;height:2.4px;background:#c8c0d0;border-radius:50%"></div><div class="t" style="left:965.4px;transform-origin:0 50%;transform:scaleX(0.9);top:658.75px;font-size:6.8px;color:rgba(110,110,110,.55);">Geometry</div><div class="t" style="left:964.9px;transform-origin:0 50%;transform:scaleX(0.88);top:664.55px;font-size:7.4px;color:#d8d8d8;">water_plane</div><div class="a" style="left:936.2px;top:681.2px;width:28.199999999999932px;height:9.099999999999909px;background:rgba(0,0,0,.35);border-radius:2px"></div><div class="a" style="left:935.2px;top:679.7px;width:28.199999999999932px;height:9.099999999999909px;background:#7ad62e;border-radius:2px;box-shadow:inset 0 -1.5px 0 rgba(0,0,0,.18)"></div><svg style="left:938.2px;top:680.7px;" width="22.199999999999932" height="7.099999999999909" viewBox="0 0 22.199999999999932 7.099999999999909"><path d="M2 7.099999999999909L3 0M19.199999999999932 7.099999999999909L20.199999999999932 0" stroke="rgba(0,0,0,.25)" stroke-width=".8"/></svg><div class="a" style="left:936.7px;top:681.2px;width:2px;height:6.099999999999909px;background:#d8f020"></div><div class="a" style="left:959.4px;top:681.2px;width:2.5px;height:6.099999999999909px;background:#2a7ae8"></div><svg style="left:945.3px;top:680.75px;" width="8" height="7" viewBox="0 0 8 7"><path d="M1 6L3 0L5 5Z" fill="#3a6ad8"/><circle cx="4.5" cy="4" r="2.3" fill="#f0c020"/><circle cx="6" cy="4.5" r="1.8" fill="#c02020"/></svg><div class="a" style="left:948.0999999999999px;top:676.2px;width:2.4px;height:2.4px;background:#c8c0d0;border-radius:50%"></div><div class="a" style="left:948.0999999999999px;top:690.0px;width:2.4px;height:2.4px;background:#c8c0d0;border-radius:50%"></div><div class="t" style="left:965.4px;transform-origin:0 50%;transform:scaleX(0.9);top:675.05px;font-size:6.8px;color:rgba(110,110,110,.55);">Geometry</div><div class="t" style="left:964.9px;transform-origin:0 50%;transform:scaleX(0.88);top:680.85px;font-size:7.4px;color:#d8d8d8;">societies</div><div class="a" style="left:864.2px;top:637.5px;width:29.0px;height:9.799999999999955px;background:rgba(0,0,0,.35);border-radius:2px"></div><div class="a" style="left:863.2px;top:636px;width:29.0px;height:9.799999999999955px;background:#2161c4;border-radius:2px;box-shadow:inset 0 -1.5px 0 rgba(0,0,0,.18)"></div><svg style="left:866.2px;top:637px;" width="23.0" height="7.7999999999999545" viewBox="0 0 23.0 7.7999999999999545"><path d="M2 7.7999999999999545L3 0M20.0 7.7999999999999545L21.0 0" stroke="rgba(0,0,0,.25)" stroke-width=".8"/></svg><div class="a" style="left:888.2px;top:637.5px;width:2.5px;height:6.7999999999999545px;background:#4aa0f0"></div><svg style="left:873.7px;top:637.4px;" width="8" height="7" viewBox="0 0 8 7"><path d="M1 6L3 0L5 5Z" fill="#3a6ad8"/><circle cx="4.5" cy="4" r="2.3" fill="#f0c020"/><circle cx="6" cy="4.5" r="1.8" fill="#c02020"/></svg><div class="a" style="left:876.5px;top:632.5px;width:2.4px;height:2.4px;background:#c8c0d0;border-radius:50%"></div><div class="a" style="left:876.5px;top:647.0px;width:2.4px;height:2.4px;background:#c8c0d0;border-radius:50%"></div><div class="t" style="left:894.2px;transform-origin:0 50%;transform:scaleX(0.9);top:631.7px;font-size:6.8px;color:rgba(110,110,110,.55);">Geometry</div><div class="t" style="left:893.7px;transform-origin:0 50%;transform:scaleX(0.88);top:637.5px;font-size:7.4px;color:#d8d8d8;">bounds</div><div class="a" style="left:864.2px;top:664.9px;width:29.0px;height:9.600000000000023px;background:rgba(0,0,0,.35);border-radius:2px"></div><div class="a" style="left:863.2px;top:663.4px;width:29.0px;height:9.600000000000023px;background:#2161c4;border-radius:2px;box-shadow:inset 0 -1.5px 0 rgba(0,0,0,.18)"></div><svg style="left:866.2px;top:664.4px;" width="23.0" height="7.600000000000023" viewBox="0 0 23.0 7.600000000000023"><path d="M2 7.600000000000023L3 0M20.0 7.600000000000023L21.0 0" stroke="rgba(0,0,0,.25)" stroke-width=".8"/></svg><svg style="left:873.7px;top:664.7px;" width="8" height="7" viewBox="0 0 8 7"><path d="M1 6L3 0L5 5Z" fill="#3a6ad8"/><circle cx="4.5" cy="4" r="2.3" fill="#f0c020"/><circle cx="6" cy="4.5" r="1.8" fill="#c02020"/></svg><div class="a" style="left:876.5px;top:659.9px;width:2.4px;height:2.4px;background:#c8c0d0;border-radius:50%"></div><div class="a" style="left:876.5px;top:674.2px;width:2.4px;height:2.4px;background:#c8c0d0;border-radius:50%"></div><div class="t" style="left:894.2px;transform-origin:0 50%;transform:scaleX(0.9);top:659.0px;font-size:6.8px;color:rgba(110,110,110,.55);">Geometry</div><div class="t" style="left:893.7px;transform-origin:0 50%;transform:scaleX(0.88);top:664.8px;font-size:7.4px;color:#d8d8d8;">MapInput</div><div class="a" style="left:1087.9px;top:599.8px;width:29.0px;height:9.700000000000045px;background:rgba(0,0,0,.35);border-radius:2px"></div><div class="a" style="left:1086.9px;top:598.3px;width:29.0px;height:9.700000000000045px;background:#e81212;border-radius:2px;box-shadow:inset 0 -1.5px 0 rgba(0,0,0,.18)"></div><svg style="left:1089.9px;top:599.3px;" width="23.0" height="7.7000000000000455" viewBox="0 0 23.0 7.7000000000000455"><path d="M2 7.7000000000000455L3 0M20.0 7.7000000000000455L21.0 0" stroke="rgba(0,0,0,.25)" stroke-width=".8"/></svg><div class="a" style="left:1088.4px;top:599.8px;width:2px;height:6.7000000000000455px;background:#b0f030"></div><div class="a" style="left:1111.9px;top:599.8px;width:2.5px;height:6.7000000000000455px;background:#2a8af0"></div><svg style="left:1097.4px;top:599.65px;" width="8" height="7" viewBox="0 0 8 7"><path d="M1 6L3 0L5 5Z" fill="#3a6ad8"/><circle cx="4.5" cy="4" r="2.3" fill="#f0c020"/><circle cx="6" cy="4.5" r="1.8" fill="#c02020"/></svg><div class="a" style="left:1100.2px;top:594.8px;width:2.4px;height:2.4px;background:#c8c0d0;border-radius:50%"></div><div class="a" style="left:1100.2px;top:609.2px;width:2.4px;height:2.4px;background:#c8c0d0;border-radius:50%"></div><div class="t" style="left:1117.9px;transform-origin:0 50%;transform:scaleX(0.9);top:593.95px;font-size:6.8px;color:rgba(110,110,110,.55);">Geometry</div><div class="t" style="left:1117.4px;transform-origin:0 50%;transform:scaleX(0.88);top:599.75px;font-size:7.4px;color:#d8d8d8;">unityAxis</div><div class="a" style="left:1013.6px;top:627.0px;width:28.699999999999932px;height:9.700000000000045px;background:rgba(0,0,0,.35);border-radius:2px"></div><div class="a" style="left:1012.6px;top:625.5px;width:28.699999999999932px;height:9.700000000000045px;background:#7ad62e;border-radius:2px;box-shadow:inset 0 -1.5px 0 rgba(0,0,0,.18)"></div><svg style="left:1015.6px;top:626.5px;" width="22.699999999999932" height="7.7000000000000455" viewBox="0 0 22.699999999999932 7.7000000000000455"><path d="M2 7.7000000000000455L3 0M19.699999999999932 7.7000000000000455L20.699999999999932 0" stroke="rgba(0,0,0,.25)" stroke-width=".8"/></svg><div class="a" style="left:1014.1px;top:627.0px;width:2px;height:6.7000000000000455px;background:#d8f020"></div><div class="a" style="left:1037.3px;top:627.0px;width:2.5px;height:6.7000000000000455px;background:#2a7ae8"></div><svg style="left:1022.95px;top:626.85px;" width="8" height="7" viewBox="0 0 8 7"><path d="M1 6L3 0L5 5Z" fill="#3a6ad8"/><circle cx="4.5" cy="4" r="2.3" fill="#f0c020"/><circle cx="6" cy="4.5" r="1.8" fill="#c02020"/></svg><div class="a" style="left:1025.75px;top:622.0px;width:2.4px;height:2.4px;background:#c8c0d0;border-radius:50%"></div><div class="a" style="left:1025.75px;top:636.4000000000001px;width:2.4px;height:2.4px;background:#c8c0d0;border-radius:50%"></div><div class="t" style="left:1043.3px;transform-origin:0 50%;transform:scaleX(0.9);top:621.15px;font-size:6.8px;color:rgba(110,110,110,.55);">Geometry</div><div class="t" style="left:1042.8px;transform-origin:0 50%;transform:scaleX(0.88);top:626.95px;font-size:7.4px;color:#d8d8d8;">vis_shrubs</div><div class="a" style="left:1087.9px;top:634.0px;width:28.09999999999991px;height:9.700000000000045px;background:rgba(0,0,0,.35);border-radius:2px"></div><div class="a" style="left:1086.9px;top:632.5px;width:28.09999999999991px;height:9.700000000000045px;background:#7ad62e;border-radius:2px;box-shadow:inset 0 -1.5px 0 rgba(0,0,0,.18)"></div><svg style="left:1089.9px;top:633.5px;" width="22.09999999999991" height="7.7000000000000455" viewBox="0 0 22.09999999999991 7.7000000000000455"><path d="M2 7.7000000000000455L3 0M19.09999999999991 7.7000000000000455L20.09999999999991 0" stroke="rgba(0,0,0,.25)" stroke-width=".8"/></svg><svg style="left:1096.95px;top:633.85px;" width="8" height="7" viewBox="0 0 8 7"><path d="M1 6L3 0L5 5Z" fill="#3a6ad8"/><circle cx="4.5" cy="4" r="2.3" fill="#f0c020"/><circle cx="6" cy="4.5" r="1.8" fill="#c02020"/></svg><div class="a" style="left:1099.75px;top:629.0px;width:2.4px;height:2.4px;background:#c8c0d0;border-radius:50%"></div><div class="a" style="left:1099.75px;top:643.4000000000001px;width:2.4px;height:2.4px;background:#c8c0d0;border-radius:50%"></div><div class="t" style="left:1117px;transform-origin:0 50%;transform:scaleX(0.9);top:628.15px;font-size:6.8px;color:rgba(110,110,110,.55);">Geometry</div><div class="t" style="left:1116.5px;transform-origin:0 50%;transform:scaleX(0.88);top:633.95px;font-size:7.4px;color:#d8d8d8;">teleportation_vis</div><div class="a" style="left:936.3px;top:719.1px;width:28.90000000000009px;height:10.5px;background:rgba(0,0,0,.35);border-radius:2px"></div><div class="a" style="left:935.3px;top:717.6px;width:28.90000000000009px;height:10.5px;background:#e060d0;border-radius:2px;box-shadow:inset 0 -1.5px 0 rgba(0,0,0,.18)"></div><svg style="left:938.3px;top:718.6px;" width="22.90000000000009" height="8.5" viewBox="0 0 22.90000000000009 8.5"><path d="M2 8.5L3 0M19.90000000000009 8.5L20.90000000000009 0" stroke="rgba(0,0,0,.25)" stroke-width=".8"/></svg><div class="a" style="left:936.8px;top:719.1px;width:2px;height:7.5px;background:#9ae030"></div><svg style="left:945.75px;top:719.35px;" width="8" height="7" viewBox="0 0 8 7"><path d="M1 6L3 0L5 5Z" fill="#3a6ad8"/><circle cx="4.5" cy="4" r="2.3" fill="#f0c020"/><circle cx="6" cy="4.5" r="1.8" fill="#c02020"/></svg><div class="a" style="left:948.55px;top:714.1px;width:2.4px;height:2.4px;background:#c8c0d0;border-radius:50%"></div><div class="a" style="left:948.55px;top:729.3000000000001px;width:2.4px;height:2.4px;background:#c8c0d0;border-radius:50%"></div><div class="t" style="left:966.2px;transform-origin:0 50%;transform:scaleX(0.9);top:713.65px;font-size:6.8px;color:rgba(110,110,110,.55);">Geometry</div><div class="t" style="left:965.7px;transform-origin:0 50%;transform:scaleX(0.88);top:719.45px;font-size:7.4px;color:#d8d8d8;">dev</div><div class="a" style="left:864.3px;top:752.0px;width:29.40000000000009px;height:11.0px;background:rgba(0,0,0,.35);border-radius:2px"></div><div class="a" style="left:863.3px;top:750.5px;width:29.40000000000009px;height:11.0px;background:#6cd830;border-radius:2px;box-shadow:inset 0 -1.5px 0 rgba(0,0,0,.18)"></div><svg style="left:866.3px;top:751.5px;" width="23.40000000000009" height="9.0" viewBox="0 0 23.40000000000009 9.0"><path d="M2 9.0L3 0M20.40000000000009 9.0L21.40000000000009 0" stroke="rgba(0,0,0,.25)" stroke-width=".8"/></svg><div class="a" style="left:864.8px;top:752.0px;width:2px;height:8.0px;background:#d8f020"></div><svg style="left:874.0px;top:752.5px;" width="8" height="7" viewBox="0 0 8 7"><path d="M1 6L3 0L5 5Z" fill="#3a6ad8"/><circle cx="4.5" cy="4" r="2.3" fill="#f0c020"/><circle cx="6" cy="4.5" r="1.8" fill="#c02020"/></svg><div class="a" style="left:876.8px;top:747.0px;width:2.4px;height:2.4px;background:#c8c0d0;border-radius:50%"></div><div class="a" style="left:876.8px;top:762.7px;width:2.4px;height:2.4px;background:#c8c0d0;border-radius:50%"></div><div class="t" style="left:894.7px;transform-origin:0 50%;transform:scaleX(0.9);top:746.8px;font-size:6.8px;color:rgba(110,110,110,.55);">Geometry</div><div class="t" style="left:894.2px;transform-origin:0 50%;transform:scaleX(0.88);top:752.6px;font-size:7.4px;color:#d8d8d8;">PDG_previs</div><div class="a" style="left:936.3px;top:752.0px;width:28.90000000000009px;height:11.0px;background:rgba(0,0,0,.35);border-radius:2px"></div><div class="a" style="left:935.3px;top:750.5px;width:28.90000000000009px;height:11.0px;background:#dcdcdc;border-radius:2px;box-shadow:inset 0 -1.5px 0 rgba(0,0,0,.18)"></div><svg style="left:938.3px;top:751.5px;" width="22.90000000000009" height="9.0" viewBox="0 0 22.90000000000009 9.0"><path d="M2 9.0L3 0M19.90000000000009 9.0L20.90000000000009 0" stroke="rgba(0,0,0,.25)" stroke-width=".8"/></svg><div class="a" style="left:936.8px;top:752.0px;width:2px;height:8.0px;background:#9ae030"></div><svg style="left:945.75px;top:752.5px;" width="8" height="7" viewBox="0 0 8 7"><path d="M1 6L3 0L5 5Z" fill="#3a6ad8"/><circle cx="4.5" cy="4" r="2.3" fill="#f0c020"/><circle cx="6" cy="4.5" r="1.8" fill="#c02020"/></svg><div class="a" style="left:948.55px;top:747.0px;width:2.4px;height:2.4px;background:#c8c0d0;border-radius:50%"></div><div class="a" style="left:948.55px;top:762.7px;width:2.4px;height:2.4px;background:#c8c0d0;border-radius:50%"></div><div class="t" style="left:965.7px;transform-origin:0 50%;transform:scaleX(0.88);top:752.6px;font-size:7.4px;color:#d8d8d8;">geo1</div><div class="a" style="left:862.4px;top:714.5px;width:30.3px;height:14.9px;background:#f8e400;border:2px solid #e0a0b0;border-radius:3.5px"></div><div class="a" style="left:864px;top:723.5px;width:27px;height:1.8px;background:#111"></div><svg style="left:873px;top:716px;" width="9" height="7" viewBox="0 0 9 7"><rect x="2" y="0" width="5" height="5" fill="#222"/><ellipse cx="4.5" cy="5" rx="4.5" ry="1.5" fill="#333"/><path d="M2 4H7" stroke="#c84" stroke-width="1"/></svg><div class="t" style="left:894.5px;transform-origin:0 50%;transform:scaleX(0.88);top:716.8px;font-size:7.4px;color:#d8d8d8;">TOP_NET</div><div class="a" style="left:844.5px;top:714.7px;width:11px;height:11px;background:#252525;border-radius:50%"></div><div class="a" style="left:847.5px;top:719.8px;width:5px;height:1px;background:#556"></div><svg style="left:915.86px;top:565.7px;" width="27.079999999999952" height="24.799999999999955" viewBox="0 0 27.079999999999952 24.799999999999955"><path d="M13.539999999999976 1L1 23.799999999999955" stroke="#e05050" stroke-width="1.6" fill="none"/><path d="M13.539999999999976 1L26.079999999999952 23.799999999999955H1" stroke="#c8944a" stroke-width="1.6" fill="none"/><path d="M11.039999999999976 10.25999999999998H16.039999999999978V14.81999999999997H17.539999999999978L13.539999999999976 19.37999999999996L9.539999999999976 14.81999999999997H11.039999999999976Z" fill="#d49a48"/></svg><svg style="left:915.3649999999999px;top:610.5px;" width="28.070000000000054" height="25.700000000000045" viewBox="0 0 28.070000000000054 25.700000000000045"><path d="M14.035000000000027 1L1 24.700000000000045" stroke="#e05050" stroke-width="1.6" fill="none"/><path d="M14.035000000000027 1L27.070000000000054 24.700000000000045H1" stroke="#c8944a" stroke-width="1.6" fill="none"/><path d="M11.535000000000027 10.66500000000002H16.535000000000025V15.40500000000003H18.035000000000025L14.035000000000027 20.14500000000004L10.035000000000027 15.40500000000003H11.535000000000027Z" fill="#d49a48"/></svg><svg style="left:915.3649999999999px;top:670.3px;" width="28.070000000000054" height="25.700000000000045" viewBox="0 0 28.070000000000054 25.700000000000045"><path d="M14.035000000000027 1L1 24.700000000000045" stroke="#e05050" stroke-width="1.6" fill="none"/><path d="M14.035000000000027 1L27.070000000000054 24.700000000000045H1" stroke="#c8944a" stroke-width="1.6" fill="none"/><path d="M11.535000000000027 10.66500000000002H16.535000000000025V15.40500000000003H18.035000000000025L14.035000000000027 20.14500000000004L10.035000000000027 15.40500000000003H11.535000000000027Z" fill="#d49a48"/></svg><svg style="left:993.2649999999999px;top:615.8px;" width="28.070000000000054" height="25.700000000000045" viewBox="0 0 28.070000000000054 25.700000000000045"><path d="M14.035000000000027 1L1 24.700000000000045" stroke="#e05050" stroke-width="1.6" fill="none"/><path d="M14.035000000000027 1L27.070000000000054 24.700000000000045H1" stroke="#c8944a" stroke-width="1.6" fill="none"/><path d="M11.535000000000027 10.66500000000002H16.535000000000025V15.40500000000003H18.035000000000025L14.035000000000027 20.14500000000004L10.035000000000027 15.40500000000003H11.535000000000027Z" fill="#d49a48"/></svg><div class="a" style="left:1086.7px;top:750.4px;width:100.5px;height:70px;background:#c6be6e;border-radius:3px 3px 0 0"></div><div class="a" style="left:1086.7px;top:750.4px;width:100.5px;height:8px;background:#e8e07a;border-radius:3px 3px 0 0"></div><div class="a" style="left:1090px;top:752.5px;width:4px;height:1px;background:#333"></div><div class="t" style="left:1088.3px;transform-origin:0 50%;transform:scaleX(0.86);top:760.4px;font-size:6.6px;color:#1e1e1e;">todo :</div><div class="t" style="left:1088.3px;transform-origin:0 50%;transform:scaleX(0.86);top:768.7px;font-size:6.6px;color:#1e1e1e;">- toggle off duplication visualisation</div><div class="t" style="left:1088.3px;transform-origin:0 50%;transform:scaleX(0.86);top:776.2px;font-size:6.6px;color:#1e1e1e;">when duplication is off</div><div class="t" style="left:1088.3px;transform-origin:0 50%;transform:scaleX(0.86);top:783.7px;font-size:6.6px;color:#1e1e1e;">- visualise actual current map instead</div><div class="t" style="left:1088.3px;transform-origin:0 50%;transform:scaleX(0.86);top:791.2px;font-size:6.6px;color:#1e1e1e;">of .psd ?</div><div class="t" style="left:1088.3px;transform-origin:0 50%;transform:scaleX(0.86);top:798.7px;font-size:6.6px;color:#1e1e1e;">- houdini engine ?</div><div class="a" style="left:386px;top:822px;width:21px;height:4px;border:1px solid #ddd;border-bottom:none;border-radius:2px 2px 0 0"></div><div class="a" style="left:0;top:0;width:1920px;height:825px;overflow:hidden"><div class="t" style="left:497px;transform:translateX(-50%) scaleX(0.9);top:823.0px;font-size:7px;color:#888;">24</div><div class="t" style="left:612px;transform:translateX(-50%) scaleX(0.9);top:823.0px;font-size:7px;color:#888;">48</div><div class="t" style="left:733px;transform:translateX(-50%) scaleX(0.9);top:823.0px;font-size:7px;color:#888;">72</div><div class="t" style="left:848px;transform:translateX(-50%) scaleX(0.9);top:823.0px;font-size:7px;color:#888;">96</div><div class="t" style="left:966px;transform:translateX(-50%) scaleX(0.9);top:823.0px;font-size:7px;color:#888;">120</div><div class="t" style="left:1085px;transform:translateX(-50%) scaleX(0.9);top:823.0px;font-size:7px;color:#888;">144</div><div class="t" style="left:1200px;transform:translateX(-50%) scaleX(0.9);top:823.0px;font-size:7px;color:#888;">168</div><div class="t" style="left:1316px;transform:translateX(-50%) scaleX(0.9);top:823.0px;font-size:7px;color:#888;">192</div><div class="t" style="left:1432px;transform:translateX(-50%) scaleX(0.9);top:823.0px;font-size:7px;color:#888;">216</div><div class="t" style="left:1545px;transform:translateX(-50%) scaleX(0.9);top:823.0px;font-size:7px;color:#888;">240</div></div>
<div class="a" style="left:1219px;top:173px;width:498px;height:577px;background:#303030;border:1px solid #222;border-radius:6px 0 0 6px"></div><div class="a" style="left:1220px;top:174.4px;width:497px;height:24px;background:#f3f3f3;border-radius:5px 0 0 0"></div><svg style="left:1226px;top:178px;" width="16" height="16" viewBox="0 0 16 16"><rect width="16" height="16" fill="#f05a1a"/><path d="M8 13A5 5 0 1 1 13 8" stroke="#fff" stroke-width="1.6" fill="none"/><path d="M8 10.5A2.5 2.5 0 1 1 10.5 8" stroke="#fff" stroke-width="1.4" fill="none"/><circle cx="4" cy="12" r="1.2" fill="#fff"/></svg><div class="t" style="left:1247px;transform-origin:0 50%;transform:scaleX(0.93);top:181.4px;font-size:10.2px;color:#8a8a8a;">Houdini Core - /obj/PDG_Terrain_Pipeline1</div><div class="a" style="left:1638.5px;top:186px;width:10px;height:1px;background:#777"></div><div class="a" style="left:1676px;top:181.5px;width:9px;height:9px;border:1px solid #777"></div><svg style="left:1711px;top:181px;" width="6" height="10" viewBox="0 0 6 10"><path d="M0 0L6 6M0 10L6 4" stroke="#777" stroke-width="1"/></svg><div class="a" style="left:1220px;top:198.3px;width:497px;height:552px;background:#3a3a3a;border-radius:0 0 0 6px;box-shadow:inset 1px 0 0 #2a2a2a, inset 0 -1px 0 #2a2a2a"></div><div class="a" style="left:1221px;top:198.3px;width:496px;height:23px;background:#2e2e2e"></div><div class="a" style="left:1222px;top:200px;width:110px;height:20px;background:#353535"></div><svg style="left:1224px;top:203px;" width="14" height="15" viewBox="0 0 14 15"><circle cx="7" cy="3" r="1.6" fill="#e09020"/><path d="M1 5L5 7H9L13 4" stroke="#ddd" stroke-width="1.5" fill="none"/><path d="M5 6H9L10 13H4Z" fill="#e8e8e8"/><path d="M4 14H10" stroke="#111" stroke-width="1.5"/></svg><svg style="left:1232px;top:216px;" width="6" height="4" viewBox="0 0 6 4"><path d="M0 0H6L3 4Z" fill="#aaa"/></svg><div class="t" style="left:1242px;transform-origin:0 50%;transform:scaleX(0.9);top:206.7px;font-size:9.4px;color:#e4e4e4;font-weight:bold">PDG Terrain Pipeline</div><div class="a" style="left:1332.8px;top:203.4px;width:295px;height:17.6px;background:#111"></div><div class="t m" style="left:1335.3px;transform-origin:0 50%;transform:scaleX(0.99);top:208.27px;font-size:9.6px;color:#e4e4e4;">PDG_Terrain_Pipeline1</div><svg style="left:1633px;top:204px;" width="15" height="15" viewBox="0 0 15 15"><circle cx="7" cy="7" r="3.2" fill="none" stroke="#eee" stroke-width="2"/><path d="M7 0V14M0 7H14M2 2L12 12M12 2L2 12" stroke="#eee" stroke-width="1.6"/><circle cx="7" cy="7" r="1.3" fill="#2e2e2e"/><path d="M11 13H15L13 15Z" fill="#999"/></svg><svg style="left:1654px;top:205px;" width="14" height="13" viewBox="0 0 14 13"><path d="M3 1H6L5 5H9L10 1H13L10.5 12H7.5L8.5 7.5H4.5L3.5 12H0.5Z" fill="#12225a" stroke="#e8e8e8" stroke-width="1"/><path d="M10 12H14L12 14Z" fill="#999"/></svg><svg style="left:1676px;top:204px;" width="14" height="14" viewBox="0 0 14 14"><circle cx="5.5" cy="5.5" r="4.3" fill="none" stroke="#eee" stroke-width="1.6"/><path d="M8.5 8.5L13 13" stroke="#eee" stroke-width="2"/></svg><svg style="left:1697px;top:204px;" width="14" height="14" viewBox="0 0 14 14"><circle cx="7" cy="7" r="6" fill="none" stroke="#eee" stroke-width="1.4"/><path d="M7 6V11" stroke="#eee" stroke-width="1.8"/><circle cx="7" cy="3.8" r="1" fill="#eee"/></svg><div class="t" style="right:587.2px;transform-origin:100% 50%;transform:scaleX(0.97);top:230.7px;font-size:9.2px;color:#c8c8c8;">CPU Cores</div><div class="a" style="left:1345.5px;top:226.7px;width:164.5px;height:15.9px;background:linear-gradient(#4c4c4c,#404040);border:1px solid #262626"></div><div class="a" style="left:1492.4px;top:227.7px;width:17px;height:14px;background:#3a3a3a"></div><svg style="left:1498px;top:229px;" width="6" height="11" viewBox="0 0 6 11"><path d="M3 0L6 4H0Z M3 11L6 7H0Z" fill="#999"/></svg><div class="t" style="left:1357.3px;transform-origin:0 50%;transform:scaleX(0.88);top:230.4px;font-size:9.2px;color:#e0e0e0;font-weight:bold">Custom Slot Count</div><div class="a" style="left:1512.8px;top:227.5px;width:58.100000000000136px;height:16.5px;background:#131313;overflow:hidden"></div><div class="a" style="left:1512.8px;top:227.5px;width:58.100000000000136px;height:16.5px;overflow:hidden"><div class="t m" style="left:3px;transform-origin:0 50%;transform:scaleX(0.99);top:4.52px;font-size:9.6px;color:#e4e4e4;font-weight:bold;">28</div></div><div class="a" style="left:1575px;top:234.5px;width:136px;height:2.5px;background:#2a6ad0"></div><svg style="left:1576px;top:239px;" width="135" height="2" viewBox="0 0 135 2"><rect x="0.0" y="0" width="1" height="1.5" fill="#888"/><rect x="9.6" y="0" width="1" height="1.5" fill="#888"/><rect x="19.2" y="0" width="1" height="1.5" fill="#888"/><rect x="28.8" y="0" width="1" height="1.5" fill="#888"/><rect x="38.4" y="0" width="1" height="1.5" fill="#888"/><rect x="48.0" y="0" width="1" height="1.5" fill="#888"/><rect x="57.6" y="0" width="1" height="1.5" fill="#888"/><rect x="67.2" y="0" width="1" height="1.5" fill="#888"/><rect x="76.8" y="0" width="1" height="1.5" fill="#888"/><rect x="86.4" y="0" width="1" height="1.5" fill="#888"/><rect x="96.0" y="0" width="1" height="1.5" fill="#888"/><rect x="105.6" y="0" width="1" height="1.5" fill="#888"/><rect x="115.2" y="0" width="1" height="1.5" fill="#888"/><rect x="124.8" y="0" width="1" height="1.5" fill="#888"/><rect x="134.4" y="0" width="1" height="1.5" fill="#888"/></svg><div class="a" style="left:1709.5px;top:227px;width:4px;height:17px;background:#666;border:1px solid #333"></div><div class="t" style="right:587.2px;transform-origin:100% 50%;transform:scaleX(0.97);top:251.4px;font-size:9.2px;color:#c8c8c8;">Parameter Preset Path</div><div class="a" style="left:1345.5px;top:248px;width:133.5px;height:17.30000000000001px;background:#131313;overflow:hidden"></div><div class="a" style="left:1345.5px;top:248px;width:133.5px;height:17.30000000000001px;overflow:hidden"><div class="t m" style="left:3px;transform-origin:0 50%;transform:scaleX(0.99);top:4.92px;font-size:9.6px;color:#e4e4e4;">$KLANG_ENV/data/presets</div></div><div class="a" style="left:1481px;top:248px;width:15px;height:16px;background:#333;border:1px solid #262626"></div><svg style="left:1485.5px;top:254.0px;" width="6" height="5" viewBox="0 0 6 5"><path d="M0 0H6L3 5Z" fill="#999"/></svg><svg style="left:1503.4px;top:249px;" width="12" height="14" viewBox="0 0 12 14"><rect x="0" y="1" width="7" height="10" fill="#bbb"/><path d="M2 1V11" stroke="#777"/><path d="M5 5L11 10H8L9 13L7 13L6 10L4 12Z" fill="#eee" stroke="#222" stroke-width=".6"/></svg><div class="a" style="left:1519px;top:247px;width:117.79999999999995px;height:16.899999999999977px;background:linear-gradient(#4e4e4e,#3f3f3f);border:1px solid #222;box-shadow:0 1px 0 #1f1f1f"></div><div class="t" style="left:1577.9px;transform:translateX(-50%) scaleX(0.92);top:250.05px;font-size:9.2px;color:#d8d8d8;">Load Parameter Preset</div><div class="a" style="left:1640.7px;top:247px;width:73.09999999999991px;height:16.899999999999977px;background:linear-gradient(#4e4e4e,#3f3f3f);border:1px solid #222;box-shadow:0 1px 0 #1f1f1f"></div><div class="t" style="left:1677.25px;transform:translateX(-50%) scaleX(0.92);top:250.05px;font-size:9.2px;color:#d8d8d8;">Save Preset</div><div class="a" style="left:1221px;top:284px;width:496px;height:1px;background:#2a2a2a"></div><div class="a" style="left:1223px;top:268.3px;width:27px;height:17px;background:#404040;border:1px solid #262626;border-bottom:none"></div><div class="t" style="left:1236.5px;transform:translateX(-50%) scaleX(0.88);top:272.7px;font-size:9.2px;color:#d8d8d8;font-weight:bold">Dirs</div><div class="a" style="left:1250px;top:268.3px;width:44.59999999999991px;height:16px;background:#333;border:1px solid #262626;border-bottom:none"></div><div class="t" style="left:1272.3px;transform:translateX(-50%) scaleX(0.88);top:272.7px;font-size:9.2px;color:#d8d8d8;font-weight:bold">bounds</div><div class="a" style="left:1294.6px;top:268.3px;width:59.80000000000018px;height:16px;background:#333;border:1px solid #262626;border-bottom:none"></div><div class="t" style="left:1324.5px;transform:translateX(-50%) scaleX(0.88);top:272.7px;font-size:9.2px;color:#d8d8d8;font-weight:bold">duplication</div><div class="a" style="left:1354.4px;top:268.3px;width:44.59999999999991px;height:16px;background:#333;border:1px solid #262626;border-bottom:none"></div><div class="t" style="left:1376.7px;transform:translateX(-50%) scaleX(0.88);top:272.7px;font-size:9.2px;color:#d8d8d8;font-weight:bold">Terrain</div><div class="a" style="left:1227.9px;top:285px;width:489px;height:388px;background:#3c3c3c;border-left:1px solid #2c2c2c;border-bottom:1px solid #2c2c2c"></div><div class="a" style="left:1229px;top:289.4px;width:488px;height:20.6px;background:#4c4c4c"></div><div class="t" style="left:1243.6px;transform-origin:0 50%;transform:scaleX(0.9);top:295.3px;font-size:9.2px;color:#dcdcdc;font-weight:bold">Output Directory</div><div class="t" style="right:586.5999999999999px;transform-origin:100% 50%;transform:scaleX(0.97);top:318.9px;font-size:9.2px;color:#c8c8c8;">Working Dir pattern</div><div class="a" style="left:1345.5px;top:315.8px;width:332.70000000000005px;height:16.599999999999966px;background:#131313;overflow:hidden"></div><div class="a" style="left:1345.5px;top:315.8px;width:332.70000000000005px;height:16.599999999999966px;overflow:hidden"><div class="t m" style="left:3px;transform-origin:0 50%;transform:scaleX(0.99);top:4.57px;font-size:9.6px;color:#e4e4e4;">$ARTSOURCE/tools/houdini/Data/UnityOutput/Terrain/&lt;mapname&gt;/</div></div><div class="a" style="left:1680px;top:316px;width:16px;height:15px;background:#333;border:1px solid #262626"></div><svg style="left:1685.0px;top:321.5px;" width="6" height="5" viewBox="0 0 6 5"><path d="M0 0H6L3 5Z" fill="#999"/></svg><svg style="left:1702px;top:317px;" width="12" height="14" viewBox="0 0 12 14"><rect x="0" y="1" width="7" height="10" fill="#bbb"/><path d="M2 1V11" stroke="#777"/><path d="M5 5L11 10H8L9 13L7 13L6 10L4 12Z" fill="#eee" stroke="#222" stroke-width=".6"/></svg><div class="t" style="right:586.5999999999999px;transform-origin:100% 50%;transform:scaleX(0.97);top:338.9px;font-size:9.2px;color:#c8c8c8;">iterationNumber</div><div class="a" style="left:1345.5px;top:336.2px;width:58.90000000000009px;height:15.800000000000011px;background:#131313;overflow:hidden"></div><div class="a" style="left:1345.5px;top:336.2px;width:58.90000000000009px;height:15.800000000000011px;overflow:hidden"><div class="t m" style="left:3px;transform-origin:0 50%;transform:scaleX(0.99);top:4.17px;font-size:9.6px;color:#e4e4e4;">0</div></div><div class="a" style="left:1407px;top:335px;width:5px;height:17px;background:#555;border:1px solid #333"></div><div class="a" style="left:1413px;top:342.5px;width:304px;height:2px;background:#141414"></div><svg style="left:1413px;top:347px;" width="304" height="2" viewBox="0 0 304 2"><rect x="19.2" y="0" width="1" height="1.5" fill="#777"/><rect x="38.4" y="0" width="1" height="1.5" fill="#777"/><rect x="57.6" y="0" width="1" height="1.5" fill="#777"/><rect x="76.8" y="0" width="1" height="1.5" fill="#777"/><rect x="96.0" y="0" width="1" height="1.5" fill="#777"/><rect x="115.2" y="0" width="1" height="1.5" fill="#777"/><rect x="134.4" y="0" width="1" height="1.5" fill="#777"/><rect x="153.6" y="0" width="1" height="1.5" fill="#777"/><rect x="172.8" y="0" width="1" height="1.5" fill="#777"/><rect x="192.0" y="0" width="1" height="1.5" fill="#777"/><rect x="211.2" y="0" width="1" height="1.5" fill="#777"/><rect x="230.4" y="0" width="1" height="1.5" fill="#777"/><rect x="249.6" y="0" width="1" height="1.5" fill="#777"/><rect x="268.8" y="0" width="1" height="1.5" fill="#777"/><rect x="288.0" y="0" width="1" height="1.5" fill="#777"/></svg><div class="a" style="left:1346.2px;top:359.7px;width:9.5px;height:9.6px;background:#161616"></div><div class="t" style="left:1362px;transform-origin:0 50%;transform:scaleX(0.92);top:359.0px;font-size:9.2px;color:#c8c8c8;">override date</div><div class="a" style="left:1422.6px;top:356.2px;width:294.4000000000001px;height:16.30000000000001px;background:#363636;overflow:hidden"></div><div class="a" style="left:1422.6px;top:356.2px;width:294.4000000000001px;height:16.30000000000001px;overflow:hidden"><div class="t m" style="left:3px;transform-origin:0 50%;transform:scaleX(0.99);top:4.42px;font-size:9.6px;color:#5a5a5a;">20231201</div></div><div class="t" style="right:586.5999999999999px;transform-origin:100% 50%;transform:scaleX(0.97);top:379.4px;font-size:9.2px;color:#c8c8c8;">dir name suffix</div><div class="a" style="left:1345.5px;top:376.3px;width:371.5px;height:16.599999999999966px;background:#131313;overflow:hidden"></div><div class="t" style="right:586.5999999999999px;transform-origin:100% 50%;transform:scaleX(0.97);top:400.4px;font-size:9.2px;color:#c8c8c8;">Cook Output Directory</div><div class="a" style="left:1345.5px;top:397px;width:332.5px;height:16.600000000000023px;background:#62386a;overflow:hidden"></div><div class="a" style="left:1345.5px;top:397px;width:332.5px;height:16.600000000000023px;overflow:hidden"><div class="t m" style="left:3px;transform-origin:0 50%;transform:scaleX(0.99);top:4.57px;font-size:9.6px;color:#e4e4e4;">C:/Klang/plastic/seed-art/art_source/tools/houdini/Data/UnityOutput</div></div><div class="a" style="left:1680px;top:397px;width:16px;height:15px;background:#333;border:1px solid #262626"></div><svg style="left:1685.0px;top:402.5px;" width="6" height="5" viewBox="0 0 6 5"><path d="M0 0H6L3 5Z" fill="#999"/></svg><svg style="left:1702px;top:398px;" width="12" height="14" viewBox="0 0 12 14"><rect x="0" y="1" width="7" height="10" fill="#bbb"/><path d="M2 1V11" stroke="#777"/><path d="M5 5L11 10H8L9 13L7 13L6 10L4 12Z" fill="#eee" stroke="#222" stroke-width=".6"/></svg><div class="a" style="left:1231px;top:416.7px;width:486px;height:19.1px;background:#4c4c4c"></div><svg style="left:1234px;top:423px;" width="8" height="6" viewBox="0 0 8 6"><path d="M0 0H8L4 6Z" fill="#ddd"/></svg><div class="t" style="left:1246.8px;transform-origin:0 50%;transform:scaleX(0.9);top:421.7px;font-size:9.2px;color:#dcdcdc;font-weight:bold">Subdirectories</div><div class="t" style="right:586.5999999999999px;transform-origin:100% 50%;transform:scaleX(0.97);top:444.9px;font-size:9.2px;color:#c8c8c8;">Sub Directories</div><div class="a" style="left:1345.5px;top:441px;width:33.5px;height:17px;background:#131313;overflow:hidden"></div><div class="a" style="left:1345.5px;top:441px;width:33.5px;height:17px;overflow:hidden"><div class="t m" style="left:3px;transform-origin:0 50%;transform:scaleX(0.99);top:4.77px;font-size:9.6px;color:#e4e4e4;font-weight:bold;">10</div></div><div class="a" style="left:1380px;top:441px;width:13px;height:16px;background:#444;border:1px solid #262626"></div><div class="t" style="left:1386.5px;transform:translateX(-50%) scaleX(1);top:444.0px;font-size:10px;color:#ddd;">+</div><div class="a" style="left:1394px;top:441px;width:13px;height:16px;background:#444;border:1px solid #262626"></div><div class="a" style="left:1397.5px;top:448.5px;width:6px;height:1px;background:#ddd"></div><div class="a" style="left:1409.2px;top:440px;width:46.200000000000045px;height:16.5px;background:linear-gradient(#4e4e4e,#3f3f3f);border:1px solid #222;box-shadow:0 1px 0 #1f1f1f"></div><div class="t" style="left:1432.3000000000002px;transform:translateX(-50%) scaleX(0.92);top:442.85px;font-size:9.2px;color:#d8d8d8;">Clear</div><div class="a" style="left:1238.8px;top:466.1px;width:13.6px;height:14px;background:#444;border:1px solid #262626;box-shadow:0 1px 0 #222"></div><svg style="left:1242.5px;top:469.6px;" width="6" height="6" viewBox="0 0 6 6"><path d="M0.5 0.5L5.5 5.5M5.5 0.5L0.5 5.5" stroke="#6a2a2a" stroke-width="2.6"/><path d="M0.5 0.5L5.5 5.5M5.5 0.5L0.5 5.5" stroke="#f4d0d0" stroke-width="1.2"/></svg><div class="a" style="left:1254.1px;top:466.1px;width:13.6px;height:14px;background:#444;border:1px solid #262626;box-shadow:0 1px 0 #222"></div><svg style="left:1258px;top:468.1px;" width="6" height="9" viewBox="0 0 6 9"><path d="M3 0L6 3H0Z M3 9L6 6H0Z" fill="#8ad08a"/><path d="M3 2V7" stroke="#8ad08a"/></svg><div class="t" style="right:535.9000000000001px;transform-origin:100% 50%;transform:scaleX(0.96);top:468.5px;font-size:9.2px;color:#b4b4b4;">Directory 1</div><div class="a" style="left:1397.7px;top:464.6px;width:213.70000000000005px;height:17.0px;background:#131313;overflow:hidden"></div><div class="a" style="left:1397.7px;top:464.6px;width:213.70000000000005px;height:17.0px;overflow:hidden"><div class="t m" style="left:3px;transform-origin:0 50%;transform:scaleX(0.99);top:4.77px;font-size:9.6px;color:#e4e4e4;font-weight:bold;">out/</div></div><div class="a" style="left:1615.8px;top:468.3px;width:9.5px;height:9.6px;background:#1a1a1a"></div><div class="t" style="right:221.79999999999995px;transform-origin:100% 50%;transform:scaleX(0.95);top:468.5px;font-size:9.2px;color:#b8b8b8;">Dissolve Folder 1</div><div class="a" style="left:1238.8px;top:486.31px;width:13.6px;height:14px;background:#444;border:1px solid #262626;box-shadow:0 1px 0 #222"></div><svg style="left:1242.5px;top:489.81px;" width="6" height="6" viewBox="0 0 6 6"><path d="M0.5 0.5L5.5 5.5M5.5 0.5L0.5 5.5" stroke="#6a2a2a" stroke-width="2.6"/><path d="M0.5 0.5L5.5 5.5M5.5 0.5L0.5 5.5" stroke="#f4d0d0" stroke-width="1.2"/></svg><div class="a" style="left:1254.1px;top:486.31px;width:13.6px;height:14px;background:#444;border:1px solid #262626;box-shadow:0 1px 0 #222"></div><svg style="left:1258px;top:488.31px;" width="6" height="9" viewBox="0 0 6 9"><path d="M3 0L6 3H0Z M3 9L6 6H0Z" fill="#8ad08a"/><path d="M3 2V7" stroke="#8ad08a"/></svg><div class="t" style="right:535.9000000000001px;transform-origin:100% 50%;transform:scaleX(0.96);top:488.71px;font-size:9.2px;color:#b4b4b4;">Directory 2</div><div class="a" style="left:1397.7px;top:484.81px;width:213.70000000000005px;height:17.0px;background:#131313;overflow:hidden"></div><div class="a" style="left:1397.7px;top:484.81px;width:213.70000000000005px;height:17.0px;overflow:hidden"><div class="t m" style="left:3px;transform-origin:0 50%;transform:scaleX(0.99);top:4.77px;font-size:9.6px;color:#e4e4e4;font-weight:bold;">out/static_entities/</div></div><div class="a" style="left:1615.8px;top:488.51px;width:9.5px;height:9.6px;background:#1a1a1a"></div><div class="t" style="right:221.79999999999995px;transform-origin:100% 50%;transform:scaleX(0.95);top:488.71px;font-size:9.2px;color:#b8b8b8;">Dissolve Folder 2</div><div class="a" style="left:1238.8px;top:506.52px;width:13.6px;height:14px;background:#444;border:1px solid #262626;box-shadow:0 1px 0 #222"></div><svg style="left:1242.5px;top:510.02px;" width="6" height="6" viewBox="0 0 6 6"><path d="M0.5 0.5L5.5 5.5M5.5 0.5L0.5 5.5" stroke="#6a2a2a" stroke-width="2.6"/><path d="M0.5 0.5L5.5 5.5M5.5 0.5L0.5 5.5" stroke="#f4d0d0" stroke-width="1.2"/></svg><div class="a" style="left:1254.1px;top:506.52px;width:13.6px;height:14px;background:#444;border:1px solid #262626;box-shadow:0 1px 0 #222"></div><svg style="left:1258px;top:508.52px;" width="6" height="9" viewBox="0 0 6 9"><path d="M3 0L6 3H0Z M3 9L6 6H0Z" fill="#8ad08a"/><path d="M3 2V7" stroke="#8ad08a"/></svg><div class="t" style="right:535.9000000000001px;transform-origin:100% 50%;transform:scaleX(0.96);top:508.92px;font-size:9.2px;color:#b4b4b4;">Directory 3</div><div class="a" style="left:1397.7px;top:505.02px;width:213.70000000000005px;height:17.0px;background:#131313;overflow:hidden"></div><div class="a" style="left:1397.7px;top:505.02px;width:213.70000000000005px;height:17.0px;overflow:hidden"><div class="t m" style="left:3px;transform-origin:0 50%;transform:scaleX(0.99);top:4.77px;font-size:9.6px;color:#e4e4e4;font-weight:bold;">out/height/</div></div><div class="a" style="left:1615.8px;top:508.71999999999997px;width:9.5px;height:9.6px;background:#1a1a1a"></div><div class="t" style="right:221.79999999999995px;transform-origin:100% 50%;transform:scaleX(0.95);top:508.92px;font-size:9.2px;color:#b8b8b8;">Dissolve Folder 3</div><div class="a" style="left:1238.8px;top:526.73px;width:13.6px;height:14px;background:#444;border:1px solid #262626;box-shadow:0 1px 0 #222"></div><svg style="left:1242.5px;top:530.23px;" width="6" height="6" viewBox="0 0 6 6"><path d="M0.5 0.5L5.5 5.5M5.5 0.5L0.5 5.5" stroke="#6a2a2a" stroke-width="2.6"/><path d="M0.5 0.5L5.5 5.5M5.5 0.5L0.5 5.5" stroke="#f4d0d0" stroke-width="1.2"/></svg><div class="a" style="left:1254.1px;top:526.73px;width:13.6px;height:14px;background:#444;border:1px solid #262626;box-shadow:0 1px 0 #222"></div><svg style="left:1258px;top:528.73px;" width="6" height="9" viewBox="0 0 6 9"><path d="M3 0L6 3H0Z M3 9L6 6H0Z" fill="#8ad08a"/><path d="M3 2V7" stroke="#8ad08a"/></svg><div class="t" style="right:535.9000000000001px;transform-origin:100% 50%;transform:scaleX(0.96);top:529.13px;font-size:9.2px;color:#b4b4b4;">Directory 4</div><div class="a" style="left:1397.7px;top:525.23px;width:213.70000000000005px;height:17.0px;background:#131313;overflow:hidden"></div><div class="a" style="left:1397.7px;top:525.23px;width:213.70000000000005px;height:17.0px;overflow:hidden"><div class="t m" style="left:3px;transform-origin:0 50%;transform:scaleX(0.99);top:4.77px;font-size:9.6px;color:#e4e4e4;font-weight:bold;">out/roads/</div></div><div class="a" style="left:1615.8px;top:528.9300000000001px;width:9.5px;height:9.6px;background:#1a1a1a"></div><div class="t" style="right:221.79999999999995px;transform-origin:100% 50%;transform:scaleX(0.95);top:529.13px;font-size:9.2px;color:#b8b8b8;">Dissolve Folder 4</div><div class="a" style="left:1238.8px;top:546.94px;width:13.6px;height:14px;background:#444;border:1px solid #262626;box-shadow:0 1px 0 #222"></div><svg style="left:1242.5px;top:550.44px;" width="6" height="6" viewBox="0 0 6 6"><path d="M0.5 0.5L5.5 5.5M5.5 0.5L0.5 5.5" stroke="#6a2a2a" stroke-width="2.6"/><path d="M0.5 0.5L5.5 5.5M5.5 0.5L0.5 5.5" stroke="#f4d0d0" stroke-width="1.2"/></svg><div class="a" style="left:1254.1px;top:546.94px;width:13.6px;height:14px;background:#444;border:1px solid #262626;box-shadow:0 1px 0 #222"></div><svg style="left:1258px;top:548.94px;" width="6" height="9" viewBox="0 0 6 9"><path d="M3 0L6 3H0Z M3 9L6 6H0Z" fill="#8ad08a"/><path d="M3 2V7" stroke="#8ad08a"/></svg><div class="t" style="right:535.9000000000001px;transform-origin:100% 50%;transform:scaleX(0.96);top:549.34px;font-size:9.2px;color:#b4b4b4;">Directory 5</div><div class="a" style="left:1397.7px;top:545.44px;width:213.70000000000005px;height:17.0px;background:#131313;overflow:hidden"></div><div class="a" style="left:1397.7px;top:545.44px;width:213.70000000000005px;height:17.0px;overflow:hidden"><div class="t m" style="left:3px;transform-origin:0 50%;transform:scaleX(0.99);top:4.77px;font-size:9.6px;color:#e4e4e4;font-weight:bold;">out/game_types/</div></div><div class="a" style="left:1615.8px;top:549.1400000000001px;width:9.5px;height:9.6px;background:#1a1a1a"></div><div class="t" style="right:221.79999999999995px;transform-origin:100% 50%;transform:scaleX(0.95);top:549.34px;font-size:9.2px;color:#b8b8b8;">Dissolve Folder 5</div><div class="a" style="left:1238.8px;top:567.1500000000001px;width:13.6px;height:14px;background:#444;border:1px solid #262626;box-shadow:0 1px 0 #222"></div><svg style="left:1242.5px;top:570.6500000000001px;" width="6" height="6" viewBox="0 0 6 6"><path d="M0.5 0.5L5.5 5.5M5.5 0.5L0.5 5.5" stroke="#6a2a2a" stroke-width="2.6"/><path d="M0.5 0.5L5.5 5.5M5.5 0.5L0.5 5.5" stroke="#f4d0d0" stroke-width="1.2"/></svg><div class="a" style="left:1254.1px;top:567.1500000000001px;width:13.6px;height:14px;background:#444;border:1px solid #262626;box-shadow:0 1px 0 #222"></div><svg style="left:1258px;top:569.1500000000001px;" width="6" height="9" viewBox="0 0 6 9"><path d="M3 0L6 3H0Z M3 9L6 6H0Z" fill="#8ad08a"/><path d="M3 2V7" stroke="#8ad08a"/></svg><div class="t" style="right:535.9000000000001px;transform-origin:100% 50%;transform:scaleX(0.96);top:569.55px;font-size:9.2px;color:#b4b4b4;">Directory 6</div><div class="a" style="left:1397.7px;top:565.6500000000001px;width:213.70000000000005px;height:17.0px;background:#131313;overflow:hidden"></div><div class="a" style="left:1397.7px;top:565.6500000000001px;width:213.70000000000005px;height:17.0px;overflow:hidden"><div class="t m" style="left:3px;transform-origin:0 50%;transform:scaleX(0.99);top:4.77px;font-size:9.6px;color:#e4e4e4;font-weight:bold;">out/splat/</div></div><div class="a" style="left:1615.8px;top:569.3500000000001px;width:9.5px;height:9.6px;background:#1a1a1a"></div><div class="t" style="right:221.79999999999995px;transform-origin:100% 50%;transform:scaleX(0.95);top:569.55px;font-size:9.2px;color:#b8b8b8;">Dissolve Folder 6</div><div class="a" style="left:1238.8px;top:587.36px;width:13.6px;height:14px;background:#444;border:1px solid #262626;box-shadow:0 1px 0 #222"></div><svg style="left:1242.5px;top:590.86px;" width="6" height="6" viewBox="0 0 6 6"><path d="M0.5 0.5L5.5 5.5M5.5 0.5L0.5 5.5" stroke="#6a2a2a" stroke-width="2.6"/><path d="M0.5 0.5L5.5 5.5M5.5 0.5L0.5 5.5" stroke="#f4d0d0" stroke-width="1.2"/></svg><div class="a" style="left:1254.1px;top:587.36px;width:13.6px;height:14px;background:#444;border:1px solid #262626;box-shadow:0 1px 0 #222"></div><svg style="left:1258px;top:589.36px;" width="6" height="9" viewBox="0 0 6 9"><path d="M3 0L6 3H0Z M3 9L6 6H0Z" fill="#8ad08a"/><path d="M3 2V7" stroke="#8ad08a"/></svg><div class="t" style="right:535.9000000000001px;transform-origin:100% 50%;transform:scaleX(0.96);top:589.76px;font-size:9.2px;color:#b4b4b4;">Directory 7</div><div class="a" style="left:1397.7px;top:585.86px;width:213.70000000000005px;height:17.0px;background:#131313;overflow:hidden"></div><div class="a" style="left:1397.7px;top:585.86px;width:213.70000000000005px;height:17.0px;overflow:hidden"><div class="t m" style="left:3px;transform-origin:0 50%;transform:scaleX(0.99);top:4.77px;font-size:9.6px;color:#e4e4e4;font-weight:bold;">geo/</div></div><div class="a" style="left:1615.8px;top:589.5600000000001px;width:9.5px;height:9.6px;background:#1a1a1a"></div><div class="t" style="right:221.79999999999995px;transform-origin:100% 50%;transform:scaleX(0.95);top:589.76px;font-size:9.2px;color:#b8b8b8;">Dissolve Folder 7</div><div class="a" style="left:1238.8px;top:607.57px;width:13.6px;height:14px;background:#444;border:1px solid #262626;box-shadow:0 1px 0 #222"></div><svg style="left:1242.5px;top:611.07px;" width="6" height="6" viewBox="0 0 6 6"><path d="M0.5 0.5L5.5 5.5M5.5 0.5L0.5 5.5" stroke="#6a2a2a" stroke-width="2.6"/><path d="M0.5 0.5L5.5 5.5M5.5 0.5L0.5 5.5" stroke="#f4d0d0" stroke-width="1.2"/></svg><div class="a" style="left:1254.1px;top:607.57px;width:13.6px;height:14px;background:#444;border:1px solid #262626;box-shadow:0 1px 0 #222"></div><svg style="left:1258px;top:609.57px;" width="6" height="9" viewBox="0 0 6 9"><path d="M3 0L6 3H0Z M3 9L6 6H0Z" fill="#8ad08a"/><path d="M3 2V7" stroke="#8ad08a"/></svg><div class="t" style="right:535.9000000000001px;transform-origin:100% 50%;transform:scaleX(0.96);top:609.97px;font-size:9.2px;color:#b4b4b4;">Directory 8</div><div class="a" style="left:1397.7px;top:606.07px;width:213.70000000000005px;height:17.0px;background:#131313;overflow:hidden"></div><div class="a" style="left:1397.7px;top:606.07px;width:213.70000000000005px;height:17.0px;overflow:hidden"><div class="t m" style="left:3px;transform-origin:0 50%;transform:scaleX(0.99);top:4.77px;font-size:9.6px;color:#e4e4e4;font-weight:bold;">out/vegetation_billboards</div></div><div class="a" style="left:1615.8px;top:609.7700000000001px;width:9.5px;height:9.6px;background:#1a1a1a"></div><div class="t" style="right:221.79999999999995px;transform-origin:100% 50%;transform:scaleX(0.95);top:609.97px;font-size:9.2px;color:#b8b8b8;">Dissolve Folder 8</div><div class="a" style="left:1238.8px;top:627.78px;width:13.6px;height:14px;background:#444;border:1px solid #262626;box-shadow:0 1px 0 #222"></div><svg style="left:1242.5px;top:631.28px;" width="6" height="6" viewBox="0 0 6 6"><path d="M0.5 0.5L5.5 5.5M5.5 0.5L0.5 5.5" stroke="#6a2a2a" stroke-width="2.6"/><path d="M0.5 0.5L5.5 5.5M5.5 0.5L0.5 5.5" stroke="#f4d0d0" stroke-width="1.2"/></svg><div class="a" style="left:1254.1px;top:627.78px;width:13.6px;height:14px;background:#444;border:1px solid #262626;box-shadow:0 1px 0 #222"></div><svg style="left:1258px;top:629.78px;" width="6" height="9" viewBox="0 0 6 9"><path d="M3 0L6 3H0Z M3 9L6 6H0Z" fill="#8ad08a"/><path d="M3 2V7" stroke="#8ad08a"/></svg><div class="t" style="right:535.9000000000001px;transform-origin:100% 50%;transform:scaleX(0.96);top:630.18px;font-size:9.2px;color:#b4b4b4;">Directory 9</div><div class="a" style="left:1397.7px;top:626.28px;width:213.70000000000005px;height:17.0px;background:#131313;overflow:hidden"></div><div class="a" style="left:1397.7px;top:626.28px;width:213.70000000000005px;height:17.0px;overflow:hidden"><div class="t m" style="left:3px;transform-origin:0 50%;transform:scaleX(0.99);top:4.77px;font-size:9.6px;color:#e4e4e4;font-weight:bold;">pdg/</div></div><div class="a" style="left:1615.8px;top:629.98px;width:9.5px;height:9.6px;background:#1a1a1a"></div><div class="t" style="right:221.79999999999995px;transform-origin:100% 50%;transform:scaleX(0.95);top:630.18px;font-size:9.2px;color:#b8b8b8;">Dissolve Folder 9</div><div class="a" style="left:1238.8px;top:647.99px;width:13.6px;height:14px;background:#444;border:1px solid #262626;box-shadow:0 1px 0 #222"></div><svg style="left:1242.5px;top:651.49px;" width="6" height="6" viewBox="0 0 6 6"><path d="M0.5 0.5L5.5 5.5M5.5 0.5L0.5 5.5" stroke="#6a2a2a" stroke-width="2.6"/><path d="M0.5 0.5L5.5 5.5M5.5 0.5L0.5 5.5" stroke="#f4d0d0" stroke-width="1.2"/></svg><div class="a" style="left:1254.1px;top:647.99px;width:13.6px;height:14px;background:#444;border:1px solid #262626;box-shadow:0 1px 0 #222"></div><svg style="left:1258px;top:649.99px;" width="6" height="9" viewBox="0 0 6 9"><path d="M3 0L6 3H0Z M3 9L6 6H0Z" fill="#8ad08a"/><path d="M3 2V7" stroke="#8ad08a"/></svg><div class="t" style="right:535.9000000000001px;transform-origin:100% 50%;transform:scaleX(0.96);top:650.39px;font-size:9.2px;color:#b4b4b4;">Directory 10</div><div class="a" style="left:1397.7px;top:646.49px;width:209.29999999999995px;height:17.0px;background:#62386a;overflow:hidden"></div><div class="a" style="left:1397.7px;top:646.49px;width:209.29999999999995px;height:17.0px;overflow:hidden"><div class="t m" style="left:3px;transform-origin:0 50%;transform:scaleX(0.99);top:4.77px;font-size:9.6px;color:#e4e4e4;font-weight:bold;">tempFiles/</div></div><div class="a" style="left:1611.4px;top:650.19px;width:9.5px;height:9.6px;background:#1a1a1a"></div><div class="t" style="right:221.79999999999995px;transform-origin:100% 50%;transform:scaleX(0.95);top:650.39px;font-size:9.2px;color:#b8b8b8;">Dissolve Folder 10</div><div class="a" style="left:1227.9px;top:696.7px;width:489.1px;height:45px;background:#363636;border-left:1px solid #2c2c2c;border-bottom:1px solid #2c2c2c"></div><div class="a" style="left:1229px;top:678px;width:488px;height:18.7px;background:#4c4c4c"></div><div class="t" style="left:1243.9px;transform-origin:0 50%;transform:scaleX(0.9);top:682.9px;font-size:9.2px;color:#dcdcdc;font-weight:bold">PDG Working Dir</div><div class="a" style="left:1346px;top:703.5px;width:10px;height:10px;background:#161616"></div><svg style="left:1346.5px;top:703.5px;" width="10" height="10" viewBox="0 0 10 10"><path d="M1 5L4 9L9 1" stroke="#f0f0f0" stroke-width="2.2" fill="none"/></svg><div class="t" style="left:1361.3px;transform-origin:0 50%;transform:scaleX(0.9);top:704.0px;font-size:9.2px;color:#d0d0d0;">Remove PDG Data after Bake?</div><div class="t" style="right:586.5999999999999px;transform-origin:100% 50%;transform:scaleX(0.97);top:723.7px;font-size:9.2px;color:#c8c8c8;">Working Directory</div><div class="a" style="left:1346px;top:720px;width:331.70000000000005px;height:17px;background:#62386a;overflow:hidden"></div><div class="a" style="left:1346px;top:720px;width:331.70000000000005px;height:17px;overflow:hidden"><div class="t m" style="left:3px;transform-origin:0 50%;transform:scaleX(0.99);top:4.77px;font-size:9.6px;color:#e4e4e4;">C:/Klang/plastic/seed-art/art_source/tools/houdini/Data/UnityOutput</div></div><div class="a" style="left:1680px;top:720px;width:16px;height:16px;background:#333;border:1px solid #262626"></div><svg style="left:1685.0px;top:726.0px;" width="6" height="5" viewBox="0 0 6 5"><path d="M0 0H6L3 5Z" fill="#999"/></svg><svg style="left:1702px;top:721px;" width="12" height="14" viewBox="0 0 12 14"><rect x="0" y="1" width="7" height="10" fill="#bbb"/><path d="M2 1V11" stroke="#777"/><path d="M5 5L11 10H8L9 13L7 13L6 10L4 12Z" fill="#eee" stroke="#222" stroke-width=".6"/></svg>
<svg style="left:1801px;top:744.7px;" width="85" height="85" viewBox="0 0 85 85"><defs><clipPath id="lc"><rect width="85" height="85"/></clipPath></defs>
<g clip-path="url(#lc)">
<rect width="85" height="85" fill="#8f3b7c"/>
<path d="M-2 6Q12 6 16 14Q18 20 17 28Q15 36 6 36H-2Z" fill="#5d2a70"/>
<path d="M34 -2H59V20Q59 30 49 30H44Q34 30 34 20Z" fill="#5d2a70"/>
<path d="M72 -2H87V33H79Q72 33 72 25Z" fill="#5d2a70"/>
<path d="M-2 49Q16 48 21 58Q24 70 22 87H-2Z" fill="#5d2a70"/>
<path d="M66 47Q78 46 87 49V75H74Q66 72 66 62Z" fill="#5d2a70"/>
<path d="M33 87Q36 78 50 78Q65 78 68 87Z" fill="#5d2a70"/>
</g>
<path d="M28.35 18.2V67.2M57.55 18.2V30.8M57.55 52.6V66.3" stroke="#3b1f42" stroke-width="16.7" stroke-linecap="round"/>
<path d="M32 47L55 33L62 46L47 52Z" fill="#3b1f42" stroke="#3b1f42" stroke-width="6" stroke-linejoin="round"/>
<path d="M25.6 18V71.2M31.3 18V71.2" stroke="#f6b6ee" stroke-width="4.2" stroke-linecap="round"/>
<path d="M26.5 14.6H30.2M55.6 71.5H59.6" stroke="#f6b6ee" stroke-width="2.2" stroke-linecap="round"/>
<path d="M53.7 15.2V27.5" stroke="#f6b6ee" stroke-width="3.8" stroke-linecap="round"/>
<path d="M60.2 15.2V32.5Q60 36.5 56 38.2L39 41.5" stroke="#f6b6ee" stroke-width="3.8" stroke-linecap="round" fill="none"/>
<path d="M31.3 48Q33 42.8 38.5 41.6" stroke="#f6b6ee" stroke-width="3.4" stroke-linecap="round" fill="none"/>
<path d="M44.5 44.2L55.5 45.4Q60.2 46.5 60.2 51V70" stroke="#f6b6ee" stroke-width="3.8" stroke-linecap="round" fill="none"/>
<path d="M53.7 51V67.3" stroke="#f6b6ee" stroke-width="3.8" stroke-linecap="round"/>
</svg><div class="t" style="left:1504.8px;transform-origin:0 50%;transform:scaleX(0.932);top:848.5px;font-size:29.6px;color:#000;font-weight:bold;-webkit-text-stroke:1.8px #000;letter-spacing:-1.2px;word-spacing:-2px">Property of Klang Games GmbH</div>
</body></html>
